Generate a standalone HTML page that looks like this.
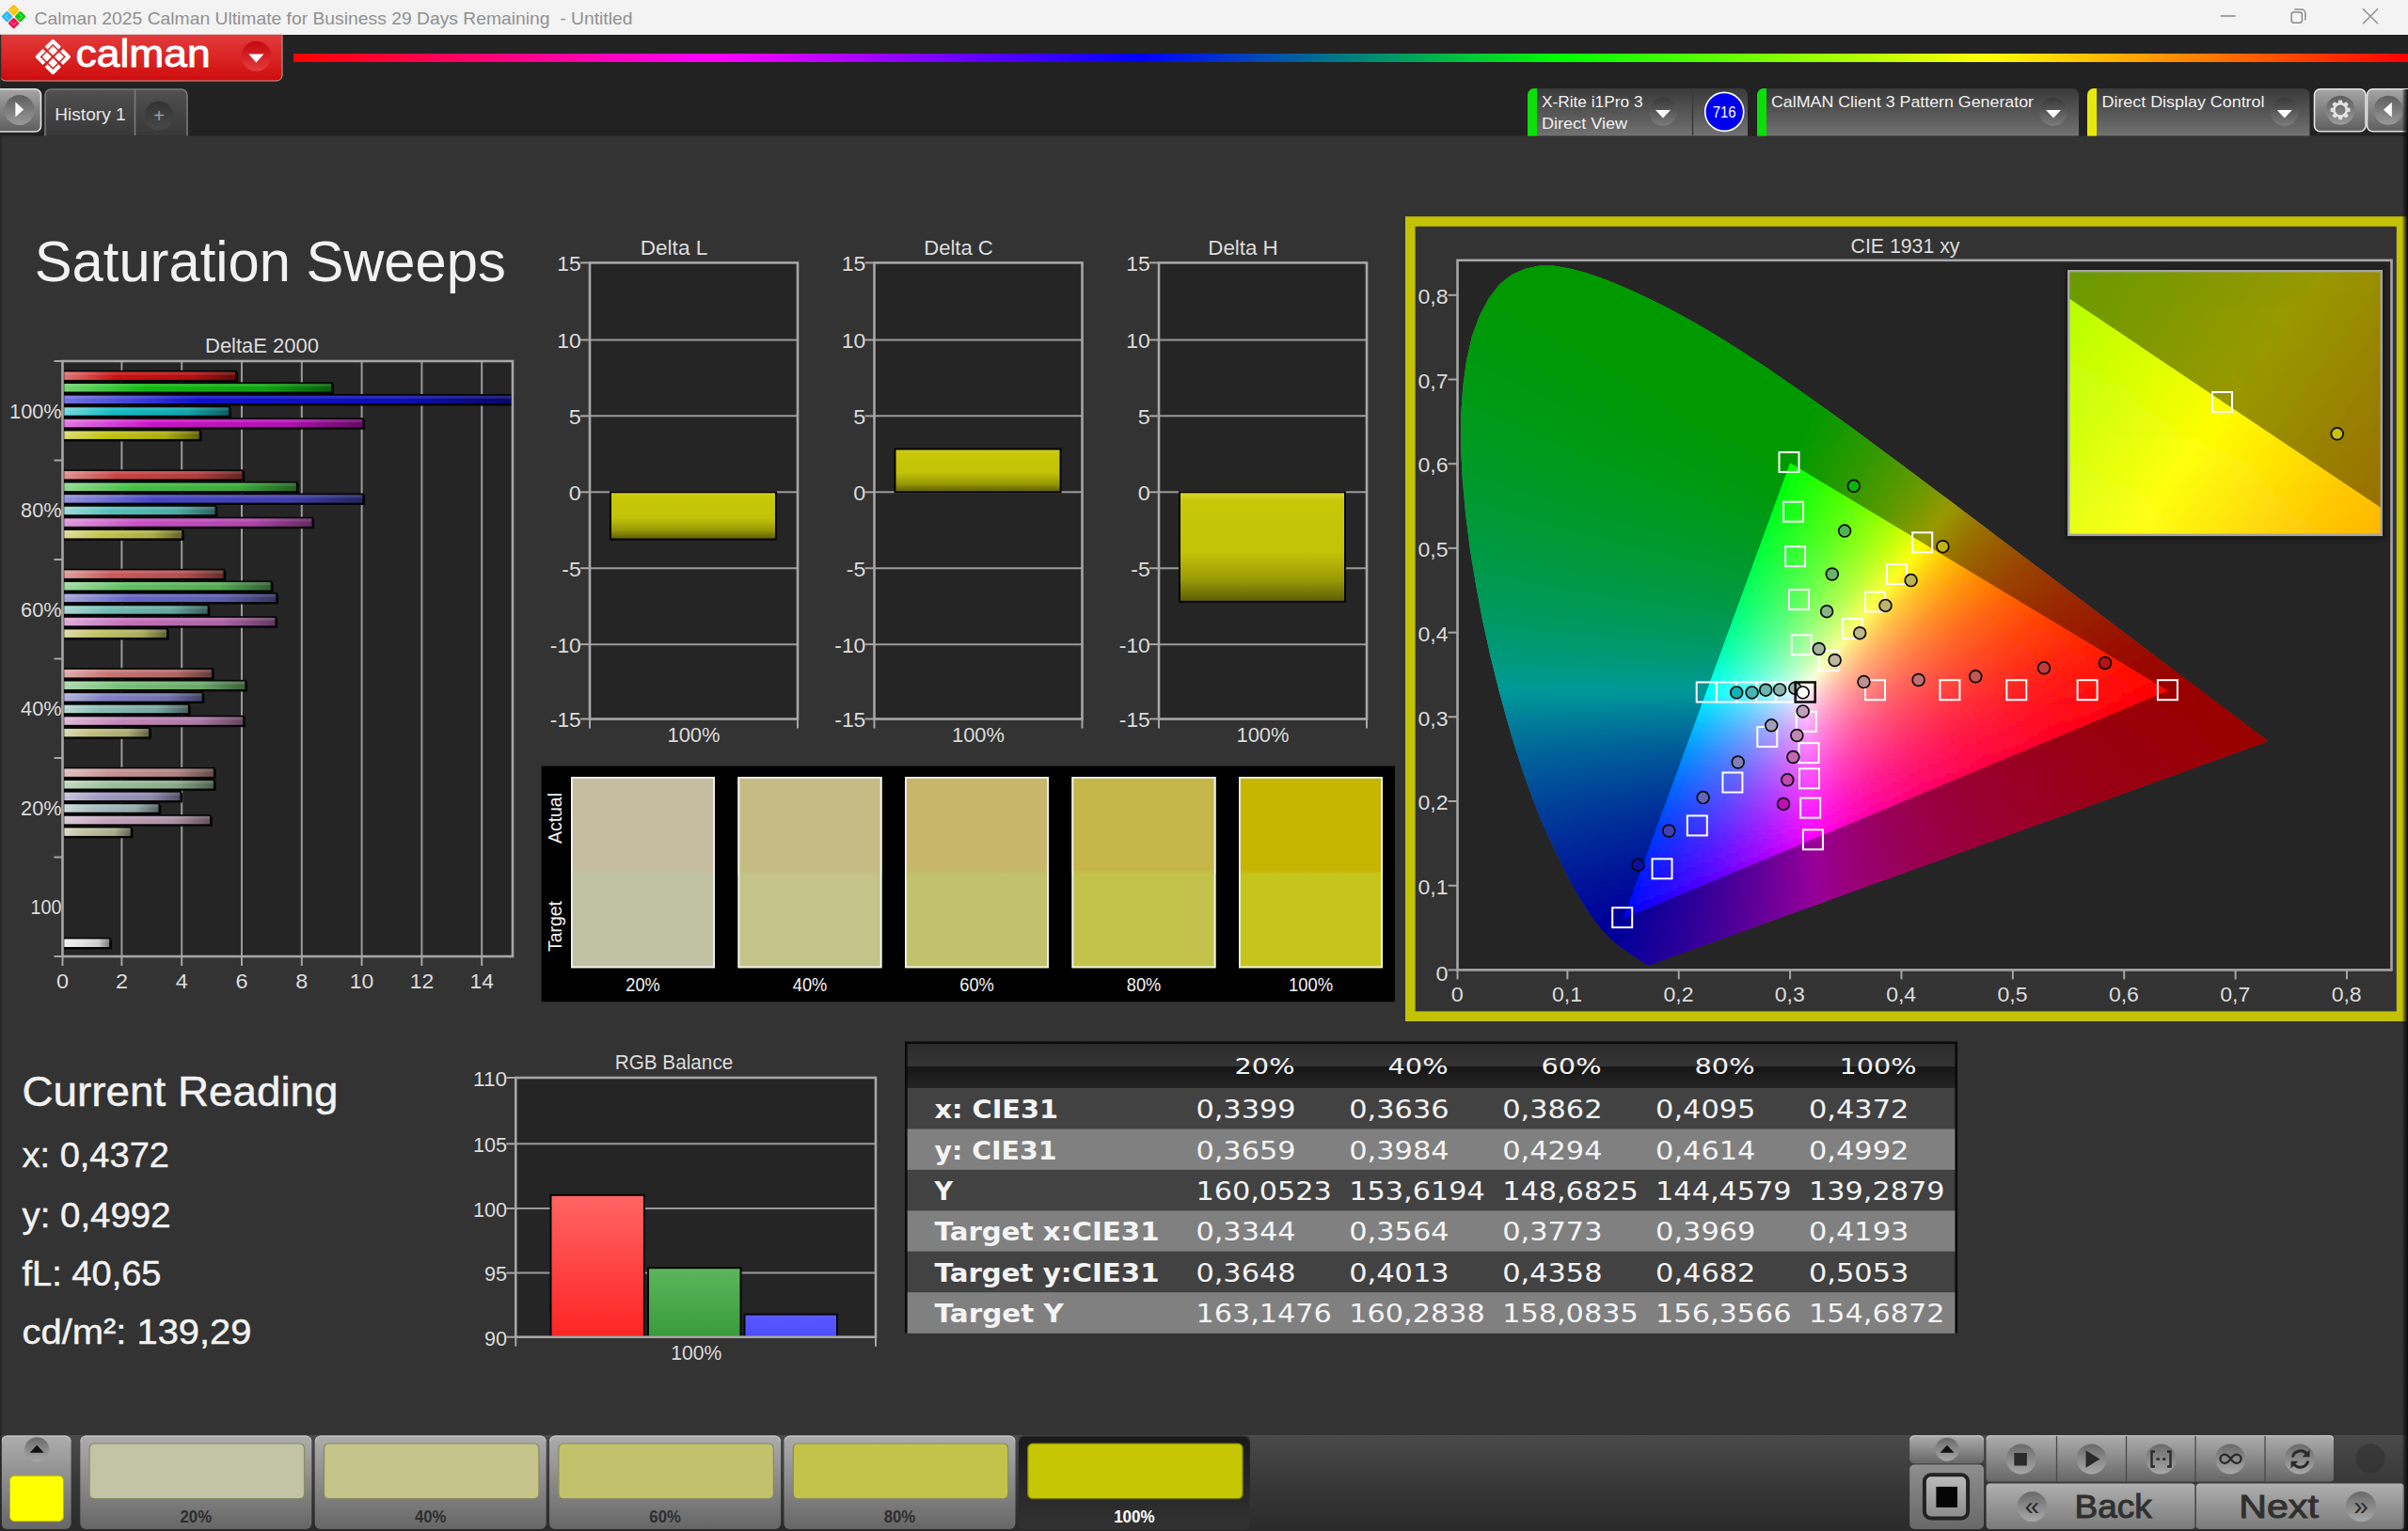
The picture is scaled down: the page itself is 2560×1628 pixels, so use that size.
<!DOCTYPE html>
<html lang="en"><head><meta charset="utf-8"><title>Calman 2025 - Saturation Sweeps</title>
<style>
html,body{margin:0;padding:0;background:#333;}
body{width:2560px;height:1628px;overflow:hidden;font-family:"Liberation Sans",Arial,sans-serif;}
svg{display:block;position:absolute;left:0;top:0;}
text{white-space:pre;}
</style></head><body>
<svg width="2560" height="1628" viewBox="0 0 2560 1628" font-family="'Liberation Sans', Arial, sans-serif"><defs><linearGradient id="g1" x1="0" y1="0" x2="0" y2="1"><stop offset="0" stop-color="#e23a3a"/><stop offset="0.5" stop-color="#da2424"/><stop offset="1" stop-color="#cd0c0c"/></linearGradient><radialGradient id="g2" cx="0.5" cy="0.3" r="0.8"><stop offset="0" stop-color="#c40a12"/><stop offset="0.7" stop-color="#cf1018"/><stop offset="1" stop-color="#e03838"/></radialGradient><linearGradient id="g3" x1="0" y1="0" x2="0" y2="1"><stop offset="0" stop-color="#c5070f"/><stop offset="1" stop-color="#e43c3c"/></linearGradient><linearGradient id="g4" x1="0" y1="0" x2="1" y2="0"><stop offset="0" stop-color="#ff0000"/><stop offset="0.2" stop-color="#ff00ff"/><stop offset="0.4" stop-color="#0000ff"/><stop offset="0.6" stop-color="#00ff00"/><stop offset="0.8" stop-color="#ffff00"/><stop offset="1" stop-color="#ff0000"/></linearGradient><linearGradient id="g5" x1="0" y1="0" x2="0" y2="1"><stop offset="0" stop-color="#a6a6a6"/><stop offset="0.5" stop-color="#808080"/><stop offset="1" stop-color="#5e5e5e"/></linearGradient><linearGradient id="g6" x1="0" y1="0" x2="0" y2="1"><stop offset="0" stop-color="#5e5e5e"/><stop offset="1" stop-color="#9a9a9a"/></linearGradient><linearGradient id="g7" x1="0" y1="0" x2="0" y2="1"><stop offset="0" stop-color="#505050"/><stop offset="1" stop-color="#383838"/></linearGradient><linearGradient id="g8" x1="0" y1="0" x2="0" y2="1"><stop offset="0" stop-color="#333"/><stop offset="1" stop-color="#484848"/></linearGradient><linearGradient id="g9" x1="0" y1="0" x2="0" y2="1"><stop offset="0" stop-color="#3a3a3a"/><stop offset="0.55" stop-color="#585858"/><stop offset="1" stop-color="#727272"/></linearGradient><linearGradient id="g10" x1="0" y1="0" x2="0" y2="1"><stop offset="0" stop-color="#383838"/><stop offset="1" stop-color="#7c7c7c"/></linearGradient><linearGradient id="g11" x1="0" y1="0" x2="0" y2="1"><stop offset="0" stop-color="#383838"/><stop offset="1" stop-color="#7c7c7c"/></linearGradient><linearGradient id="g12" x1="0" y1="0" x2="0" y2="1"><stop offset="0" stop-color="#383838"/><stop offset="1" stop-color="#7c7c7c"/></linearGradient><linearGradient id="g13" x1="0" y1="0" x2="0" y2="1"><stop offset="0" stop-color="#5e5e5e"/><stop offset="1" stop-color="#9a9a9a"/></linearGradient><linearGradient id="g14" x1="0" y1="0" x2="0" y2="1"><stop offset="0" stop-color="#5e5e5e"/><stop offset="1" stop-color="#9a9a9a"/></linearGradient><linearGradient id="g15" x1="0" y1="0" x2="1" y2="0"><stop offset="0" stop-color="#e17676"/><stop offset="0.3" stop-color="#cc1212"/><stop offset="0.75" stop-color="#b41010"/><stop offset="1" stop-color="#660909"/></linearGradient><linearGradient id="g16" x1="0" y1="0" x2="1" y2="0"><stop offset="0" stop-color="#76d676"/><stop offset="0.3" stop-color="#12b812"/><stop offset="0.75" stop-color="#10a210"/><stop offset="1" stop-color="#095c09"/></linearGradient><linearGradient id="g17" x1="0" y1="0" x2="1" y2="0"><stop offset="0" stop-color="#7474e1"/><stop offset="0.3" stop-color="#1010cc"/><stop offset="0.75" stop-color="#0e0eb4"/><stop offset="1" stop-color="#080866"/></linearGradient><linearGradient id="g18" x1="0" y1="0" x2="1" y2="0"><stop offset="0" stop-color="#76d8dd"/><stop offset="0.3" stop-color="#12bcc4"/><stop offset="0.75" stop-color="#10a5ac"/><stop offset="1" stop-color="#095e62"/></linearGradient><linearGradient id="g19" x1="0" y1="0" x2="1" y2="0"><stop offset="0" stop-color="#df77df"/><stop offset="0.3" stop-color="#c814c8"/><stop offset="0.75" stop-color="#b012b0"/><stop offset="1" stop-color="#640a64"/></linearGradient><linearGradient id="g20" x1="0" y1="0" x2="1" y2="0"><stop offset="0" stop-color="#dddd76"/><stop offset="0.3" stop-color="#c4c412"/><stop offset="0.75" stop-color="#acac10"/><stop offset="1" stop-color="#626209"/></linearGradient><linearGradient id="g21" x1="0" y1="0" x2="1" y2="0"><stop offset="0" stop-color="#df9393"/><stop offset="0.3" stop-color="#c84444"/><stop offset="0.75" stop-color="#b03c3c"/><stop offset="1" stop-color="#642222"/></linearGradient><linearGradient id="g22" x1="0" y1="0" x2="1" y2="0"><stop offset="0" stop-color="#93da93"/><stop offset="0.3" stop-color="#44c044"/><stop offset="0.75" stop-color="#3ca93c"/><stop offset="1" stop-color="#226022"/></linearGradient><linearGradient id="g23" x1="0" y1="0" x2="1" y2="0"><stop offset="0" stop-color="#9494dd"/><stop offset="0.3" stop-color="#4646c4"/><stop offset="0.75" stop-color="#3e3eac"/><stop offset="1" stop-color="#232362"/></linearGradient><linearGradient id="g24" x1="0" y1="0" x2="1" y2="0"><stop offset="0" stop-color="#9edad8"/><stop offset="0.3" stop-color="#58c0bc"/><stop offset="0.75" stop-color="#4da9a5"/><stop offset="1" stop-color="#2c605e"/></linearGradient><linearGradient id="g25" x1="0" y1="0" x2="1" y2="0"><stop offset="0" stop-color="#df9add"/><stop offset="0.3" stop-color="#c850c4"/><stop offset="0.75" stop-color="#b046ac"/><stop offset="1" stop-color="#642862"/></linearGradient><linearGradient id="g26" x1="0" y1="0" x2="1" y2="0"><stop offset="0" stop-color="#dddd9a"/><stop offset="0.3" stop-color="#c4c450"/><stop offset="0.75" stop-color="#acac46"/><stop offset="1" stop-color="#626228"/></linearGradient><linearGradient id="g27" x1="0" y1="0" x2="1" y2="0"><stop offset="0" stop-color="#df9f9f"/><stop offset="0.3" stop-color="#c85a5a"/><stop offset="0.75" stop-color="#b04f4f"/><stop offset="1" stop-color="#642d2d"/></linearGradient><linearGradient id="g28" x1="0" y1="0" x2="1" y2="0"><stop offset="0" stop-color="#a4daa4"/><stop offset="0.3" stop-color="#62c062"/><stop offset="0.75" stop-color="#56a956"/><stop offset="1" stop-color="#316031"/></linearGradient><linearGradient id="g29" x1="0" y1="0" x2="1" y2="0"><stop offset="0" stop-color="#a7a7dd"/><stop offset="0.3" stop-color="#6868c4"/><stop offset="0.75" stop-color="#5c5cac"/><stop offset="1" stop-color="#343462"/></linearGradient><linearGradient id="g30" x1="0" y1="0" x2="1" y2="0"><stop offset="0" stop-color="#acd8d4"/><stop offset="0.3" stop-color="#70bcb4"/><stop offset="0.75" stop-color="#63a59e"/><stop offset="1" stop-color="#385e5a"/></linearGradient><linearGradient id="g31" x1="0" y1="0" x2="1" y2="0"><stop offset="0" stop-color="#ddacd8"/><stop offset="0.3" stop-color="#c470bc"/><stop offset="0.75" stop-color="#ac63a5"/><stop offset="1" stop-color="#62385e"/></linearGradient><linearGradient id="g32" x1="0" y1="0" x2="1" y2="0"><stop offset="0" stop-color="#dddda7"/><stop offset="0.3" stop-color="#c4c468"/><stop offset="0.75" stop-color="#acac5c"/><stop offset="1" stop-color="#626234"/></linearGradient><linearGradient id="g33" x1="0" y1="0" x2="1" y2="0"><stop offset="0" stop-color="#dfaeae"/><stop offset="0.3" stop-color="#c87474"/><stop offset="0.75" stop-color="#b06666"/><stop offset="1" stop-color="#643a3a"/></linearGradient><linearGradient id="g34" x1="0" y1="0" x2="1" y2="0"><stop offset="0" stop-color="#b2dab2"/><stop offset="0.3" stop-color="#7ac07a"/><stop offset="0.75" stop-color="#6ba96b"/><stop offset="1" stop-color="#3d603d"/></linearGradient><linearGradient id="g35" x1="0" y1="0" x2="1" y2="0"><stop offset="0" stop-color="#b5b5dd"/><stop offset="0.3" stop-color="#8080c4"/><stop offset="0.75" stop-color="#7171ac"/><stop offset="1" stop-color="#404062"/></linearGradient><linearGradient id="g36" x1="0" y1="0" x2="1" y2="0"><stop offset="0" stop-color="#bbd8d4"/><stop offset="0.3" stop-color="#8abcb4"/><stop offset="0.75" stop-color="#79a59e"/><stop offset="1" stop-color="#455e5a"/></linearGradient><linearGradient id="g37" x1="0" y1="0" x2="1" y2="0"><stop offset="0" stop-color="#ddbad8"/><stop offset="0.3" stop-color="#c488bc"/><stop offset="0.75" stop-color="#ac78a5"/><stop offset="1" stop-color="#62445e"/></linearGradient><linearGradient id="g38" x1="0" y1="0" x2="1" y2="0"><stop offset="0" stop-color="#dadab5"/><stop offset="0.3" stop-color="#c0c080"/><stop offset="0.75" stop-color="#a9a971"/><stop offset="1" stop-color="#606040"/></linearGradient><linearGradient id="g39" x1="0" y1="0" x2="1" y2="0"><stop offset="0" stop-color="#dfc1c1"/><stop offset="0.3" stop-color="#c89494"/><stop offset="0.75" stop-color="#b08282"/><stop offset="1" stop-color="#644a4a"/></linearGradient><linearGradient id="g40" x1="0" y1="0" x2="1" y2="0"><stop offset="0" stop-color="#c4dac4"/><stop offset="0.3" stop-color="#9ac09a"/><stop offset="0.75" stop-color="#88a988"/><stop offset="1" stop-color="#4d604d"/></linearGradient><linearGradient id="g41" x1="0" y1="0" x2="1" y2="0"><stop offset="0" stop-color="#c8c6dd"/><stop offset="0.3" stop-color="#a09cc4"/><stop offset="0.75" stop-color="#8d89ac"/><stop offset="1" stop-color="#504e62"/></linearGradient><linearGradient id="g42" x1="0" y1="0" x2="1" y2="0"><stop offset="0" stop-color="#cddada"/><stop offset="0.3" stop-color="#a8c0c0"/><stop offset="0.75" stop-color="#94a9a9"/><stop offset="1" stop-color="#546060"/></linearGradient><linearGradient id="g43" x1="0" y1="0" x2="1" y2="0"><stop offset="0" stop-color="#ddcad8"/><stop offset="0.3" stop-color="#c4a4bc"/><stop offset="0.75" stop-color="#ac90a5"/><stop offset="1" stop-color="#62525e"/></linearGradient><linearGradient id="g44" x1="0" y1="0" x2="1" y2="0"><stop offset="0" stop-color="#dadac8"/><stop offset="0.3" stop-color="#c0c0a0"/><stop offset="0.75" stop-color="#a9a98d"/><stop offset="1" stop-color="#606050"/></linearGradient><linearGradient id="g45" x1="0" y1="0" x2="1" y2="0"><stop offset="0" stop-color="#f2f2f2"/><stop offset="0.3" stop-color="#e8e8e8"/><stop offset="0.75" stop-color="#cccccc"/><stop offset="1" stop-color="#747474"/></linearGradient><linearGradient id="g46" x1="0" y1="0" x2="0" y2="1"><stop offset="0" stop-color="#d8d830"/><stop offset="0.08" stop-color="#c8c808"/><stop offset="0.55" stop-color="#c2c208"/><stop offset="0.8" stop-color="#9a9a08"/><stop offset="1" stop-color="#5c5c06"/></linearGradient><linearGradient id="g47" x1="0" y1="0" x2="0" y2="1"><stop offset="0" stop-color="#d8d830"/><stop offset="0.08" stop-color="#c8c808"/><stop offset="0.55" stop-color="#c2c208"/><stop offset="0.8" stop-color="#9a9a08"/><stop offset="1" stop-color="#5c5c06"/></linearGradient><linearGradient id="g48" x1="0" y1="0" x2="0" y2="1"><stop offset="0" stop-color="#d8d830"/><stop offset="0.08" stop-color="#c8c808"/><stop offset="0.55" stop-color="#c2c208"/><stop offset="0.8" stop-color="#9a9a08"/><stop offset="1" stop-color="#5c5c06"/></linearGradient><linearGradient id="g49" x1="0" y1="0" x2="0" y2="1"><stop offset="0" stop-color="#c6bda1"/><stop offset="0.97" stop-color="#c6bda1"/><stop offset="1" stop-color="#c1c1a5"/></linearGradient><linearGradient id="g50" x1="0" y1="0" x2="0" y2="1"><stop offset="0" stop-color="#c5bc83"/><stop offset="0.97" stop-color="#c5bc83"/><stop offset="1" stop-color="#c3c38a"/></linearGradient><linearGradient id="g51" x1="0" y1="0" x2="0" y2="1"><stop offset="0" stop-color="#c6b76a"/><stop offset="0.97" stop-color="#c6b76a"/><stop offset="1" stop-color="#c2c26c"/></linearGradient><linearGradient id="g52" x1="0" y1="0" x2="0" y2="1"><stop offset="0" stop-color="#c5b64a"/><stop offset="0.97" stop-color="#c5b64a"/><stop offset="1" stop-color="#c3c34b"/></linearGradient><linearGradient id="g53" x1="0" y1="0" x2="0" y2="1"><stop offset="0" stop-color="#c7b503"/><stop offset="0.97" stop-color="#c7b503"/><stop offset="1" stop-color="#c5c51c"/></linearGradient><clipPath id="locclip"><path d="M1754.29 1025.92L1754.26 1025.91L1754.22 1025.91L1754.17 1025.92L1754.1 1025.94L1754.01 1025.98L1753.93 1026L1753.86 1026.01L1753.78 1026L1753.7 1026L1753.59 1026.03L1753.46 1026.07L1753.34 1026.09L1753.23 1026.1L1753.11 1026.1L1752.99 1026.09L1752.84 1026.09L1752.68 1026.09L1752.51 1026.09L1752.33 1026.1L1752.14 1026.11L1751.92 1026.09L1751.68 1026.04L1751.41 1025.95L1751.09 1025.83L1750.71 1025.66L1750.27 1025.45L1749.79 1025.2L1749.3 1024.92L1748.76 1024.59L1748.14 1024.21L1747.43 1023.76L1746.63 1023.25L1745.78 1022.69L1744.87 1022.06L1743.9 1021.37L1742.82 1020.62L1741.64 1019.83L1740.36 1018.97L1738.92 1018.02L1737.3 1016.96L1735.52 1015.8L1733.6 1014.52L1731.55 1013.17L1729.36 1011.7L1726.98 1010.04L1724.41 1008.18L1721.66 1006.13L1718.71 1003.76L1715.62 1001.18L1712.33 998.28L1708.66 994.61L1704.56 990.14L1700.08 984.9L1695.19 978.55L1689.91 971.18L1684.23 962.7L1678.05 952.54L1671.36 940.67L1664.17 927.12L1656.42 911.37L1647.92 893.38L1638.86 873.19L1629.7 850.37L1620.52 824.7L1611.25 796.41L1602.16 765.79L1593.12 732.41L1584.27 696.71L1576.28 660.21L1569.19 622.85L1562.97 584.69L1558.19 547.46L1554.91 511.34L1553.07 476.14L1553.11 443.04L1555.14 412.01L1559.05 383.06L1564.93 357.47L1573.01 335.43L1583.06 316.74L1594.48 302.04L1607.32 291.88L1621.53 285.72L1636.32 282.48L1651.62 282.38L1667.51 285.21L1683.48 289.3L1699.49 294.39L1715.57 300.75L1731.36 307.51L1746.67 314.41L1761.69 321.71L1776.51 329.3L1791.12 337.18L1805.54 345.35L1819.89 353.79L1834.21 362.52L1848.47 371.51L1862.68 380.7L1876.82 390.09L1890.91 399.68L1904.99 409.41L1919.06 419.27L1933.12 429.27L1947.19 439.37L1961.29 449.57L1975.41 459.87L1989.5 470.22L2003.56 480.63L2017.58 491.08L2031.58 501.53L2045.58 511.98L2059.55 522.43L2073.43 532.83L2087.2 543.21L2100.89 553.54L2114.44 563.78L2127.87 573.93L2141.16 584L2154.28 593.92L2167.21 603.71L2179.96 613.35L2192.45 622.8L2204.72 632.05L2216.73 641.1L2228.39 649.89L2239.69 658.46L2250.65 666.79L2261.13 674.74L2271.07 682.26L2280.53 689.41L2289.61 696.27L2298.38 702.89L2306.76 709.23L2314.67 715.19L2322.07 720.75L2328.99 725.93L2335.48 730.8L2341.53 735.38L2347.14 739.65L2352.38 743.63L2357.22 747.31L2361.69 750.7L2365.85 753.85L2369.72 756.76L2373.28 759.43L2376.61 761.93L2379.7 764.26L2382.55 766.43L2385.24 768.48L2387.79 770.42L2390.19 772.24L2392.45 773.95L2394.56 775.55L2396.52 777.05L2398.36 778.43L2400.07 779.7L2401.64 780.86L2403.09 781.93L2404.39 782.91L2405.56 783.8L2406.63 784.62L2407.63 785.38L2408.53 786.06L2409.35 786.69L2410.15 787.29L2410.87 787.83L2411.36 788.21Z"/></clipPath><filter id="vblur" x="-2%" y="-2%" width="104%" height="104%"><feGaussianBlur stdDeviation="0 3"/></filter><linearGradient id="g54" gradientUnits="userSpaceOnUse" x1="1621.5" y1="0" x2="1669.5" y2="0"><stop offset="0" stop-color="#00ff00"/><stop offset="1" stop-color="#00ff00"/></linearGradient><linearGradient id="g55" gradientUnits="userSpaceOnUse" x1="1605.5" y1="0" x2="1689.5" y2="0"><stop offset="0" stop-color="#00ff00"/><stop offset="1" stop-color="#00ff00"/></linearGradient><linearGradient id="g56" gradientUnits="userSpaceOnUse" x1="1597.5" y1="0" x2="1705.5" y2="0"><stop offset="0" stop-color="#00ff00"/><stop offset="1" stop-color="#00ff00"/></linearGradient><linearGradient id="g57" gradientUnits="userSpaceOnUse" x1="1593.5" y1="0" x2="1717.5" y2="0"><stop offset="0" stop-color="#00ff00"/><stop offset="1" stop-color="#00ff00"/></linearGradient><linearGradient id="g58" gradientUnits="userSpaceOnUse" x1="1585.5" y1="0" x2="1729.5" y2="0"><stop offset="0" stop-color="#00ff01"/><stop offset="1" stop-color="#00ff00"/></linearGradient><linearGradient id="g59" gradientUnits="userSpaceOnUse" x1="1581.5" y1="0" x2="1741.5" y2="0"><stop offset="0" stop-color="#00ff03"/><stop offset="1" stop-color="#00ff00"/></linearGradient><linearGradient id="g60" gradientUnits="userSpaceOnUse" x1="1577.5" y1="0" x2="1753.5" y2="0"><stop offset="0" stop-color="#00ff04"/><stop offset=".409" stop-color="#00ff00"/><stop offset="1" stop-color="#00ff00"/></linearGradient><linearGradient id="g61" gradientUnits="userSpaceOnUse" x1="1577.5" y1="0" x2="1761.5" y2="0"><stop offset="0" stop-color="#00ff06"/><stop offset=".37" stop-color="#00ff00"/><stop offset="1" stop-color="#00ff00"/></linearGradient><linearGradient id="g62" gradientUnits="userSpaceOnUse" x1="1573.5" y1="0" x2="1773.5" y2="0"><stop offset="0" stop-color="#00ff08"/><stop offset=".38" stop-color="#00ff00"/><stop offset="1" stop-color="#00ff00"/></linearGradient><linearGradient id="g63" gradientUnits="userSpaceOnUse" x1="1569.5" y1="0" x2="1781.5" y2="0"><stop offset="0" stop-color="#00ff09"/><stop offset=".396" stop-color="#00ff00"/><stop offset="1" stop-color="#00ff00"/></linearGradient><linearGradient id="g64" gradientUnits="userSpaceOnUse" x1="1569.5" y1="0" x2="1793.5" y2="0"><stop offset="0" stop-color="#00ff0b"/><stop offset=".411" stop-color="#00ff00"/><stop offset="1" stop-color="#00ff00"/></linearGradient><linearGradient id="g65" gradientUnits="userSpaceOnUse" x1="1565.5" y1="0" x2="1801.5" y2="0"><stop offset="0" stop-color="#00ff0d"/><stop offset=".441" stop-color="#00ff00"/><stop offset="1" stop-color="#00ff00"/></linearGradient><linearGradient id="g66" gradientUnits="userSpaceOnUse" x1="1565.5" y1="0" x2="1809.5" y2="0"><stop offset="0" stop-color="#00ff0e"/><stop offset=".459" stop-color="#00ff00"/><stop offset="1" stop-color="#00ff00"/></linearGradient><linearGradient id="g67" gradientUnits="userSpaceOnUse" x1="1561.5" y1="0" x2="1817.5" y2="0"><stop offset="0" stop-color="#00ff10"/><stop offset=".484" stop-color="#00ff00"/><stop offset="1" stop-color="#00ff00"/></linearGradient><linearGradient id="g68" gradientUnits="userSpaceOnUse" x1="1561.5" y1="0" x2="1825.5" y2="0"><stop offset="0" stop-color="#00ff11"/><stop offset=".5" stop-color="#00ff00"/><stop offset="1" stop-color="#00ff00"/></linearGradient><linearGradient id="g69" gradientUnits="userSpaceOnUse" x1="1557.5" y1="0" x2="1833.5" y2="0"><stop offset="0" stop-color="#00ff13"/><stop offset=".522" stop-color="#00ff00"/><stop offset="1" stop-color="#00ff00"/></linearGradient><linearGradient id="g70" gradientUnits="userSpaceOnUse" x1="1557.5" y1="0" x2="1841.5" y2="0"><stop offset="0" stop-color="#00ff15"/><stop offset=".535" stop-color="#00ff00"/><stop offset="1" stop-color="#00ff00"/></linearGradient><linearGradient id="g71" gradientUnits="userSpaceOnUse" x1="1557.5" y1="0" x2="1849.5" y2="0"><stop offset="0" stop-color="#00ff16"/><stop offset=".548" stop-color="#00ff00"/><stop offset="1" stop-color="#00ff00"/></linearGradient><linearGradient id="g72" gradientUnits="userSpaceOnUse" x1="1553.5" y1="0" x2="1857.5" y2="0"><stop offset="0" stop-color="#00ff18"/><stop offset=".566" stop-color="#00ff00"/><stop offset="1" stop-color="#00ff00"/></linearGradient><linearGradient id="g73" gradientUnits="userSpaceOnUse" x1="1553.5" y1="0" x2="1865.5" y2="0"><stop offset="0" stop-color="#00ff1a"/><stop offset=".577" stop-color="#00ff00"/><stop offset="1" stop-color="#00ff00"/></linearGradient><linearGradient id="g74" gradientUnits="userSpaceOnUse" x1="1553.5" y1="0" x2="1873.5" y2="0"><stop offset="0" stop-color="#00ff1b"/><stop offset=".588" stop-color="#00ff00"/><stop offset="1" stop-color="#00ff00"/></linearGradient><linearGradient id="g75" gradientUnits="userSpaceOnUse" x1="1553.5" y1="0" x2="1881.5" y2="0"><stop offset="0" stop-color="#00ff1d"/><stop offset=".598" stop-color="#00ff00"/><stop offset="1" stop-color="#00ff00"/></linearGradient><linearGradient id="g76" gradientUnits="userSpaceOnUse" x1="1553.5" y1="0" x2="1889.5" y2="0"><stop offset="0" stop-color="#00ff1e"/><stop offset=".607" stop-color="#00ff00"/><stop offset="1" stop-color="#00ff00"/></linearGradient><linearGradient id="g77" gradientUnits="userSpaceOnUse" x1="1549.5" y1="0" x2="1897.5" y2="0"><stop offset="0" stop-color="#00ff20"/><stop offset=".621" stop-color="#00ff00"/><stop offset="1" stop-color="#00ff00"/></linearGradient><linearGradient id="g78" gradientUnits="userSpaceOnUse" x1="1549.5" y1="0" x2="1905.5" y2="0"><stop offset="0" stop-color="#00ff22"/><stop offset=".629" stop-color="#00ff00"/><stop offset="1" stop-color="#00ff00"/></linearGradient><linearGradient id="g79" gradientUnits="userSpaceOnUse" x1="1549.5" y1="0" x2="1909.5" y2="0"><stop offset="0" stop-color="#00ff24"/><stop offset=".644" stop-color="#00ff00"/><stop offset="1" stop-color="#00ff00"/></linearGradient><linearGradient id="g80" gradientUnits="userSpaceOnUse" x1="1549.5" y1="0" x2="1917.5" y2="0"><stop offset="0" stop-color="#00ff25"/><stop offset=".652" stop-color="#00ff00"/><stop offset="1" stop-color="#00ff00"/></linearGradient><linearGradient id="g81" gradientUnits="userSpaceOnUse" x1="1549.5" y1="0" x2="1925.5" y2="0"><stop offset="0" stop-color="#00ff27"/><stop offset=".66" stop-color="#00ff00"/><stop offset="1" stop-color="#00ff00"/></linearGradient><linearGradient id="g82" gradientUnits="userSpaceOnUse" x1="1549.5" y1="0" x2="1933.5" y2="0"><stop offset="0" stop-color="#00ff29"/><stop offset=".667" stop-color="#00ff00"/><stop offset=".99" stop-color="#01ff00"/><stop offset="1" stop-color="#05ff00"/></linearGradient><linearGradient id="g83" gradientUnits="userSpaceOnUse" x1="1549.5" y1="0" x2="1937.5" y2="0"><stop offset="0" stop-color="#00ff2a"/><stop offset=".68" stop-color="#00ff00"/><stop offset=".969" stop-color="#00ff00"/><stop offset="1" stop-color="#0aff00"/></linearGradient><linearGradient id="g84" gradientUnits="userSpaceOnUse" x1="1549.5" y1="0" x2="1945.5" y2="0"><stop offset="0" stop-color="#00ff2c"/><stop offset=".687" stop-color="#00ff00"/><stop offset=".949" stop-color="#01ff00"/><stop offset="1" stop-color="#13ff00"/></linearGradient><linearGradient id="g85" gradientUnits="userSpaceOnUse" x1="1549.5" y1="0" x2="1953.5" y2="0"><stop offset="0" stop-color="#00ff2e"/><stop offset=".693" stop-color="#00ff00"/><stop offset=".921" stop-color="#00ff00"/><stop offset="1" stop-color="#1cff00"/></linearGradient><linearGradient id="g86" gradientUnits="userSpaceOnUse" x1="1549.5" y1="0" x2="1961.5" y2="0"><stop offset="0" stop-color="#00ff30"/><stop offset=".699" stop-color="#00ff00"/><stop offset=".903" stop-color="#01ff00"/><stop offset="1" stop-color="#25ff00"/></linearGradient><linearGradient id="g87" gradientUnits="userSpaceOnUse" x1="1549.5" y1="0" x2="1965.5" y2="0"><stop offset="0" stop-color="#00ff32"/><stop offset=".654" stop-color="#00ff02"/><stop offset=".894" stop-color="#02ff00"/><stop offset="1" stop-color="#2bff00"/></linearGradient><linearGradient id="g88" gradientUnits="userSpaceOnUse" x1="1549.5" y1="0" x2="1973.5" y2="0"><stop offset="0" stop-color="#00ff34"/><stop offset=".632" stop-color="#00ff05"/><stop offset=".736" stop-color="#00ff00"/><stop offset=".868" stop-color="#01ff00"/><stop offset="1" stop-color="#35ff00"/></linearGradient><linearGradient id="g89" gradientUnits="userSpaceOnUse" x1="1549.5" y1="0" x2="1981.5" y2="0"><stop offset="0" stop-color="#00ff36"/><stop offset=".62" stop-color="#00ff07"/><stop offset=".731" stop-color="#00ff00"/><stop offset=".852" stop-color="#02ff00"/><stop offset="1" stop-color="#40ff00"/></linearGradient><linearGradient id="g90" gradientUnits="userSpaceOnUse" x1="1549.5" y1="0" x2="1989.5" y2="0"><stop offset="0" stop-color="#00ff37"/><stop offset=".609" stop-color="#00ff09"/><stop offset=".727" stop-color="#00ff00"/><stop offset=".827" stop-color="#00ff00"/><stop offset="1" stop-color="#4bff00"/></linearGradient><linearGradient id="g91" gradientUnits="userSpaceOnUse" x1="1549.5" y1="0" x2="1993.5" y2="0"><stop offset="0" stop-color="#00ff39"/><stop offset=".604" stop-color="#00ff0b"/><stop offset=".739" stop-color="#00ff00"/><stop offset=".82" stop-color="#02ff00"/><stop offset="1" stop-color="#52ff00"/></linearGradient><linearGradient id="g92" gradientUnits="userSpaceOnUse" x1="1549.5" y1="0" x2="2001.5" y2="0"><stop offset="0" stop-color="#00ff3b"/><stop offset=".584" stop-color="#00ff0e"/><stop offset=".743" stop-color="#00ff00"/><stop offset=".796" stop-color="#00ff00"/><stop offset="1" stop-color="#5eff00"/></linearGradient><linearGradient id="g93" gradientUnits="userSpaceOnUse" x1="1549.5" y1="0" x2="2009.5" y2="0"><stop offset="0" stop-color="#00ff3e"/><stop offset=".574" stop-color="#00ff10"/><stop offset=".748" stop-color="#00ff00"/><stop offset=".783" stop-color="#02ff00"/><stop offset=".983" stop-color="#61ff00"/><stop offset="1" stop-color="#6aff00"/></linearGradient><linearGradient id="g94" gradientUnits="userSpaceOnUse" x1="1549.5" y1="0" x2="2013.5" y2="0"><stop offset="0" stop-color="#00ff40"/><stop offset=".569" stop-color="#00ff12"/><stop offset=".759" stop-color="#00ff00"/><stop offset=".784" stop-color="#07ff00"/><stop offset=".983" stop-color="#69ff00"/><stop offset="1" stop-color="#72ff00"/></linearGradient><linearGradient id="g95" gradientUnits="userSpaceOnUse" x1="1549.5" y1="0" x2="2021.5" y2="0"><stop offset="0" stop-color="#00ff42"/><stop offset=".551" stop-color="#00ff15"/><stop offset=".754" stop-color="#01ff00"/><stop offset=".949" stop-color="#63ff00"/><stop offset="1" stop-color="#7fff00"/></linearGradient><linearGradient id="g96" gradientUnits="userSpaceOnUse" x1="1549.5" y1="0" x2="2029.5" y2="0"><stop offset="0" stop-color="#00ff44"/><stop offset=".542" stop-color="#00ff17"/><stop offset=".733" stop-color="#00ff01"/><stop offset=".908" stop-color="#58ff00"/><stop offset="1" stop-color="#8dff00"/></linearGradient><linearGradient id="g97" gradientUnits="userSpaceOnUse" x1="1549.5" y1="0" x2="2033.5" y2="0"><stop offset="0" stop-color="#00ff46"/><stop offset=".537" stop-color="#00ff19"/><stop offset=".727" stop-color="#01ff04"/><stop offset=".835" stop-color="#37ff00"/><stop offset="1" stop-color="#97ff00"/></linearGradient><linearGradient id="g98" gradientUnits="userSpaceOnUse" x1="1549.5" y1="0" x2="2041.5" y2="0"><stop offset="0" stop-color="#00ff48"/><stop offset=".528" stop-color="#00ff1c"/><stop offset=".707" stop-color="#00ff07"/><stop offset=".789" stop-color="#28ff00"/><stop offset=".959" stop-color="#8bff00"/><stop offset="1" stop-color="#a6ff00"/></linearGradient><linearGradient id="g99" gradientUnits="userSpaceOnUse" x1="1549.5" y1="0" x2="2049.5" y2="0"><stop offset="0" stop-color="#00ff4b"/><stop offset=".512" stop-color="#00ff1f"/><stop offset=".696" stop-color="#01ff09"/><stop offset=".792" stop-color="#33ff00"/><stop offset=".952" stop-color="#95ff00"/><stop offset="1" stop-color="#b6ff00"/></linearGradient><linearGradient id="g100" gradientUnits="userSpaceOnUse" x1="1549.5" y1="0" x2="2053.5" y2="0"><stop offset="0" stop-color="#00ff4d"/><stop offset=".508" stop-color="#00ff21"/><stop offset=".69" stop-color="#03ff0c"/><stop offset=".794" stop-color="#3aff00"/><stop offset=".952" stop-color="#9eff00"/><stop offset="1" stop-color="#c0ff00"/></linearGradient><linearGradient id="g101" gradientUnits="userSpaceOnUse" x1="1549.5" y1="0" x2="2061.5" y2="0"><stop offset="0" stop-color="#00ff4f"/><stop offset=".5" stop-color="#00ff24"/><stop offset=".672" stop-color="#00ff0f"/><stop offset=".797" stop-color="#47ff00"/><stop offset=".945" stop-color="#a9ff00"/><stop offset="1" stop-color="#d2ff00"/></linearGradient><linearGradient id="g102" gradientUnits="userSpaceOnUse" x1="1549.5" y1="0" x2="2069.5" y2="0"><stop offset="0" stop-color="#00ff52"/><stop offset=".492" stop-color="#00ff26"/><stop offset=".662" stop-color="#02ff11"/><stop offset=".8" stop-color="#53ff00"/><stop offset=".946" stop-color="#b9ff00"/><stop offset="1" stop-color="#e4ff00"/></linearGradient><linearGradient id="g103" gradientUnits="userSpaceOnUse" x1="1549.5" y1="0" x2="2073.5" y2="0"><stop offset="0" stop-color="#00ff54"/><stop offset=".481" stop-color="#00ff2a"/><stop offset=".649" stop-color="#00ff15"/><stop offset=".809" stop-color="#61ff00"/><stop offset=".947" stop-color="#c4ff00"/><stop offset="1" stop-color="#f1ff00"/></linearGradient><linearGradient id="g104" gradientUnits="userSpaceOnUse" x1="1549.5" y1="0" x2="2081.5" y2="0"><stop offset="0" stop-color="#00ff57"/><stop offset=".474" stop-color="#00ff2c"/><stop offset=".639" stop-color="#02ff18"/><stop offset=".797" stop-color="#64ff00"/><stop offset=".932" stop-color="#caff00"/><stop offset=".992" stop-color="#feff00"/><stop offset="1" stop-color="#fff900"/></linearGradient><linearGradient id="g105" gradientUnits="userSpaceOnUse" x1="1549.5" y1="0" x2="2089.5" y2="0"><stop offset="0" stop-color="#00ff59"/><stop offset=".467" stop-color="#00ff2f"/><stop offset=".622" stop-color="#00ff1b"/><stop offset=".77" stop-color="#5dff05"/><stop offset=".83" stop-color="#88ff00"/><stop offset=".956" stop-color="#f0ff00"/><stop offset=".97" stop-color="#feff00"/><stop offset="1" stop-color="#ffe700"/></linearGradient><linearGradient id="g106" gradientUnits="userSpaceOnUse" x1="1553.5" y1="0" x2="2093.5" y2="0"><stop offset="0" stop-color="#00ff5b"/><stop offset=".467" stop-color="#00ff31"/><stop offset=".615" stop-color="#02ff1e"/><stop offset=".763" stop-color="#61ff08"/><stop offset=".83" stop-color="#92ff00"/><stop offset=".948" stop-color="#f7ff00"/><stop offset=".956" stop-color="#feff00"/><stop offset="1" stop-color="#ffdb00"/></linearGradient><linearGradient id="g107" gradientUnits="userSpaceOnUse" x1="1553.5" y1="0" x2="2101.5" y2="0"><stop offset="0" stop-color="#00ff5e"/><stop offset=".453" stop-color="#00ff35"/><stop offset=".599" stop-color="#00ff22"/><stop offset=".737" stop-color="#5aff0d"/><stop offset=".825" stop-color="#9dff00"/><stop offset=".934" stop-color="#feff00"/><stop offset="1" stop-color="#ffcb00"/></linearGradient><linearGradient id="g108" gradientUnits="userSpaceOnUse" x1="1553.5" y1="0" x2="2109.5" y2="0"><stop offset="0" stop-color="#00ff61"/><stop offset=".446" stop-color="#00ff37"/><stop offset=".59" stop-color="#01ff25"/><stop offset=".734" stop-color="#63ff0f"/><stop offset=".827" stop-color="#aeff00"/><stop offset=".914" stop-color="#feff00"/><stop offset=".986" stop-color="#ffc500"/><stop offset="1" stop-color="#ffbc00"/></linearGradient><linearGradient id="g109" gradientUnits="userSpaceOnUse" x1="1553.5" y1="0" x2="2113.5" y2="0"><stop offset="0" stop-color="#00ff64"/><stop offset=".443" stop-color="#00ff3a"/><stop offset=".579" stop-color="#00ff29"/><stop offset=".7" stop-color="#51ff17"/><stop offset=".821" stop-color="#b3ff00"/><stop offset=".9" stop-color="#feff00"/><stop offset=".971" stop-color="#ffc500"/><stop offset="1" stop-color="#ffb300"/></linearGradient><linearGradient id="g110" gradientUnits="userSpaceOnUse" x1="1553.5" y1="0" x2="2121.5" y2="0"><stop offset="0" stop-color="#00ff66"/><stop offset=".437" stop-color="#00ff3e"/><stop offset=".57" stop-color="#01ff2c"/><stop offset=".704" stop-color="#60ff17"/><stop offset=".824" stop-color="#c6ff01"/><stop offset=".88" stop-color="#feff00"/><stop offset=".951" stop-color="#ffc400"/><stop offset="1" stop-color="#ffa600"/></linearGradient><linearGradient id="g111" gradientUnits="userSpaceOnUse" x1="1553.5" y1="0" x2="2129.5" y2="0"><stop offset="0" stop-color="#00ff69"/><stop offset=".431" stop-color="#00ff41"/><stop offset=".556" stop-color="#00ff30"/><stop offset=".667" stop-color="#4eff1f"/><stop offset=".785" stop-color="#b2ff09"/><stop offset=".847" stop-color="#efff00"/><stop offset=".861" stop-color="#feff00"/><stop offset=".931" stop-color="#ffc400"/><stop offset="1" stop-color="#ff9a00"/></linearGradient><linearGradient id="g112" gradientUnits="userSpaceOnUse" x1="1557.5" y1="0" x2="2133.5" y2="0"><stop offset="0" stop-color="#00ff6c"/><stop offset=".424" stop-color="#00ff44"/><stop offset=".549" stop-color="#01ff34"/><stop offset=".681" stop-color="#62ff1f"/><stop offset=".792" stop-color="#c5ff0a"/><stop offset=".847" stop-color="#feff00"/><stop offset=".917" stop-color="#ffc300"/><stop offset="1" stop-color="#ff9300"/></linearGradient><linearGradient id="g113" gradientUnits="userSpaceOnUse" x1="1557.5" y1="0" x2="2141.5" y2="0"><stop offset="0" stop-color="#00ff6f"/><stop offset=".418" stop-color="#00ff47"/><stop offset=".534" stop-color="#00ff38"/><stop offset=".63" stop-color="#44ff29"/><stop offset=".747" stop-color="#a9ff14"/><stop offset=".829" stop-color="#fdff03"/><stop offset=".897" stop-color="#ffc300"/><stop offset=".973" stop-color="#ff9500"/><stop offset="1" stop-color="#ff8800"/></linearGradient><linearGradient id="g114" gradientUnits="userSpaceOnUse" x1="1557.5" y1="0" x2="2149.5" y2="0"><stop offset="0" stop-color="#00ff72"/><stop offset=".412" stop-color="#00ff4b"/><stop offset=".527" stop-color="#00ff3b"/><stop offset=".649" stop-color="#5eff28"/><stop offset=".757" stop-color="#c3ff13"/><stop offset=".811" stop-color="#fdff08"/><stop offset=".858" stop-color="#ffd200"/><stop offset=".926" stop-color="#ffa300"/><stop offset="1" stop-color="#ff7e00"/></linearGradient><linearGradient id="g115" gradientUnits="userSpaceOnUse" x1="1557.5" y1="0" x2="2153.5" y2="0"><stop offset="0" stop-color="#00ff75"/><stop offset=".409" stop-color="#00ff4e"/><stop offset=".523" stop-color="#02ff3f"/><stop offset=".644" stop-color="#62ff2c"/><stop offset=".752" stop-color="#caff17"/><stop offset=".799" stop-color="#fdff0d"/><stop offset=".859" stop-color="#ffc700"/><stop offset=".933" stop-color="#ff9700"/><stop offset="1" stop-color="#ff7800"/></linearGradient><linearGradient id="g116" gradientUnits="userSpaceOnUse" x1="1557.5" y1="0" x2="2161.5" y2="0"><stop offset="0" stop-color="#00ff78"/><stop offset=".404" stop-color="#00ff52"/><stop offset=".51" stop-color="#00ff44"/><stop offset=".629" stop-color="#61ff31"/><stop offset=".735" stop-color="#c9ff1c"/><stop offset=".781" stop-color="#fdff12"/><stop offset=".841" stop-color="#ffc603"/><stop offset=".914" stop-color="#ff9600"/><stop offset="1" stop-color="#ff6f00"/></linearGradient><linearGradient id="g117" gradientUnits="userSpaceOnUse" x1="1557.5" y1="0" x2="2169.5" y2="0"><stop offset="0" stop-color="#00ff7c"/><stop offset=".399" stop-color="#00ff56"/><stop offset=".503" stop-color="#02ff48"/><stop offset=".621" stop-color="#65ff35"/><stop offset=".719" stop-color="#c8ff22"/><stop offset=".765" stop-color="#fdff17"/><stop offset=".824" stop-color="#ffc507"/><stop offset=".869" stop-color="#ffa400"/><stop offset=".954" stop-color="#ff7900"/><stop offset="1" stop-color="#ff6700"/></linearGradient><linearGradient id="g118" gradientUnits="userSpaceOnUse" x1="1561.5" y1="0" x2="2173.5" y2="0"><stop offset="0" stop-color="#00ff7f"/><stop offset=".399" stop-color="#00ff59"/><stop offset=".49" stop-color="#00ff4c"/><stop offset=".595" stop-color="#57ff3c"/><stop offset=".693" stop-color="#b9ff2a"/><stop offset=".752" stop-color="#fdff1d"/><stop offset=".81" stop-color="#ffc50b"/><stop offset=".876" stop-color="#ff9800"/><stop offset=".967" stop-color="#ff6d00"/><stop offset="1" stop-color="#ff6200"/></linearGradient><linearGradient id="g119" gradientUnits="userSpaceOnUse" x1="1561.5" y1="0" x2="2181.5" y2="0"><stop offset="0" stop-color="#00ff82"/><stop offset=".394" stop-color="#00ff5d"/><stop offset=".484" stop-color="#02ff50"/><stop offset=".594" stop-color="#61ff3f"/><stop offset=".69" stop-color="#c7ff2d"/><stop offset=".735" stop-color="#fdff23"/><stop offset=".794" stop-color="#ffc410"/><stop offset=".858" stop-color="#ff9701"/><stop offset=".948" stop-color="#ff6c00"/><stop offset="1" stop-color="#ff5b00"/></linearGradient><linearGradient id="g120" gradientUnits="userSpaceOnUse" x1="1561.5" y1="0" x2="2185.5" y2="0"><stop offset="0" stop-color="#00ff86"/><stop offset=".391" stop-color="#00ff61"/><stop offset=".474" stop-color="#00ff56"/><stop offset=".571" stop-color="#53ff47"/><stop offset=".667" stop-color="#b7ff35"/><stop offset=".724" stop-color="#fdff28"/><stop offset=".782" stop-color="#ffc414"/><stop offset=".846" stop-color="#ff9605"/><stop offset=".897" stop-color="#ff7b00"/><stop offset="1" stop-color="#ff5600"/></linearGradient><linearGradient id="g121" gradientUnits="userSpaceOnUse" x1="1561.5" y1="0" x2="2193.5" y2="0"><stop offset="0" stop-color="#00ff89"/><stop offset=".386" stop-color="#00ff65"/><stop offset=".468" stop-color="#01ff5a"/><stop offset=".576" stop-color="#63ff49"/><stop offset=".665" stop-color="#c5ff38"/><stop offset=".709" stop-color="#fdff2e"/><stop offset=".766" stop-color="#ffc319"/><stop offset=".829" stop-color="#ff9509"/><stop offset=".892" stop-color="#ff7400"/><stop offset="1" stop-color="#ff4f00"/></linearGradient><linearGradient id="g122" gradientUnits="userSpaceOnUse" x1="1565.5" y1="0" x2="2201.5" y2="0"><stop offset="0" stop-color="#00ff8c"/><stop offset=".377" stop-color="#00ff69"/><stop offset=".453" stop-color="#00ff5f"/><stop offset=".541" stop-color="#4fff52"/><stop offset=".635" stop-color="#b5ff41"/><stop offset=".692" stop-color="#fdff35"/><stop offset=".748" stop-color="#ffc21e"/><stop offset=".811" stop-color="#ff940c"/><stop offset=".887" stop-color="#ff6e00"/><stop offset="1" stop-color="#ff4900"/></linearGradient><linearGradient id="g123" gradientUnits="userSpaceOnUse" x1="1565.5" y1="0" x2="2205.5" y2="0"><stop offset="0" stop-color="#00ff90"/><stop offset=".375" stop-color="#00ff6e"/><stop offset=".45" stop-color="#01ff64"/><stop offset=".55" stop-color="#60ff54"/><stop offset=".637" stop-color="#c3ff44"/><stop offset=".681" stop-color="#fdff3b"/><stop offset=".738" stop-color="#ffc223"/><stop offset=".8" stop-color="#ff9310"/><stop offset=".887" stop-color="#ff6800"/><stop offset="1" stop-color="#ff4400"/></linearGradient><linearGradient id="g124" gradientUnits="userSpaceOnUse" x1="1565.5" y1="0" x2="2213.5" y2="0"><stop offset="0" stop-color="#00ff94"/><stop offset=".377" stop-color="#00ff71"/><stop offset=".438" stop-color="#00ff69"/><stop offset=".512" stop-color="#44ff5e"/><stop offset=".599" stop-color="#a4ff4f"/><stop offset=".667" stop-color="#fdff42"/><stop offset=".722" stop-color="#ffc128"/><stop offset=".784" stop-color="#ff9214"/><stop offset=".87" stop-color="#ff6702"/><stop offset=".994" stop-color="#ff4000"/><stop offset="1" stop-color="#ff3f00"/></linearGradient><linearGradient id="g125" gradientUnits="userSpaceOnUse" x1="1565.5" y1="0" x2="2221.5" y2="0"><stop offset="0" stop-color="#00ff98"/><stop offset=".372" stop-color="#00ff76"/><stop offset=".433" stop-color="#00ff6e"/><stop offset=".53" stop-color="#62ff60"/><stop offset=".616" stop-color="#caff50"/><stop offset=".652" stop-color="#fdff48"/><stop offset=".701" stop-color="#ffc62f"/><stop offset=".756" stop-color="#ff991c"/><stop offset=".835" stop-color="#ff6d09"/><stop offset=".909" stop-color="#ff5200"/><stop offset="1" stop-color="#ff3900"/></linearGradient><linearGradient id="g126" gradientUnits="userSpaceOnUse" x1="1565.5" y1="0" x2="2225.5" y2="0"><stop offset="0" stop-color="#00ff9c"/><stop offset=".37" stop-color="#00ff7b"/><stop offset=".424" stop-color="#00ff74"/><stop offset=".467" stop-color="#26ff6e"/><stop offset=".558" stop-color="#8bff60"/><stop offset=".636" stop-color="#f4ff51"/><stop offset=".642" stop-color="#fdff4f"/><stop offset=".691" stop-color="#ffc535"/><stop offset=".745" stop-color="#ff9820"/><stop offset=".824" stop-color="#ff6c0c"/><stop offset=".909" stop-color="#ff4d00"/><stop offset="1" stop-color="#ff3600"/></linearGradient><linearGradient id="g127" gradientUnits="userSpaceOnUse" x1="1569.5" y1="0" x2="2233.5" y2="0"><stop offset="0" stop-color="#00ffa0"/><stop offset=".367" stop-color="#00ff80"/><stop offset=".416" stop-color="#00ff7a"/><stop offset=".506" stop-color="#5eff6c"/><stop offset=".584" stop-color="#c0ff5f"/><stop offset=".627" stop-color="#fdff56"/><stop offset=".675" stop-color="#ffc53a"/><stop offset=".729" stop-color="#ff9724"/><stop offset=".807" stop-color="#ff6b0f"/><stop offset=".91" stop-color="#ff4600"/><stop offset="1" stop-color="#ff3100"/></linearGradient><linearGradient id="g128" gradientUnits="userSpaceOnUse" x1="1569.5" y1="0" x2="2241.5" y2="0"><stop offset="0" stop-color="#00ffa4"/><stop offset=".363" stop-color="#00ff85"/><stop offset=".411" stop-color="#03ff7f"/><stop offset=".5" stop-color="#63ff72"/><stop offset=".577" stop-color="#c7ff65"/><stop offset=".613" stop-color="#fdff5e"/><stop offset=".661" stop-color="#ffc440"/><stop offset=".714" stop-color="#ff9629"/><stop offset=".792" stop-color="#ff6913"/><stop offset=".899" stop-color="#ff4300"/><stop offset="1" stop-color="#ff2c00"/></linearGradient><linearGradient id="g129" gradientUnits="userSpaceOnUse" x1="1569.5" y1="0" x2="2245.5" y2="0"><stop offset="0" stop-color="#00ffa9"/><stop offset=".367" stop-color="#00ff8a"/><stop offset=".402" stop-color="#00ff85"/><stop offset=".485" stop-color="#59ff7a"/><stop offset=".562" stop-color="#beff6d"/><stop offset=".604" stop-color="#fdff65"/><stop offset=".651" stop-color="#ffc346"/><stop offset=".704" stop-color="#ff942d"/><stop offset=".775" stop-color="#ff6b18"/><stop offset=".882" stop-color="#ff4403"/><stop offset=".988" stop-color="#ff2b00"/><stop offset="1" stop-color="#ff2900"/></linearGradient><linearGradient id="g130" gradientUnits="userSpaceOnUse" x1="1569.5" y1="0" x2="2253.5" y2="0"><stop offset="0" stop-color="#00ffad"/><stop offset=".363" stop-color="#00ff8f"/><stop offset=".398" stop-color="#02ff8b"/><stop offset=".485" stop-color="#66ff7f"/><stop offset=".561" stop-color="#ceff73"/><stop offset=".591" stop-color="#fcff6d"/><stop offset=".637" stop-color="#ffc24c"/><stop offset=".69" stop-color="#ff9332"/><stop offset=".76" stop-color="#ff6a1b"/><stop offset=".865" stop-color="#ff4306"/><stop offset=".936" stop-color="#ff3100"/><stop offset="1" stop-color="#ff2400"/></linearGradient><linearGradient id="g131" gradientUnits="userSpaceOnUse" x1="1573.5" y1="0" x2="2261.5" y2="0"><stop offset="0" stop-color="#00ffb2"/><stop offset=".366" stop-color="#00ff94"/><stop offset=".384" stop-color="#00ff92"/><stop offset=".459" stop-color="#55ff88"/><stop offset=".535" stop-color="#bcff7d"/><stop offset=".576" stop-color="#fcff75"/><stop offset=".622" stop-color="#ffc252"/><stop offset=".674" stop-color="#ff9237"/><stop offset=".744" stop-color="#ff681f"/><stop offset=".849" stop-color="#ff4109"/><stop offset=".93" stop-color="#ff2d00"/><stop offset="1" stop-color="#ff2000"/></linearGradient><linearGradient id="g132" gradientUnits="userSpaceOnUse" x1="1573.5" y1="0" x2="2265.5" y2="0"><stop offset="0" stop-color="#00ffb7"/><stop offset=".364" stop-color="#00ff9a"/><stop offset=".382" stop-color="#02ff98"/><stop offset=".462" stop-color="#61ff8e"/><stop offset=".532" stop-color="#c4ff84"/><stop offset=".566" stop-color="#fcff7e"/><stop offset=".613" stop-color="#ffc158"/><stop offset=".665" stop-color="#ff913c"/><stop offset=".734" stop-color="#ff6723"/><stop offset=".832" stop-color="#ff420c"/><stop offset=".931" stop-color="#ff2a00"/><stop offset="1" stop-color="#ff1d00"/></linearGradient><linearGradient id="g133" gradientUnits="userSpaceOnUse" x1="1573.5" y1="0" x2="2273.5" y2="0"><stop offset="0" stop-color="#00ffbc"/><stop offset=".366" stop-color="#00ffa0"/><stop offset=".377" stop-color="#05ff9f"/><stop offset=".457" stop-color="#66ff95"/><stop offset=".526" stop-color="#ccff8b"/><stop offset=".554" stop-color="#fcff86"/><stop offset=".6" stop-color="#ffc05f"/><stop offset=".651" stop-color="#ff9041"/><stop offset=".72" stop-color="#ff6626"/><stop offset=".817" stop-color="#ff400f"/><stop offset=".931" stop-color="#ff2500"/><stop offset="1" stop-color="#ff1a00"/></linearGradient><linearGradient id="g134" gradientUnits="userSpaceOnUse" x1="1577.5" y1="0" x2="2281.5" y2="0"><stop offset="0" stop-color="#00ffc0"/><stop offset=".364" stop-color="#01ffa6"/><stop offset=".443" stop-color="#64ff9d"/><stop offset=".511" stop-color="#cbff94"/><stop offset=".54" stop-color="#fcff8f"/><stop offset=".585" stop-color="#ffbf65"/><stop offset=".636" stop-color="#ff8f46"/><stop offset=".705" stop-color="#ff642a"/><stop offset=".801" stop-color="#ff3f12"/><stop offset=".932" stop-color="#ff2100"/><stop offset="1" stop-color="#ff1600"/></linearGradient><linearGradient id="g135" gradientUnits="userSpaceOnUse" x1="1577.5" y1="0" x2="2285.5" y2="0"><stop offset="0" stop-color="#00ffc6"/><stop offset=".356" stop-color="#00ffae"/><stop offset=".407" stop-color="#3cffa9"/><stop offset=".475" stop-color="#9cffa1"/><stop offset=".531" stop-color="#fcff99"/><stop offset=".565" stop-color="#ffcc76"/><stop offset=".61" stop-color="#ff9b55"/><stop offset=".672" stop-color="#ff6f36"/><stop offset=".757" stop-color="#ff491c"/><stop offset=".887" stop-color="#ff2605"/><stop offset=".966" stop-color="#ff1800"/><stop offset="1" stop-color="#ff1300"/></linearGradient><linearGradient id="g136" gradientUnits="userSpaceOnUse" x1="1577.5" y1="0" x2="2293.5" y2="0"><stop offset="0" stop-color="#00ffcb"/><stop offset=".352" stop-color="#01ffb5"/><stop offset=".425" stop-color="#5fffae"/><stop offset=".486" stop-color="#c0ffa7"/><stop offset=".52" stop-color="#fcffa2"/><stop offset=".547" stop-color="#ffd383"/><stop offset=".587" stop-color="#ffa562"/><stop offset=".642" stop-color="#ff7842"/><stop offset=".721" stop-color="#ff5026"/><stop offset=".838" stop-color="#ff2c0c"/><stop offset=".944" stop-color="#ff1800"/><stop offset="1" stop-color="#ff1000"/></linearGradient><linearGradient id="g137" gradientUnits="userSpaceOnUse" x1="1577.5" y1="0" x2="2301.5" y2="0"><stop offset="0" stop-color="#00ffd1"/><stop offset=".343" stop-color="#00ffbd"/><stop offset=".365" stop-color="#19ffbb"/><stop offset=".431" stop-color="#76ffb5"/><stop offset=".492" stop-color="#dcffae"/><stop offset=".508" stop-color="#fcffac"/><stop offset=".536" stop-color="#ffd38b"/><stop offset=".575" stop-color="#ffa468"/><stop offset=".63" stop-color="#ff7747"/><stop offset=".707" stop-color="#ff4f29"/><stop offset=".823" stop-color="#ff2b0f"/><stop offset=".945" stop-color="#ff1400"/><stop offset="1" stop-color="#ff0d00"/></linearGradient><linearGradient id="g138" gradientUnits="userSpaceOnUse" x1="1581.5" y1="0" x2="2305.5" y2="0"><stop offset="0" stop-color="#00ffd6"/><stop offset=".337" stop-color="#00ffc5"/><stop offset=".409" stop-color="#63ffbf"/><stop offset=".47" stop-color="#c7ffb9"/><stop offset=".497" stop-color="#fcffb6"/><stop offset=".519" stop-color="#ffdb9a"/><stop offset=".558" stop-color="#ffa873"/><stop offset=".608" stop-color="#ff7d51"/><stop offset=".68" stop-color="#ff5432"/><stop offset=".785" stop-color="#ff3016"/><stop offset=".939" stop-color="#ff1200"/><stop offset="1" stop-color="#ff0a00"/></linearGradient><linearGradient id="g139" gradientUnits="userSpaceOnUse" x1="1581.5" y1="0" x2="2313.5" y2="0"><stop offset="0" stop-color="#00ffdc"/><stop offset=".328" stop-color="#00ffce"/><stop offset=".344" stop-color="#12ffcd"/><stop offset=".41" stop-color="#71ffc8"/><stop offset=".464" stop-color="#d1ffc3"/><stop offset=".486" stop-color="#fcffc1"/><stop offset=".508" stop-color="#ffdaa3"/><stop offset=".546" stop-color="#ffa77a"/><stop offset=".596" stop-color="#ff7b57"/><stop offset=".667" stop-color="#ff5336"/><stop offset=".77" stop-color="#ff2f19"/><stop offset=".934" stop-color="#ff0f00"/><stop offset="1" stop-color="#ff0700"/></linearGradient><linearGradient id="g140" gradientUnits="userSpaceOnUse" x1="1581.5" y1="0" x2="2321.5" y2="0"><stop offset="0" stop-color="#00ffe2"/><stop offset=".324" stop-color="#00ffd6"/><stop offset=".389" stop-color="#5dffd3"/><stop offset=".449" stop-color="#c5ffce"/><stop offset=".476" stop-color="#fcffcc"/><stop offset=".492" stop-color="#ffe3b4"/><stop offset=".524" stop-color="#ffb38c"/><stop offset=".568" stop-color="#ff8767"/><stop offset=".627" stop-color="#ff5f45"/><stop offset=".714" stop-color="#ff3a27"/><stop offset=".849" stop-color="#ff190b"/><stop offset=".957" stop-color="#ff0900"/><stop offset="1" stop-color="#ff0400"/></linearGradient><linearGradient id="g141" gradientUnits="userSpaceOnUse" x1="1585.5" y1="0" x2="2325.5" y2="0"><stop offset="0" stop-color="#00ffe8"/><stop offset=".314" stop-color="#00ffe0"/><stop offset=".324" stop-color="#0affdf"/><stop offset=".389" stop-color="#6cffdc"/><stop offset=".443" stop-color="#cfffd9"/><stop offset=".465" stop-color="#fbffd8"/><stop offset=".481" stop-color="#ffe2be"/><stop offset=".514" stop-color="#ffb294"/><stop offset=".557" stop-color="#ff856d"/><stop offset=".616" stop-color="#ff5d4a"/><stop offset=".703" stop-color="#ff392a"/><stop offset=".838" stop-color="#ff180d"/><stop offset=".962" stop-color="#ff0600"/><stop offset="1" stop-color="#ff0200"/></linearGradient><linearGradient id="g142" gradientUnits="userSpaceOnUse" x1="1585.5" y1="0" x2="2333.5" y2="0"><stop offset="0" stop-color="#00ffef"/><stop offset=".31" stop-color="#00ffe9"/><stop offset=".364" stop-color="#4fffe7"/><stop offset=".417" stop-color="#aeffe5"/><stop offset=".455" stop-color="#fbffe4"/><stop offset=".471" stop-color="#ffe2c9"/><stop offset=".503" stop-color="#ffb09c"/><stop offset=".545" stop-color="#ff8473"/><stop offset=".604" stop-color="#ff5b4e"/><stop offset=".69" stop-color="#ff372d"/><stop offset=".824" stop-color="#ff1710"/><stop offset=".957" stop-color="#ff0400"/><stop offset="1" stop-color="#ff0000"/></linearGradient><linearGradient id="g143" gradientUnits="userSpaceOnUse" x1="1585.5" y1="0" x2="2341.5" y2="0"><stop offset="0" stop-color="#00fff6"/><stop offset=".307" stop-color="#02fff3"/><stop offset=".365" stop-color="#5efff2"/><stop offset=".418" stop-color="#c2fff1"/><stop offset=".444" stop-color="#fbfff0"/><stop offset=".455" stop-color="#ffecde"/><stop offset=".481" stop-color="#ffbeb2"/><stop offset=".519" stop-color="#ff9187"/><stop offset=".571" stop-color="#ff665f"/><stop offset=".646" stop-color="#ff413b"/><stop offset=".757" stop-color="#ff201c"/><stop offset=".937" stop-color="#ff0300"/><stop offset="1" stop-color="#ff0000"/></linearGradient><linearGradient id="g144" gradientUnits="userSpaceOnUse" x1="1589.5" y1="0" x2="2345.5" y2="0"><stop offset="0" stop-color="#00fffd"/><stop offset=".296" stop-color="#00fffd"/><stop offset=".344" stop-color="#49fffd"/><stop offset=".397" stop-color="#abfffd"/><stop offset=".434" stop-color="#fbfffd"/><stop offset=".444" stop-color="#ffebe9"/><stop offset=".471" stop-color="#ffbdbb"/><stop offset=".508" stop-color="#ff908e"/><stop offset=".561" stop-color="#ff6564"/><stop offset=".635" stop-color="#ff403f"/><stop offset=".746" stop-color="#ff1f1f"/><stop offset=".926" stop-color="#ff0202"/><stop offset="1" stop-color="#ff0000"/></linearGradient><linearGradient id="g145" gradientUnits="userSpaceOnUse" x1="1589.5" y1="0" x2="2353.5" y2="0"><stop offset="0" stop-color="#00faff"/><stop offset=".293" stop-color="#02f7ff"/><stop offset=".351" stop-color="#5ef6ff"/><stop offset=".403" stop-color="#c2f5ff"/><stop offset=".429" stop-color="#fcf4ff"/><stop offset=".461" stop-color="#ffbcc5"/><stop offset=".497" stop-color="#ff8e96"/><stop offset=".545" stop-color="#ff676d"/><stop offset=".613" stop-color="#ff4247"/><stop offset=".717" stop-color="#ff2125"/><stop offset=".885" stop-color="#ff0407"/><stop offset=".974" stop-color="#ff0000"/><stop offset="1" stop-color="#ff0000"/></linearGradient><linearGradient id="g146" gradientUnits="userSpaceOnUse" x1="1589.5" y1="0" x2="2361.5" y2="0"><stop offset="0" stop-color="#00f3ff"/><stop offset=".285" stop-color="#00edff"/><stop offset=".326" stop-color="#3debff"/><stop offset=".383" stop-color="#a3e9ff"/><stop offset=".425" stop-color="#fbe7ff"/><stop offset=".44" stop-color="#ffcce2"/><stop offset=".472" stop-color="#ff9eb0"/><stop offset=".513" stop-color="#ff7483"/><stop offset=".57" stop-color="#ff4f5b"/><stop offset=".653" stop-color="#ff2e37"/><stop offset=".782" stop-color="#ff1017"/><stop offset=".912" stop-color="#ff0004"/><stop offset="1" stop-color="#ff0000"/></linearGradient><linearGradient id="g147" gradientUnits="userSpaceOnUse" x1="1593.5" y1="0" x2="2365.5" y2="0"><stop offset="0" stop-color="#00ecff"/><stop offset=".28" stop-color="#01e3ff"/><stop offset=".342" stop-color="#62e0ff"/><stop offset=".394" stop-color="#c3ddff"/><stop offset=".42" stop-color="#fbdbff"/><stop offset=".43" stop-color="#ffcbed"/><stop offset=".461" stop-color="#ff9db9"/><stop offset=".503" stop-color="#ff738a"/><stop offset=".56" stop-color="#ff4d60"/><stop offset=".642" stop-color="#ff2c3b"/><stop offset=".767" stop-color="#ff0f1a"/><stop offset=".891" stop-color="#ff0007"/><stop offset=".984" stop-color="#ff0000"/><stop offset="1" stop-color="#ff0000"/></linearGradient><linearGradient id="g148" gradientUnits="userSpaceOnUse" x1="1593.5" y1="0" x2="2373.5" y2="0"><stop offset="0" stop-color="#00e5ff"/><stop offset=".272" stop-color="#00daff"/><stop offset=".297" stop-color="#22d8ff"/><stop offset=".359" stop-color="#88d4ff"/><stop offset=".41" stop-color="#eed0ff"/><stop offset=".415" stop-color="#fad0ff"/><stop offset=".421" stop-color="#ffcaf9"/><stop offset=".446" stop-color="#ffa2ca"/><stop offset=".482" stop-color="#ff7a9b"/><stop offset=".533" stop-color="#ff546f"/><stop offset=".605" stop-color="#ff3348"/><stop offset=".713" stop-color="#ff1626"/><stop offset=".862" stop-color="#ff000b"/><stop offset=".979" stop-color="#ff0000"/><stop offset="1" stop-color="#ff0000"/></linearGradient><linearGradient id="g149" gradientUnits="userSpaceOnUse" x1="1593.5" y1="0" x2="2377.5" y2="0"><stop offset="0" stop-color="#00dfff"/><stop offset=".27" stop-color="#00d1ff"/><stop offset=".332" stop-color="#5dccff"/><stop offset=".388" stop-color="#c3c7ff"/><stop offset=".413" stop-color="#f9c4ff"/><stop offset=".418" stop-color="#ffc0fa"/><stop offset=".444" stop-color="#ff9acb"/><stop offset=".48" stop-color="#ff749d"/><stop offset=".531" stop-color="#ff4f71"/><stop offset=".602" stop-color="#ff304a"/><stop offset=".709" stop-color="#ff1327"/><stop offset=".847" stop-color="#ff000d"/><stop offset=".985" stop-color="#ff0000"/><stop offset="1" stop-color="#ff0000"/></linearGradient><linearGradient id="g150" gradientUnits="userSpaceOnUse" x1="1597.5" y1="0" x2="2385.5" y2="0"><stop offset="0" stop-color="#00d8ff"/><stop offset=".259" stop-color="#00c9ff"/><stop offset=".274" stop-color="#12c7ff"/><stop offset=".335" stop-color="#70c2ff"/><stop offset=".391" stop-color="#d8bcff"/><stop offset=".406" stop-color="#f8baff"/><stop offset=".411" stop-color="#ffb6fb"/><stop offset=".442" stop-color="#ff8bc5"/><stop offset=".482" stop-color="#ff6594"/><stop offset=".538" stop-color="#ff4368"/><stop offset=".614" stop-color="#ff2643"/><stop offset=".731" stop-color="#ff0b21"/><stop offset=".827" stop-color="#ff0010"/><stop offset=".985" stop-color="#ff0000"/><stop offset="1" stop-color="#ff0000"/></linearGradient><linearGradient id="g151" gradientUnits="userSpaceOnUse" x1="1597.5" y1="0" x2="2393.5" y2="0"><stop offset="0" stop-color="#00d2ff"/><stop offset=".256" stop-color="#00c0ff"/><stop offset=".322" stop-color="#61baff"/><stop offset=".377" stop-color="#c4b3ff"/><stop offset=".402" stop-color="#f8afff"/><stop offset=".407" stop-color="#ffacfc"/><stop offset=".437" stop-color="#ff84c6"/><stop offset=".477" stop-color="#ff5f96"/><stop offset=".533" stop-color="#ff3f6a"/><stop offset=".613" stop-color="#ff2143"/><stop offset=".734" stop-color="#ff0721"/><stop offset=".809" stop-color="#ff0013"/><stop offset=".98" stop-color="#ff0000"/><stop offset="1" stop-color="#ff0000"/></linearGradient><linearGradient id="g152" gradientUnits="userSpaceOnUse" x1="1597.5" y1="0" x2="2397.5" y2="0"><stop offset="0" stop-color="#00cbff"/><stop offset=".25" stop-color="#00b9ff"/><stop offset=".26" stop-color="#0ab7ff"/><stop offset=".325" stop-color="#6bb0ff"/><stop offset=".38" stop-color="#cea8ff"/><stop offset=".405" stop-color="#ffa3fd"/><stop offset=".435" stop-color="#ff7dc8"/><stop offset=".475" stop-color="#ff5a97"/><stop offset=".53" stop-color="#ff3a6c"/><stop offset=".61" stop-color="#ff1e44"/><stop offset=".73" stop-color="#ff0522"/><stop offset=".8" stop-color="#ff0015"/><stop offset=".985" stop-color="#ff0000"/><stop offset="1" stop-color="#ff0000"/></linearGradient><linearGradient id="g153" gradientUnits="userSpaceOnUse" x1="1601.5" y1="0" x2="2405.5" y2="0"><stop offset="0" stop-color="#00c5ff"/><stop offset=".244" stop-color="#00b1ff"/><stop offset=".303" stop-color="#55a9ff"/><stop offset=".363" stop-color="#bba1ff"/><stop offset=".398" stop-color="#ff9afd"/><stop offset=".428" stop-color="#ff76c9"/><stop offset=".468" stop-color="#ff5499"/><stop offset=".522" stop-color="#ff366d"/><stop offset=".602" stop-color="#ff1b46"/><stop offset=".721" stop-color="#ff0323"/><stop offset=".9" stop-color="#ff0007"/><stop offset="1" stop-color="#ff0000"/></linearGradient><linearGradient id="g154" gradientUnits="userSpaceOnUse" x1="1601.5" y1="0" x2="2413.5" y2="0"><stop offset="0" stop-color="#00bfff"/><stop offset=".241" stop-color="#02a9ff"/><stop offset=".31" stop-color="#66a0ff"/><stop offset=".369" stop-color="#ce96ff"/><stop offset=".394" stop-color="#ff91fe"/><stop offset=".424" stop-color="#ff6fca"/><stop offset=".463" stop-color="#ff4f9b"/><stop offset=".517" stop-color="#ff326f"/><stop offset=".596" stop-color="#ff1847"/><stop offset=".714" stop-color="#ff0125"/><stop offset=".901" stop-color="#ff0007"/><stop offset="1" stop-color="#ff0000"/></linearGradient><linearGradient id="g155" gradientUnits="userSpaceOnUse" x1="1601.5" y1="0" x2="2413.5" y2="0"><stop offset="0" stop-color="#00b9ff"/><stop offset=".236" stop-color="#00a2ff"/><stop offset=".296" stop-color="#519aff"/><stop offset=".355" stop-color="#b390ff"/><stop offset=".394" stop-color="#ff88ff"/><stop offset=".424" stop-color="#ff68cc"/><stop offset=".463" stop-color="#ff4a9c"/><stop offset=".517" stop-color="#ff2e71"/><stop offset=".596" stop-color="#ff1549"/><stop offset=".714" stop-color="#ff0026"/><stop offset=".901" stop-color="#ff0008"/><stop offset="1" stop-color="#ff0000"/></linearGradient><linearGradient id="g156" gradientUnits="userSpaceOnUse" x1="1605.5" y1="0" x2="2401.5" y2="0"><stop offset="0" stop-color="#00b3ff"/><stop offset=".236" stop-color="#029bff"/><stop offset=".307" stop-color="#6290ff"/><stop offset=".367" stop-color="#c586ff"/><stop offset=".397" stop-color="#fe80ff"/><stop offset=".432" stop-color="#ff5dc6"/><stop offset=".472" stop-color="#ff4299"/><stop offset=".528" stop-color="#ff286f"/><stop offset=".608" stop-color="#ff1148"/><stop offset=".714" stop-color="#ff0029"/><stop offset=".894" stop-color="#ff000b"/><stop offset="1" stop-color="#ff0000"/></linearGradient><linearGradient id="g157" gradientUnits="userSpaceOnUse" x1="1605.5" y1="0" x2="2385.5" y2="0"><stop offset="0" stop-color="#00adff"/><stop offset=".236" stop-color="#0094ff"/><stop offset=".292" stop-color="#468cff"/><stop offset=".359" stop-color="#ab81ff"/><stop offset=".405" stop-color="#fd77ff"/><stop offset=".441" stop-color="#ff57c7"/><stop offset=".482" stop-color="#ff3d9a"/><stop offset=".544" stop-color="#ff236e"/><stop offset=".631" stop-color="#ff0c46"/><stop offset=".713" stop-color="#ff002e"/><stop offset=".887" stop-color="#ff0010"/><stop offset="1" stop-color="#ff0003"/></linearGradient><linearGradient id="g158" gradientUnits="userSpaceOnUse" x1="1609.5" y1="0" x2="2373.5" y2="0"><stop offset="0" stop-color="#00a7ff"/><stop offset=".236" stop-color="#018eff"/><stop offset=".314" stop-color="#6582ff"/><stop offset=".377" stop-color="#c676ff"/><stop offset=".408" stop-color="#fd6fff"/><stop offset=".45" stop-color="#ff4dc2"/><stop offset=".497" stop-color="#ff3393"/><stop offset=".56" stop-color="#ff1c69"/><stop offset=".654" stop-color="#ff0642"/><stop offset=".717" stop-color="#ff0031"/><stop offset=".895" stop-color="#ff0011"/><stop offset="1" stop-color="#ff0006"/></linearGradient><linearGradient id="g159" gradientUnits="userSpaceOnUse" x1="1609.5" y1="0" x2="2357.5" y2="0"><stop offset="0" stop-color="#00a2ff"/><stop offset=".235" stop-color="#0088ff"/><stop offset=".289" stop-color="#3d80ff"/><stop offset=".358" stop-color="#9c74ff"/><stop offset=".417" stop-color="#fc67ff"/><stop offset=".449" stop-color="#ff4ed1"/><stop offset=".492" stop-color="#ff35a2"/><stop offset=".551" stop-color="#ff1f77"/><stop offset=".636" stop-color="#ff094f"/><stop offset=".706" stop-color="#ff0039"/><stop offset=".872" stop-color="#ff0018"/><stop offset="1" stop-color="#ff0009"/></linearGradient><linearGradient id="g160" gradientUnits="userSpaceOnUse" x1="1609.5" y1="0" x2="2345.5" y2="0"><stop offset="0" stop-color="#009dff"/><stop offset=".239" stop-color="#0181ff"/><stop offset=".321" stop-color="#6174ff"/><stop offset=".391" stop-color="#c667ff"/><stop offset=".424" stop-color="#fb60ff"/><stop offset=".44" stop-color="#ff54e8"/><stop offset=".478" stop-color="#ff3bb9"/><stop offset=".533" stop-color="#ff248a"/><stop offset=".609" stop-color="#ff0e5f"/><stop offset=".701" stop-color="#ff003f"/><stop offset=".859" stop-color="#ff001d"/><stop offset="1" stop-color="#ff000b"/></linearGradient><linearGradient id="g161" gradientUnits="userSpaceOnUse" x1="1613.5" y1="0" x2="2329.5" y2="0"><stop offset="0" stop-color="#0097ff"/><stop offset=".235" stop-color="#007cff"/><stop offset=".274" stop-color="#2776ff"/><stop offset=".352" stop-color="#8769ff"/><stop offset=".425" stop-color="#f25aff"/><stop offset=".436" stop-color="#ff55fa"/><stop offset=".475" stop-color="#ff3cc6"/><stop offset=".525" stop-color="#ff2597"/><stop offset=".598" stop-color="#ff106b"/><stop offset=".693" stop-color="#ff0047"/><stop offset=".844" stop-color="#ff0024"/><stop offset="1" stop-color="#ff000f"/></linearGradient><linearGradient id="g162" gradientUnits="userSpaceOnUse" x1="1613.5" y1="0" x2="2317.5" y2="0"><stop offset="0" stop-color="#0092ff"/><stop offset=".239" stop-color="#0076ff"/><stop offset=".33" stop-color="#6467ff"/><stop offset=".403" stop-color="#c659ff"/><stop offset=".438" stop-color="#fa51ff"/><stop offset=".449" stop-color="#ff4bf2"/><stop offset=".489" stop-color="#ff34c1"/><stop offset=".545" stop-color="#ff1d91"/><stop offset=".619" stop-color="#ff0a67"/><stop offset=".693" stop-color="#ff004b"/><stop offset=".841" stop-color="#ff0028"/><stop offset="1" stop-color="#ff0011"/></linearGradient><linearGradient id="g163" gradientUnits="userSpaceOnUse" x1="1617.5" y1="0" x2="2301.5" y2="0"><stop offset="0" stop-color="#008cff"/><stop offset=".234" stop-color="#0071ff"/><stop offset=".257" stop-color="#146dff"/><stop offset=".345" stop-color="#735fff"/><stop offset=".421" stop-color="#d74fff"/><stop offset=".444" stop-color="#f94aff"/><stop offset=".45" stop-color="#ff48fc"/><stop offset=".491" stop-color="#ff31c8"/><stop offset=".544" stop-color="#ff1d9a"/><stop offset=".62" stop-color="#ff096e"/><stop offset=".69" stop-color="#ff0052"/><stop offset=".83" stop-color="#ff002f"/><stop offset="1" stop-color="#ff0015"/></linearGradient><linearGradient id="g164" gradientUnits="userSpaceOnUse" x1="1617.5" y1="0" x2="2289.5" y2="0"><stop offset="0" stop-color="#0087ff"/><stop offset=".238" stop-color="#006bff"/><stop offset=".327" stop-color="#5a5dff"/><stop offset=".411" stop-color="#bf4dff"/><stop offset=".458" stop-color="#ff41fc"/><stop offset=".5" stop-color="#ff2cc9"/><stop offset=".554" stop-color="#ff199b"/><stop offset=".631" stop-color="#ff066f"/><stop offset=".69" stop-color="#ff0058"/><stop offset=".827" stop-color="#ff0033"/><stop offset="1" stop-color="#ff0018"/></linearGradient><linearGradient id="g165" gradientUnits="userSpaceOnUse" x1="1621.5" y1="0" x2="2277.5" y2="0"><stop offset="0" stop-color="#0082ff"/><stop offset=".238" stop-color="#0265ff"/><stop offset=".335" stop-color="#6256ff"/><stop offset=".421" stop-color="#c745ff"/><stop offset=".463" stop-color="#ff3bfd"/><stop offset=".506" stop-color="#ff27ca"/><stop offset=".561" stop-color="#ff159d"/><stop offset=".64" stop-color="#ff0371"/><stop offset=".732" stop-color="#ff004f"/><stop offset=".89" stop-color="#ff002c"/><stop offset="1" stop-color="#ff001b"/></linearGradient><linearGradient id="g166" gradientUnits="userSpaceOnUse" x1="1621.5" y1="0" x2="2261.5" y2="0"><stop offset="0" stop-color="#007dff"/><stop offset=".237" stop-color="#0061ff"/><stop offset=".331" stop-color="#5652ff"/><stop offset=".419" stop-color="#b841ff"/><stop offset=".475" stop-color="#ff35fe"/><stop offset=".519" stop-color="#ff22cb"/><stop offset=".581" stop-color="#ff0f9a"/><stop offset=".662" stop-color="#ff006f"/><stop offset=".781" stop-color="#ff0048"/><stop offset=".956" stop-color="#ff0026"/><stop offset="1" stop-color="#ff0020"/></linearGradient><linearGradient id="g167" gradientUnits="userSpaceOnUse" x1="1621.5" y1="0" x2="2249.5" y2="0"><stop offset="0" stop-color="#0078ff"/><stop offset=".242" stop-color="#025bff"/><stop offset=".35" stop-color="#654aff"/><stop offset=".439" stop-color="#c739ff"/><stop offset=".484" stop-color="#ff2ffe"/><stop offset=".529" stop-color="#ff1dcd"/><stop offset=".592" stop-color="#ff0b9b"/><stop offset=".662" stop-color="#ff0076"/><stop offset=".777" stop-color="#ff004e"/><stop offset=".949" stop-color="#ff002b"/><stop offset="1" stop-color="#ff0023"/></linearGradient><linearGradient id="g168" gradientUnits="userSpaceOnUse" x1="1625.5" y1="0" x2="2233.5" y2="0"><stop offset="0" stop-color="#0073ff"/><stop offset=".237" stop-color="#0057ff"/><stop offset=".336" stop-color="#5348ff"/><stop offset=".434" stop-color="#b836ff"/><stop offset=".493" stop-color="#ff29ff"/><stop offset=".539" stop-color="#ff18ce"/><stop offset=".605" stop-color="#ff079c"/><stop offset=".664" stop-color="#ff007d"/><stop offset=".776" stop-color="#ff0055"/><stop offset=".941" stop-color="#ff0031"/><stop offset="1" stop-color="#ff0028"/></linearGradient><linearGradient id="g169" gradientUnits="userSpaceOnUse" x1="1625.5" y1="0" x2="2221.5" y2="0"><stop offset="0" stop-color="#006eff"/><stop offset=".242" stop-color="#0152ff"/><stop offset=".356" stop-color="#6140ff"/><stop offset=".456" stop-color="#c72dff"/><stop offset=".503" stop-color="#fe23ff"/><stop offset=".557" stop-color="#ff12c9"/><stop offset=".624" stop-color="#ff029a"/><stop offset=".718" stop-color="#ff006e"/><stop offset=".852" stop-color="#ff0047"/><stop offset="1" stop-color="#ff002c"/></linearGradient><linearGradient id="g170" gradientUnits="userSpaceOnUse" x1="1629.5" y1="0" x2="2205.5" y2="0"><stop offset="0" stop-color="#0069ff"/><stop offset=".236" stop-color="#004eff"/><stop offset=".333" stop-color="#4a3fff"/><stop offset=".444" stop-color="#b22cff"/><stop offset=".514" stop-color="#fe1eff"/><stop offset=".576" stop-color="#ff0bc4"/><stop offset=".646" stop-color="#ff0097"/><stop offset=".743" stop-color="#ff006d"/><stop offset=".882" stop-color="#ff0047"/><stop offset="1" stop-color="#ff0031"/></linearGradient><linearGradient id="g171" gradientUnits="userSpaceOnUse" x1="1629.5" y1="0" x2="2193.5" y2="0"><stop offset="0" stop-color="#0065ff"/><stop offset=".241" stop-color="#0149ff"/><stop offset=".369" stop-color="#6436ff"/><stop offset=".475" stop-color="#c822ff"/><stop offset=".525" stop-color="#fd18ff"/><stop offset=".589" stop-color="#ff07c5"/><stop offset=".638" stop-color="#ff00a4"/><stop offset=".73" stop-color="#ff0078"/><stop offset=".865" stop-color="#ff0050"/><stop offset="1" stop-color="#ff0036"/></linearGradient><linearGradient id="g172" gradientUnits="userSpaceOnUse" x1="1633.5" y1="0" x2="2177.5" y2="0"><stop offset="0" stop-color="#0060ff"/><stop offset=".235" stop-color="#0045ff"/><stop offset=".331" stop-color="#4238ff"/><stop offset=".449" stop-color="#a524ff"/><stop offset=".537" stop-color="#fd13ff"/><stop offset=".61" stop-color="#ff02c1"/><stop offset=".691" stop-color="#ff0092"/><stop offset=".801" stop-color="#ff0068"/><stop offset=".963" stop-color="#ff0042"/><stop offset="1" stop-color="#ff003b"/></linearGradient><linearGradient id="g173" gradientUnits="userSpaceOnUse" x1="1637.5" y1="0" x2="2165.5" y2="0"><stop offset="0" stop-color="#005bff"/><stop offset=".235" stop-color="#0040ff"/><stop offset=".371" stop-color="#602dff"/><stop offset=".492" stop-color="#c818ff"/><stop offset=".545" stop-color="#fc0dff"/><stop offset=".583" stop-color="#ff05df"/><stop offset=".629" stop-color="#ff00bd"/><stop offset=".72" stop-color="#ff008d"/><stop offset=".841" stop-color="#ff0063"/><stop offset="1" stop-color="#ff0040"/></linearGradient><linearGradient id="g174" gradientUnits="userSpaceOnUse" x1="1637.5" y1="0" x2="2149.5" y2="0"><stop offset="0" stop-color="#0057ff"/><stop offset=".242" stop-color="#023cff"/><stop offset=".383" stop-color="#6228ff"/><stop offset=".508" stop-color="#c813ff"/><stop offset=".562" stop-color="#fb08ff"/><stop offset=".586" stop-color="#ff03ed"/><stop offset=".656" stop-color="#ff00b9"/><stop offset=".75" stop-color="#ff008b"/><stop offset=".883" stop-color="#ff0060"/><stop offset="1" stop-color="#ff0047"/></linearGradient><linearGradient id="g175" gradientUnits="userSpaceOnUse" x1="1641.5" y1="0" x2="2137.5" y2="0"><stop offset="0" stop-color="#0052ff"/><stop offset=".234" stop-color="#0038ff"/><stop offset=".379" stop-color="#5d25ff"/><stop offset=".508" stop-color="#c110ff"/><stop offset=".573" stop-color="#fb03ff"/><stop offset=".589" stop-color="#ff00f4"/><stop offset=".661" stop-color="#ff00bf"/><stop offset=".758" stop-color="#ff008f"/><stop offset=".887" stop-color="#ff0065"/><stop offset="1" stop-color="#ff004c"/></linearGradient><linearGradient id="g176" gradientUnits="userSpaceOnUse" x1="1641.5" y1="0" x2="2125.5" y2="0"><stop offset="0" stop-color="#004eff"/><stop offset=".24" stop-color="#0234ff"/><stop offset=".397" stop-color="#641fff"/><stop offset=".529" stop-color="#c809ff"/><stop offset=".595" stop-color="#ff00fc"/><stop offset=".661" stop-color="#ff00ca"/><stop offset=".752" stop-color="#ff009b"/><stop offset=".876" stop-color="#ff006f"/><stop offset="1" stop-color="#ff0052"/></linearGradient><linearGradient id="g177" gradientUnits="userSpaceOnUse" x1="1645.5" y1="0" x2="2109.5" y2="0"><stop offset="0" stop-color="#0049ff"/><stop offset=".233" stop-color="#0031ff"/><stop offset=".388" stop-color="#5a1dff"/><stop offset=".534" stop-color="#c206ff"/><stop offset=".595" stop-color="#f300ff"/><stop offset=".612" stop-color="#ff00fd"/><stop offset=".681" stop-color="#ff00cb"/><stop offset=".776" stop-color="#ff009c"/><stop offset=".905" stop-color="#ff0071"/><stop offset="1" stop-color="#ff005a"/></linearGradient><linearGradient id="g178" gradientUnits="userSpaceOnUse" x1="1645.5" y1="0" x2="2097.5" y2="0"><stop offset="0" stop-color="#0045ff"/><stop offset=".239" stop-color="#022dff"/><stop offset=".407" stop-color="#6117ff"/><stop offset=".558" stop-color="#c900ff"/><stop offset=".628" stop-color="#ff00fd"/><stop offset=".708" stop-color="#ff00c7"/><stop offset=".814" stop-color="#ff0096"/><stop offset=".956" stop-color="#ff006b"/><stop offset="1" stop-color="#ff0061"/></linearGradient><linearGradient id="g179" gradientUnits="userSpaceOnUse" x1="1649.5" y1="0" x2="2081.5" y2="0"><stop offset="0" stop-color="#0040ff"/><stop offset=".231" stop-color="#002aff"/><stop offset=".398" stop-color="#5716ff"/><stop offset=".556" stop-color="#bc00ff"/><stop offset=".648" stop-color="#ff00fe"/><stop offset=".731" stop-color="#ff00c8"/><stop offset=".843" stop-color="#ff0097"/><stop offset=".991" stop-color="#ff006c"/><stop offset="1" stop-color="#ff006a"/></linearGradient><linearGradient id="g180" gradientUnits="userSpaceOnUse" x1="1653.5" y1="0" x2="2069.5" y2="0"><stop offset="0" stop-color="#003cff"/><stop offset=".231" stop-color="#0126ff"/><stop offset=".423" stop-color="#640fff"/><stop offset=".548" stop-color="#af00ff"/><stop offset=".663" stop-color="#ff00ff"/><stop offset=".75" stop-color="#ff00c9"/><stop offset=".865" stop-color="#ff0098"/><stop offset="1" stop-color="#ff0072"/></linearGradient><linearGradient id="g181" gradientUnits="userSpaceOnUse" x1="1653.5" y1="0" x2="2053.5" y2="0"><stop offset="0" stop-color="#0038ff"/><stop offset=".23" stop-color="#0023ff"/><stop offset=".4" stop-color="#5010ff"/><stop offset=".54" stop-color="#9d00ff"/><stop offset=".69" stop-color="#ff00ff"/><stop offset=".78" stop-color="#ff00ca"/><stop offset=".9" stop-color="#ff0099"/><stop offset="1" stop-color="#ff007c"/></linearGradient><linearGradient id="g182" gradientUnits="userSpaceOnUse" x1="1657.5" y1="0" x2="2041.5" y2="0"><stop offset="0" stop-color="#0034ff"/><stop offset=".229" stop-color="#011fff"/><stop offset=".438" stop-color="#6108ff"/><stop offset=".531" stop-color="#9200ff"/><stop offset=".698" stop-color="#f700ff"/><stop offset=".708" stop-color="#fe00ff"/><stop offset=".802" stop-color="#ff00cb"/><stop offset=".927" stop-color="#ff009a"/><stop offset="1" stop-color="#ff0085"/></linearGradient><linearGradient id="g183" gradientUnits="userSpaceOnUse" x1="1657.5" y1="0" x2="2025.5" y2="0"><stop offset="0" stop-color="#0030ff"/><stop offset=".228" stop-color="#001cff"/><stop offset=".413" stop-color="#4d09ff"/><stop offset=".522" stop-color="#8200ff"/><stop offset=".707" stop-color="#ea00ff"/><stop offset=".739" stop-color="#fe00ff"/><stop offset=".848" stop-color="#ff00c7"/><stop offset=".978" stop-color="#ff0098"/><stop offset="1" stop-color="#ff0092"/></linearGradient><linearGradient id="g184" gradientUnits="userSpaceOnUse" x1="1661.5" y1="0" x2="2013.5" y2="0"><stop offset="0" stop-color="#002cff"/><stop offset=".227" stop-color="#0018ff"/><stop offset=".466" stop-color="#6300ff"/><stop offset=".67" stop-color="#c900ff"/><stop offset=".761" stop-color="#fd00ff"/><stop offset=".886" stop-color="#ff00c3"/><stop offset="1" stop-color="#ff009c"/></linearGradient><linearGradient id="g185" gradientUnits="userSpaceOnUse" x1="1665.5" y1="0" x2="1997.5" y2="0"><stop offset="0" stop-color="#0027ff"/><stop offset=".229" stop-color="#0215ff"/><stop offset=".47" stop-color="#5f00ff"/><stop offset=".687" stop-color="#c300ff"/><stop offset=".795" stop-color="#fd00ff"/><stop offset=".928" stop-color="#ff00c4"/><stop offset="1" stop-color="#ff00ab"/></linearGradient><linearGradient id="g186" gradientUnits="userSpaceOnUse" x1="1669.5" y1="0" x2="1985.5" y2="0"><stop offset="0" stop-color="#0023ff"/><stop offset=".215" stop-color="#0012ff"/><stop offset=".443" stop-color="#5100ff"/><stop offset=".684" stop-color="#b700ff"/><stop offset=".823" stop-color="#fc00ff"/><stop offset=".975" stop-color="#ff00c0"/><stop offset="1" stop-color="#ff00b8"/></linearGradient><linearGradient id="g187" gradientUnits="userSpaceOnUse" x1="1669.5" y1="0" x2="1973.5" y2="0"><stop offset="0" stop-color="#001fff"/><stop offset=".224" stop-color="#020fff"/><stop offset=".434" stop-color="#4900ff"/><stop offset=".684" stop-color="#ac00ff"/><stop offset=".855" stop-color="#fc00ff"/><stop offset=".908" stop-color="#ff00e9"/><stop offset="1" stop-color="#ff00c6"/></linearGradient><linearGradient id="g188" gradientUnits="userSpaceOnUse" x1="1673.5" y1="0" x2="1957.5" y2="0"><stop offset="0" stop-color="#001bff"/><stop offset=".211" stop-color="#000cff"/><stop offset=".408" stop-color="#3c00ff"/><stop offset=".69" stop-color="#a100ff"/><stop offset=".901" stop-color="#fb00ff"/><stop offset=".944" stop-color="#ff00f0"/><stop offset="1" stop-color="#ff00da"/></linearGradient><linearGradient id="g189" gradientUnits="userSpaceOnUse" x1="1677.5" y1="0" x2="1945.5" y2="0"><stop offset="0" stop-color="#0017ff"/><stop offset=".209" stop-color="#0109ff"/><stop offset=".373" stop-color="#3000ff"/><stop offset=".672" stop-color="#9100ff"/><stop offset=".955" stop-color="#ff00fd"/><stop offset="1" stop-color="#ff00eb"/></linearGradient><linearGradient id="g190" gradientUnits="userSpaceOnUse" x1="1677.5" y1="0" x2="1929.5" y2="0"><stop offset="0" stop-color="#0014ff"/><stop offset=".206" stop-color="#0007ff"/><stop offset=".365" stop-color="#2900ff"/><stop offset=".698" stop-color="#8d00ff"/><stop offset=".984" stop-color="#f400ff"/><stop offset="1" stop-color="#fa00ff"/></linearGradient><linearGradient id="g191" gradientUnits="userSpaceOnUse" x1="1681.5" y1="0" x2="1917.5" y2="0"><stop offset="0" stop-color="#0010ff"/><stop offset=".203" stop-color="#0104ff"/><stop offset=".424" stop-color="#3700ff"/><stop offset=".78" stop-color="#9d00ff"/><stop offset="1" stop-color="#e800ff"/></linearGradient><linearGradient id="g192" gradientUnits="userSpaceOnUse" x1="1685.5" y1="0" x2="1901.5" y2="0"><stop offset="0" stop-color="#000bff"/><stop offset=".185" stop-color="#0001ff"/><stop offset=".556" stop-color="#5400ff"/><stop offset=".926" stop-color="#b900ff"/><stop offset="1" stop-color="#d000ff"/></linearGradient><linearGradient id="g193" gradientUnits="userSpaceOnUse" x1="1689.5" y1="0" x2="1889.5" y2="0"><stop offset="0" stop-color="#0007ff"/><stop offset=".18" stop-color="#0100ff"/><stop offset=".64" stop-color="#6300ff"/><stop offset="1" stop-color="#bf00ff"/></linearGradient><linearGradient id="g194" gradientUnits="userSpaceOnUse" x1="1693.5" y1="0" x2="1873.5" y2="0"><stop offset="0" stop-color="#0003ff"/><stop offset=".178" stop-color="#0200ff"/><stop offset=".689" stop-color="#6400ff"/><stop offset="1" stop-color="#a900ff"/></linearGradient><linearGradient id="g195" gradientUnits="userSpaceOnUse" x1="1697.5" y1="0" x2="1861.5" y2="0"><stop offset="0" stop-color="#0000ff"/><stop offset=".146" stop-color="#0000ff"/><stop offset=".707" stop-color="#6000ff"/><stop offset="1" stop-color="#9a00ff"/></linearGradient><linearGradient id="g196" gradientUnits="userSpaceOnUse" x1="1701.5" y1="0" x2="1845.5" y2="0"><stop offset="0" stop-color="#0000ff"/><stop offset=".139" stop-color="#0200ff"/><stop offset=".806" stop-color="#6600ff"/><stop offset="1" stop-color="#8700ff"/></linearGradient><linearGradient id="g197" gradientUnits="userSpaceOnUse" x1="1709.5" y1="0" x2="1833.5" y2="0"><stop offset="0" stop-color="#0000ff"/><stop offset=".097" stop-color="#0400ff"/><stop offset=".871" stop-color="#6700ff"/><stop offset="1" stop-color="#7900ff"/></linearGradient><linearGradient id="g198" gradientUnits="userSpaceOnUse" x1="1713.5" y1="0" x2="1817.5" y2="0"><stop offset="0" stop-color="#0000ff"/><stop offset=".692" stop-color="#4500ff"/><stop offset="1" stop-color="#6800ff"/></linearGradient><linearGradient id="g199" gradientUnits="userSpaceOnUse" x1="1721.5" y1="0" x2="1805.5" y2="0"><stop offset="0" stop-color="#0700ff"/><stop offset="1" stop-color="#5b00ff"/></linearGradient><linearGradient id="g200" gradientUnits="userSpaceOnUse" x1="1729.5" y1="0" x2="1793.5" y2="0"><stop offset="0" stop-color="#1000ff"/><stop offset="1" stop-color="#5000ff"/></linearGradient><linearGradient id="g201" gradientUnits="userSpaceOnUse" x1="1733.5" y1="0" x2="1777.5" y2="0"><stop offset="0" stop-color="#1500ff"/><stop offset="1" stop-color="#4000ff"/></linearGradient><linearGradient id="g202" gradientUnits="userSpaceOnUse" x1="1741.5" y1="0" x2="1765.5" y2="0"><stop offset="0" stop-color="#1e00ff"/><stop offset="1" stop-color="#3500ff"/></linearGradient><filter id="sblur" x="-5%" y="-5%" width="110%" height="110%"><feGaussianBlur stdDeviation="2.5"/></filter><clipPath id="insclip"><rect x="2198" y="287" width="335" height="283"/></clipPath><linearGradient id="g203" gradientUnits="userSpaceOnUse" x1="2198" y1="0" x2="2534" y2="0"><stop offset="0" stop-color="#b1ff00"/><stop offset=".81" stop-color="#fffd00"/><stop offset="1" stop-color="#ffea00"/></linearGradient><linearGradient id="g204" gradientUnits="userSpaceOnUse" x1="2198" y1="0" x2="2534" y2="0"><stop offset="0" stop-color="#b3ff00"/><stop offset=".786" stop-color="#fffd00"/><stop offset="1" stop-color="#ffe800"/></linearGradient><linearGradient id="g205" gradientUnits="userSpaceOnUse" x1="2198" y1="0" x2="2534" y2="0"><stop offset="0" stop-color="#b5ff00"/><stop offset=".762" stop-color="#fffc00"/><stop offset="1" stop-color="#ffe500"/></linearGradient><linearGradient id="g206" gradientUnits="userSpaceOnUse" x1="2198" y1="0" x2="2534" y2="0"><stop offset="0" stop-color="#b7ff01"/><stop offset=".714" stop-color="#ffff00"/><stop offset="1" stop-color="#ffe300"/></linearGradient><linearGradient id="g207" gradientUnits="userSpaceOnUse" x1="2198" y1="0" x2="2534" y2="0"><stop offset="0" stop-color="#b9ff02"/><stop offset=".69" stop-color="#ffff00"/><stop offset="1" stop-color="#ffe000"/></linearGradient><linearGradient id="g208" gradientUnits="userSpaceOnUse" x1="2198" y1="0" x2="2534" y2="0"><stop offset="0" stop-color="#bcff04"/><stop offset=".571" stop-color="#f5ff00"/><stop offset=".69" stop-color="#fffc00"/><stop offset="1" stop-color="#ffde00"/></linearGradient><linearGradient id="g209" gradientUnits="userSpaceOnUse" x1="2198" y1="0" x2="2534" y2="0"><stop offset="0" stop-color="#beff05"/><stop offset=".452" stop-color="#ebff00"/><stop offset=".643" stop-color="#fffe00"/><stop offset="1" stop-color="#ffdc00"/></linearGradient><linearGradient id="g210" gradientUnits="userSpaceOnUse" x1="2198" y1="0" x2="2534" y2="0"><stop offset="0" stop-color="#c0ff06"/><stop offset=".476" stop-color="#f1ff00"/><stop offset=".619" stop-color="#fffe00"/><stop offset="1" stop-color="#ffd900"/></linearGradient><linearGradient id="g211" gradientUnits="userSpaceOnUse" x1="2198" y1="0" x2="2534" y2="0"><stop offset="0" stop-color="#c2ff07"/><stop offset=".5" stop-color="#f6ff00"/><stop offset=".619" stop-color="#fffb00"/><stop offset="1" stop-color="#ffd700"/></linearGradient><linearGradient id="g212" gradientUnits="userSpaceOnUse" x1="2198" y1="0" x2="2534" y2="0"><stop offset="0" stop-color="#c4ff08"/><stop offset=".524" stop-color="#fbff00"/><stop offset=".643" stop-color="#fff600"/><stop offset="1" stop-color="#ffd500"/></linearGradient><linearGradient id="g213" gradientUnits="userSpaceOnUse" x1="2198" y1="0" x2="2534" y2="0"><stop offset="0" stop-color="#c7ff0a"/><stop offset=".548" stop-color="#fffd00"/><stop offset="1" stop-color="#ffd200"/></linearGradient><linearGradient id="g214" gradientUnits="userSpaceOnUse" x1="2198" y1="0" x2="2534" y2="0"><stop offset="0" stop-color="#c9ff0b"/><stop offset=".524" stop-color="#fffd00"/><stop offset="1" stop-color="#ffd000"/></linearGradient><linearGradient id="g215" gradientUnits="userSpaceOnUse" x1="2198" y1="0" x2="2534" y2="0"><stop offset="0" stop-color="#cbff0c"/><stop offset=".5" stop-color="#fffd01"/><stop offset="1" stop-color="#ffce00"/></linearGradient><linearGradient id="g216" gradientUnits="userSpaceOnUse" x1="2198" y1="0" x2="2534" y2="0"><stop offset="0" stop-color="#ceff0d"/><stop offset=".476" stop-color="#fffd03"/><stop offset="1" stop-color="#ffcc00"/></linearGradient><linearGradient id="g217" gradientUnits="userSpaceOnUse" x1="2198" y1="0" x2="2534" y2="0"><stop offset="0" stop-color="#d0ff0f"/><stop offset=".452" stop-color="#fffd04"/><stop offset=".881" stop-color="#ffd300"/><stop offset="1" stop-color="#ffc900"/></linearGradient><linearGradient id="g218" gradientUnits="userSpaceOnUse" x1="2198" y1="0" x2="2534" y2="0"><stop offset="0" stop-color="#d3ff10"/><stop offset=".405" stop-color="#ffff07"/><stop offset=".857" stop-color="#ffd300"/><stop offset="1" stop-color="#ffc700"/></linearGradient><linearGradient id="g219" gradientUnits="userSpaceOnUse" x1="2198" y1="0" x2="2534" y2="0"><stop offset="0" stop-color="#d5ff11"/><stop offset=".381" stop-color="#ffff09"/><stop offset=".881" stop-color="#ffce00"/><stop offset="1" stop-color="#ffc500"/></linearGradient><linearGradient id="g220" gradientUnits="userSpaceOnUse" x1="2198" y1="0" x2="2534" y2="0"><stop offset="0" stop-color="#d8ff13"/><stop offset=".357" stop-color="#ffff0b"/><stop offset=".929" stop-color="#ffc800"/><stop offset="1" stop-color="#ffc300"/></linearGradient><linearGradient id="g221" gradientUnits="userSpaceOnUse" x1="2198" y1="0" x2="2534" y2="0"><stop offset="0" stop-color="#daff14"/><stop offset=".333" stop-color="#fffe0d"/><stop offset=".881" stop-color="#ffca00"/><stop offset="1" stop-color="#ffc100"/></linearGradient><linearGradient id="g222" gradientUnits="userSpaceOnUse" x1="2198" y1="0" x2="2534" y2="0"><stop offset="0" stop-color="#ddff16"/><stop offset=".31" stop-color="#fffe0f"/><stop offset=".857" stop-color="#ffc901"/><stop offset="1" stop-color="#ffbe00"/></linearGradient><linearGradient id="g223" gradientUnits="userSpaceOnUse" x1="2198" y1="0" x2="2534" y2="0"><stop offset="0" stop-color="#e0ff17"/><stop offset=".286" stop-color="#fffe11"/><stop offset=".833" stop-color="#ffc903"/><stop offset="1" stop-color="#ffbc00"/></linearGradient><linearGradient id="g224" gradientUnits="userSpaceOnUse" x1="2198" y1="0" x2="2534" y2="0"><stop offset="0" stop-color="#e2ff18"/><stop offset=".262" stop-color="#fffe12"/><stop offset=".81" stop-color="#ffc904"/><stop offset="1" stop-color="#ffba00"/></linearGradient><linearGradient id="g225" gradientUnits="userSpaceOnUse" x1="2198" y1="0" x2="2534" y2="0"><stop offset="0" stop-color="#e5ff1a"/><stop offset=".238" stop-color="#fffe14"/><stop offset=".786" stop-color="#ffc806"/><stop offset="1" stop-color="#ffb801"/></linearGradient><linearGradient id="g226" gradientUnits="userSpaceOnUse" x1="2198" y1="0" x2="2534" y2="0"><stop offset="0" stop-color="#e7ff1b"/><stop offset=".214" stop-color="#fffe16"/><stop offset=".762" stop-color="#ffc807"/><stop offset="1" stop-color="#ffb602"/></linearGradient><linearGradient id="g227" x1="0" y1="0" x2="0" y2="1"><stop offset="0" stop-color="#ff6464"/><stop offset="1" stop-color="#ff2424"/></linearGradient><linearGradient id="g228" x1="0" y1="0" x2="0" y2="1"><stop offset="0" stop-color="#5cb65c"/><stop offset="1" stop-color="#3a9a3a"/></linearGradient><linearGradient id="g229" x1="0" y1="0" x2="0" y2="1"><stop offset="0" stop-color="#5a5aff"/><stop offset="1" stop-color="#4c4cff"/></linearGradient><linearGradient id="g230" x1="0" y1="0" x2="0" y2="1"><stop offset="0" stop-color="#2c2c2c"/><stop offset="1" stop-color="#343434"/></linearGradient><linearGradient id="g231" x1="0" y1="0" x2="0" y2="1"><stop offset="0" stop-color="#161616"/><stop offset="1" stop-color="#242424"/></linearGradient><linearGradient id="g232" x1="0" y1="0" x2="0" y2="1"><stop offset="0" stop-color="#4a4a4a"/><stop offset="0.5" stop-color="#383838"/><stop offset="1" stop-color="#2a2a2a"/></linearGradient><linearGradient id="g233" x1="0" y1="0" x2="0" y2="1"><stop offset="0" stop-color="#adadad"/><stop offset="0.5" stop-color="#8a8a8a"/><stop offset="1" stop-color="#666666"/></linearGradient><linearGradient id="g234" x1="0" y1="0" x2="0" y2="1"><stop offset="0" stop-color="#1a1a1a"/><stop offset="1" stop-color="#323232"/></linearGradient><linearGradient id="g235" x1="0" y1="0" x2="0" y2="1"><stop offset="0" stop-color="#6a6a6a"/><stop offset="1" stop-color="#a8a8a8"/></linearGradient><linearGradient id="g236" x1="0" y1="0" x2="0" y2="1"><stop offset="0" stop-color="#6a6a6a"/><stop offset="1" stop-color="#a8a8a8"/></linearGradient><linearGradient id="g237" x1="0" y1="0" x2="0" y2="1"><stop offset="0" stop-color="#8e8e8e"/><stop offset="1" stop-color="#686868"/></linearGradient><linearGradient id="g238" x1="0" y1="0" x2="0" y2="1"><stop offset="0" stop-color="#bcbcbc"/><stop offset="1" stop-color="#8a8a8a"/></linearGradient><linearGradient id="g239" x1="0" y1="0" x2="0" y2="1"><stop offset="0" stop-color="#6a6a6a"/><stop offset="1" stop-color="#a8a8a8"/></linearGradient><linearGradient id="g240" x1="0" y1="0" x2="0" y2="1"><stop offset="0" stop-color="#6a6a6a"/><stop offset="1" stop-color="#a8a8a8"/></linearGradient><linearGradient id="g241" x1="0" y1="0" x2="0" y2="1"><stop offset="0" stop-color="#6a6a6a"/><stop offset="1" stop-color="#a8a8a8"/></linearGradient><linearGradient id="g242" x1="0" y1="0" x2="0" y2="1"><stop offset="0" stop-color="#6a6a6a"/><stop offset="1" stop-color="#a8a8a8"/></linearGradient><linearGradient id="g243" x1="0" y1="0" x2="0" y2="1"><stop offset="0" stop-color="#6a6a6a"/><stop offset="1" stop-color="#a8a8a8"/></linearGradient><linearGradient id="g244" x1="0" y1="0" x2="0" y2="1"><stop offset="0" stop-color="#b0b0b0"/><stop offset="1" stop-color="#7a7a7a"/></linearGradient><linearGradient id="g245" x1="0" y1="0" x2="0" y2="1"><stop offset="0" stop-color="#b0b0b0"/><stop offset="1" stop-color="#7a7a7a"/></linearGradient><linearGradient id="g246" x1="0" y1="0" x2="0" y2="1"><stop offset="0" stop-color="#6a6a6a"/><stop offset="1" stop-color="#a8a8a8"/></linearGradient><linearGradient id="g247" x1="0" y1="0" x2="0" y2="1"><stop offset="0" stop-color="#6a6a6a"/><stop offset="1" stop-color="#a8a8a8"/></linearGradient><linearGradient id="g248" x1="0" y1="0" x2="1" y2="0"><stop offset="0" stop-color="#0c0c0c" stop-opacity="0"/><stop offset="0.45" stop-color="#0c0c0c" stop-opacity="0.55"/><stop offset="1" stop-color="#0c0c0c" stop-opacity="1"/></linearGradient></defs><rect x="0" y="0" width="2560" height="1628" fill="#333333"/>
<g id="titlebar">
<rect x="0" y="0" width="2560" height="37" fill="#f3f3f3"/>
<g transform="translate(14.6 17.7) rotate(45)">
<rect x="-9.4" y="-9.4" width="8.9" height="8.9" fill="#fbc20c" rx="1.6"/>
<path d="M-1.85 -6.25H-6.25V-1.85" fill="none" stroke="#ffe566" stroke-width="0.9"/>
<rect x="-9.4" y="0.5" width="8.9" height="8.9" fill="#2cb8f4" rx="1.6"/>
<path d="M-1.85 6.25H-6.25V1.85" fill="none" stroke="#9ae4ff" stroke-width="0.9"/>
<rect x="0.5" y="-9.4" width="8.9" height="8.9" fill="#12c812" rx="1.6"/>
<path d="M1.85 -6.25H6.25V-1.85" fill="none" stroke="#7dff7d" stroke-width="0.9"/>
<rect x="0.5" y="0.5" width="8.9" height="8.9" fill="#ee1458" rx="1.6"/>
<path d="M1.85 6.25H6.25V1.85" fill="none" stroke="#ff7aa8" stroke-width="0.9"/>
</g>
<text x="36.5" y="25.6" font-size="19" fill="#909090" textLength="636" lengthAdjust="spacingAndGlyphs">Calman 2025 Calman Ultimate for Business 29 Days Remaining  - Untitled</text>
<line x1="2360.7" y1="17" x2="2376.8" y2="17" stroke="#8a8a8a" stroke-width="1.5"/>
<rect x="2436.1" y="12.9" width="11.3" height="11.3" rx="2.6" fill="none" stroke="#8a8a8a" stroke-width="1.5"/>
<path d="M2439.3 10.1h7.5a4 4 0 0 1 4 4v7.5" fill="none" stroke="#8a8a8a" stroke-width="1.5"/>
<path d="M2512 9.2l16 16M2528 9.2l-16 16" stroke="#8a8a8a" stroke-width="1.4" fill="none"/>
</g>
<g id="topband">
<rect x="0" y="37" width="2560" height="107.5" fill="#222222"/>
<path d="M0 37H300V80a6 6 0 0 1 -6 6H6a6 6 0 0 1 -6 -6Z" fill="url(#g1)" stroke="#c9a0a0" stroke-width="1"/>
<rect x="0" y="37" width="301" height="1.5" fill="#e23a3a"/>
<g transform="translate(56.3 60.4) rotate(45)">
<rect x="-8.2" y="-8.2" width="7.2" height="7.2" fill="#fff" rx="1"/>
<rect x="-8.2" y="1" width="7.2" height="7.2" fill="#fff" rx="1"/>
<rect x="1" y="-8.2" width="7.2" height="7.2" fill="#fff" rx="1"/>
<rect x="1" y="1" width="7.2" height="7.2" fill="#fff" rx="1"/>
<path d="M-1.5 -11.7H-11.7V-1.5" fill="none" stroke="#fff" stroke-width="4.1" stroke-linejoin="round"/>
<path d="M-1.5 11.7H-11.7V1.5" fill="none" stroke="#fff" stroke-width="4.1" stroke-linejoin="round"/>
<path d="M1.5 -11.7H11.7V-1.5" fill="none" stroke="#fff" stroke-width="4.1" stroke-linejoin="round"/>
<path d="M1.5 11.7H11.7V1.5" fill="none" stroke="#fff" stroke-width="4.1" stroke-linejoin="round"/>
</g>
<text x="80.6" y="71.2" font-size="40.5" fill="#ffffff" textLength="143" lengthAdjust="spacingAndGlyphs" stroke="#ffffff" stroke-width="0.9">calman</text>
<circle cx="272.4" cy="59.8" r="16" fill="url(#g3)"/>
<path d="M264.3 57.6h16.2l-8.1 8.8z" fill="#fff"/>
<rect x="312" y="57" width="2248" height="9" fill="url(#g4)"/>
<rect x="-6" y="94.8" width="49.5" height="45.2" fill="url(#g5)" rx="6" stroke="#e4e4e4" stroke-width="1.6"/>
<circle cx="20.6" cy="117" r="16" fill="url(#g6)"/>
<path d="M16.4 108.4v16.2l8.7-8.1z" fill="#fff"/>
<path d="M48 144.5V101a6 6 0 0 1 6 -6H193a6 6 0 0 1 6 6V144.5Z" fill="url(#g7)"/>
<path d="M48 144.5V101a6 6 0 0 1 6 -6H193a6 6 0 0 1 6 6V144.5" fill="none" stroke="#7c7c7c" stroke-width="1.5"/>
<line x1="143.5" y1="95" x2="143.5" y2="144" stroke="#7c7c7c" stroke-width="1.5"/>
<text x="58.3" y="128.3" font-size="19" fill="#e6e6e6" textLength="75.3" lengthAdjust="spacingAndGlyphs">History 1</text>
<circle cx="169" cy="123" r="15.5" fill="url(#g8)"/>
<text x="169" y="130" font-size="20" fill="#a0a0a0" text-anchor="middle">+</text>
<path d="M1624 144.5V101a7 7 0 0 1 7 -7H1851a7 7 0 0 1 7 7V144.5Z" fill="url(#g9)"/>
<path d="M1624 144.5V101a7 7 0 0 1 7 -7h3V144.5Z" fill="#0cde0c"/>
<text x="1639" y="113.7" font-size="17" fill="#f0f0f0" textLength="107.5" lengthAdjust="spacingAndGlyphs">X-Rite i1Pro 3</text>
<text x="1639" y="137.3" font-size="17" fill="#f0f0f0" textLength="91" lengthAdjust="spacingAndGlyphs">Direct View</text>
<circle cx="1768" cy="119" r="15" fill="url(#g10)"/>
<path d="M1760 117h16l-8 8.4z" fill="#fff"/>
<line x1="1799.5" y1="99" x2="1799.5" y2="144" stroke="#3a3a3a" stroke-width="1.5"/>
<circle cx="1833.2" cy="118.9" r="20.5" fill="#0000f0" stroke="#fff" stroke-width="1.6"/>
<text x="1833.2" y="125" font-size="17" fill="#fff" text-anchor="middle" textLength="25" lengthAdjust="spacingAndGlyphs">716</text>
<path d="M1868 144.5V101a7 7 0 0 1 7 -7H2203a7 7 0 0 1 7 7V144.5Z" fill="url(#g9)"/>
<path d="M1868 144.5V101a7 7 0 0 1 7 -7h3V144.5Z" fill="#0cde0c"/>
<text x="1883" y="113.7" font-size="17" fill="#f0f0f0" textLength="279" lengthAdjust="spacingAndGlyphs">CalMAN Client 3 Pattern Generator</text>
<circle cx="2183" cy="119" r="15" fill="url(#g11)"/>
<path d="M2175 117h16l-8 8.4z" fill="#fff"/>
<path d="M2219 144.5V101a7 7 0 0 1 7 -7H2448.5a7 7 0 0 1 7 7V144.5Z" fill="url(#g9)"/>
<path d="M2219 144.5V101a7 7 0 0 1 7 -7h3V144.5Z" fill="#e8e80c"/>
<text x="2234.5" y="113.7" font-size="17" fill="#f0f0f0" textLength="173" lengthAdjust="spacingAndGlyphs">Direct Display Control</text>
<circle cx="2428.7" cy="119" r="15" fill="url(#g12)"/>
<path d="M2420.7 117h16l-8 8.4z" fill="#fff"/>
<rect x="2460.5" y="94.8" width="54.5" height="45" fill="url(#g5)" rx="6" stroke="#e4e4e4" stroke-width="1.6"/>
<circle cx="2488.1" cy="117.2" r="15.5" fill="url(#g13)"/>
<path d="M2495.74 114.54L2498.55 115.11L2498.55 118.69L2495.74 119.26L2495.18 120.63L2496.76 123.02L2494.22 125.56L2491.83 123.98L2490.46 124.54L2489.89 127.35L2486.31 127.35L2485.74 124.54L2484.37 123.98L2481.98 125.56L2479.44 123.02L2481.02 120.63L2480.46 119.26L2477.65 118.69L2477.65 115.11L2480.46 114.54L2481.02 113.17L2479.44 110.78L2481.98 108.24L2484.37 109.82L2485.74 109.26L2486.31 106.45L2489.89 106.45L2490.46 109.26L2491.83 109.82L2494.22 108.24L2496.76 110.78L2495.18 113.17Z M2493.5 116.9a5.4 5.4 0 1 0 -10.8 0a5.4 5.4 0 1 0 10.8 0Z" fill="#e2e2e2" fill-rule="evenodd"/>
<rect x="2516.5" y="94.8" width="52" height="45" fill="url(#g5)" rx="6" stroke="#e4e4e4" stroke-width="1.6"/>
<circle cx="2539" cy="117.3" r="15.5" fill="url(#g14)"/>
<path d="M2542.8 108.8v15.8l-8.8-7.9z" fill="#fff"/>
</g>
<g id="charts">
<text x="36.8" y="299" font-size="62" fill="#f2f2f2" textLength="501" lengthAdjust="spacingAndGlyphs">Saturation Sweeps</text>
<text x="278.5" y="375" font-size="21.5" fill="#dcdcdc" text-anchor="middle" textLength="121" lengthAdjust="spacingAndGlyphs">DeltaE 2000</text>
<rect x="66.5" y="384" width="478.5" height="633" fill="#252525"/>
<line x1="129.4" y1="384" x2="129.4" y2="1017" stroke="#9a9a9a" stroke-width="2"/>
<line x1="193.2" y1="384" x2="193.2" y2="1017" stroke="#9a9a9a" stroke-width="2"/>
<line x1="257" y1="384" x2="257" y2="1017" stroke="#9a9a9a" stroke-width="2"/>
<line x1="320.8" y1="384" x2="320.8" y2="1017" stroke="#9a9a9a" stroke-width="2"/>
<line x1="384.6" y1="384" x2="384.6" y2="1017" stroke="#9a9a9a" stroke-width="2"/>
<line x1="448.4" y1="384" x2="448.4" y2="1017" stroke="#9a9a9a" stroke-width="2"/>
<line x1="512.2" y1="384" x2="512.2" y2="1017" stroke="#9a9a9a" stroke-width="2"/>
<text x="65.6" y="444.95" font-size="22.5" fill="#dcdcdc" text-anchor="end" textLength="55.5" lengthAdjust="spacingAndGlyphs">100%</text>
<rect x="67.8" y="396" width="185.3" height="10.3" fill="#040404"/>
<rect x="67.5" y="394.6" width="183.7" height="10.1" fill="url(#g15)" stroke="#050505" stroke-width="1.6"/>
<rect x="68.5" y="395.6" width="181.7" height="3" fill="#ffffff" opacity="0.12"/>
<rect x="67.8" y="408.6" width="287.1" height="10.3" fill="#040404"/>
<rect x="67.5" y="407.2" width="285.5" height="10.1" fill="url(#g16)" stroke="#050505" stroke-width="1.6"/>
<rect x="68.5" y="408.2" width="283.5" height="3" fill="#ffffff" opacity="0.12"/>
<rect x="67.8" y="421.2" width="478.4" height="10.3" fill="#040404"/>
<rect x="67.5" y="419.8" width="476.8" height="10.1" fill="url(#g17)" stroke="#050505" stroke-width="1.6"/>
<rect x="68.5" y="420.8" width="474.8" height="3" fill="#ffffff" opacity="0.12"/>
<rect x="67.8" y="433.8" width="178.1" height="10.3" fill="#040404"/>
<rect x="67.5" y="432.4" width="176.5" height="10.1" fill="url(#g18)" stroke="#050505" stroke-width="1.6"/>
<rect x="68.5" y="433.4" width="174.5" height="3" fill="#ffffff" opacity="0.12"/>
<rect x="67.8" y="446.4" width="320.3" height="10.3" fill="#040404"/>
<rect x="67.5" y="445" width="318.7" height="10.1" fill="url(#g19)" stroke="#050505" stroke-width="1.6"/>
<rect x="68.5" y="446" width="316.7" height="3" fill="#ffffff" opacity="0.12"/>
<rect x="67.8" y="459" width="146.7" height="10.3" fill="#040404"/>
<rect x="67.5" y="457.6" width="145.1" height="10.1" fill="url(#g20)" stroke="#050505" stroke-width="1.6"/>
<rect x="68.5" y="458.6" width="143.1" height="3" fill="#ffffff" opacity="0.12"/>
<text x="65.6" y="550.45" font-size="22.5" fill="#dcdcdc" text-anchor="end" textLength="43.5" lengthAdjust="spacingAndGlyphs">80%</text>
<rect x="67.8" y="501.5" width="192.4" height="10.3" fill="#040404"/>
<rect x="67.5" y="500.1" width="190.8" height="10.1" fill="url(#g21)" stroke="#050505" stroke-width="1.6"/>
<rect x="68.5" y="501.1" width="188.8" height="3" fill="#ffffff" opacity="0.12"/>
<rect x="67.8" y="514.1" width="249.8" height="10.3" fill="#040404"/>
<rect x="67.5" y="512.7" width="248.2" height="10.1" fill="url(#g22)" stroke="#050505" stroke-width="1.6"/>
<rect x="68.5" y="513.7" width="246.2" height="3" fill="#ffffff" opacity="0.12"/>
<rect x="67.8" y="526.7" width="320.3" height="10.3" fill="#040404"/>
<rect x="67.5" y="525.3" width="318.7" height="10.1" fill="url(#g23)" stroke="#050505" stroke-width="1.6"/>
<rect x="68.5" y="526.3" width="316.7" height="3" fill="#ffffff" opacity="0.12"/>
<rect x="67.8" y="539.3" width="163.5" height="10.3" fill="#040404"/>
<rect x="67.5" y="537.9" width="161.9" height="10.1" fill="url(#g24)" stroke="#050505" stroke-width="1.6"/>
<rect x="68.5" y="538.9" width="159.9" height="3" fill="#ffffff" opacity="0.12"/>
<rect x="67.8" y="551.9" width="266.3" height="10.3" fill="#040404"/>
<rect x="67.5" y="550.5" width="264.7" height="10.1" fill="url(#g25)" stroke="#050505" stroke-width="1.6"/>
<rect x="68.5" y="551.5" width="262.7" height="3" fill="#ffffff" opacity="0.12"/>
<rect x="67.8" y="564.5" width="128.1" height="10.3" fill="#040404"/>
<rect x="67.5" y="563.1" width="126.5" height="10.1" fill="url(#g26)" stroke="#050505" stroke-width="1.6"/>
<rect x="68.5" y="564.1" width="124.5" height="3" fill="#ffffff" opacity="0.12"/>
<text x="65.6" y="655.95" font-size="22.5" fill="#dcdcdc" text-anchor="end" textLength="43.5" lengthAdjust="spacingAndGlyphs">60%</text>
<rect x="67.8" y="607" width="172.4" height="10.3" fill="#040404"/>
<rect x="67.5" y="605.6" width="170.8" height="10.1" fill="url(#g27)" stroke="#050505" stroke-width="1.6"/>
<rect x="68.5" y="606.6" width="168.8" height="3" fill="#ffffff" opacity="0.12"/>
<rect x="67.8" y="619.6" width="222.6" height="10.3" fill="#040404"/>
<rect x="67.5" y="618.2" width="221" height="10.1" fill="url(#g28)" stroke="#050505" stroke-width="1.6"/>
<rect x="68.5" y="619.2" width="219" height="3" fill="#ffffff" opacity="0.12"/>
<rect x="67.8" y="632.2" width="228.2" height="10.3" fill="#040404"/>
<rect x="67.5" y="630.8" width="226.6" height="10.1" fill="url(#g29)" stroke="#050505" stroke-width="1.6"/>
<rect x="68.5" y="631.8" width="224.6" height="3" fill="#ffffff" opacity="0.12"/>
<rect x="67.8" y="644.8" width="155.5" height="10.3" fill="#040404"/>
<rect x="67.5" y="643.4" width="153.9" height="10.1" fill="url(#g30)" stroke="#050505" stroke-width="1.6"/>
<rect x="68.5" y="644.4" width="151.9" height="3" fill="#ffffff" opacity="0.12"/>
<rect x="67.8" y="657.4" width="227.3" height="10.3" fill="#040404"/>
<rect x="67.5" y="656" width="225.7" height="10.1" fill="url(#g31)" stroke="#050505" stroke-width="1.6"/>
<rect x="68.5" y="657" width="223.7" height="3" fill="#ffffff" opacity="0.12"/>
<rect x="67.8" y="670" width="111.9" height="10.3" fill="#040404"/>
<rect x="67.5" y="668.6" width="110.3" height="10.1" fill="url(#g32)" stroke="#050505" stroke-width="1.6"/>
<rect x="68.5" y="669.6" width="108.3" height="3" fill="#ffffff" opacity="0.12"/>
<text x="65.6" y="761.45" font-size="22.5" fill="#dcdcdc" text-anchor="end" textLength="43.5" lengthAdjust="spacingAndGlyphs">40%</text>
<rect x="67.8" y="712.5" width="159.9" height="10.3" fill="#040404"/>
<rect x="67.5" y="711.1" width="158.3" height="10.1" fill="url(#g33)" stroke="#050505" stroke-width="1.6"/>
<rect x="68.5" y="712.1" width="156.3" height="3" fill="#ffffff" opacity="0.12"/>
<rect x="67.8" y="725.1" width="195.3" height="10.3" fill="#040404"/>
<rect x="67.5" y="723.7" width="193.7" height="10.1" fill="url(#g34)" stroke="#050505" stroke-width="1.6"/>
<rect x="68.5" y="724.7" width="191.7" height="3" fill="#ffffff" opacity="0.12"/>
<rect x="67.8" y="737.7" width="149.5" height="10.3" fill="#040404"/>
<rect x="67.5" y="736.3" width="147.9" height="10.1" fill="url(#g35)" stroke="#050505" stroke-width="1.6"/>
<rect x="68.5" y="737.3" width="145.9" height="3" fill="#ffffff" opacity="0.12"/>
<rect x="67.8" y="750.3" width="134.8" height="10.3" fill="#040404"/>
<rect x="67.5" y="748.9" width="133.2" height="10.1" fill="url(#g36)" stroke="#050505" stroke-width="1.6"/>
<rect x="68.5" y="749.9" width="131.2" height="3" fill="#ffffff" opacity="0.12"/>
<rect x="67.8" y="762.9" width="193.1" height="10.3" fill="#040404"/>
<rect x="67.5" y="761.5" width="191.5" height="10.1" fill="url(#g37)" stroke="#050505" stroke-width="1.6"/>
<rect x="68.5" y="762.5" width="189.5" height="3" fill="#ffffff" opacity="0.12"/>
<rect x="67.8" y="775.5" width="93.1" height="10.3" fill="#040404"/>
<rect x="67.5" y="774.1" width="91.5" height="10.1" fill="url(#g38)" stroke="#050505" stroke-width="1.6"/>
<rect x="68.5" y="775.1" width="89.5" height="3" fill="#ffffff" opacity="0.12"/>
<text x="65.6" y="866.95" font-size="22.5" fill="#dcdcdc" text-anchor="end" textLength="43.5" lengthAdjust="spacingAndGlyphs">20%</text>
<rect x="67.8" y="818" width="161.8" height="10.3" fill="#040404"/>
<rect x="67.5" y="816.6" width="160.2" height="10.1" fill="url(#g39)" stroke="#050505" stroke-width="1.6"/>
<rect x="68.5" y="817.6" width="158.2" height="3" fill="#ffffff" opacity="0.12"/>
<rect x="67.8" y="830.6" width="161.8" height="10.3" fill="#040404"/>
<rect x="67.5" y="829.2" width="160.2" height="10.1" fill="url(#g40)" stroke="#050505" stroke-width="1.6"/>
<rect x="68.5" y="830.2" width="158.2" height="3" fill="#ffffff" opacity="0.12"/>
<rect x="67.8" y="843.2" width="126.3" height="10.3" fill="#040404"/>
<rect x="67.5" y="841.8" width="124.7" height="10.1" fill="url(#g41)" stroke="#050505" stroke-width="1.6"/>
<rect x="68.5" y="842.8" width="122.7" height="3" fill="#ffffff" opacity="0.12"/>
<rect x="67.8" y="855.8" width="103.4" height="10.3" fill="#040404"/>
<rect x="67.5" y="854.4" width="101.8" height="10.1" fill="url(#g42)" stroke="#050505" stroke-width="1.6"/>
<rect x="68.5" y="855.4" width="99.8" height="3" fill="#ffffff" opacity="0.12"/>
<rect x="67.8" y="868.4" width="158" height="10.3" fill="#040404"/>
<rect x="67.5" y="867" width="156.4" height="10.1" fill="url(#g43)" stroke="#050505" stroke-width="1.6"/>
<rect x="68.5" y="868" width="154.4" height="3" fill="#ffffff" opacity="0.12"/>
<rect x="67.8" y="881" width="73.6" height="10.3" fill="#040404"/>
<rect x="67.5" y="879.6" width="72" height="10.1" fill="url(#g44)" stroke="#050505" stroke-width="1.6"/>
<rect x="68.5" y="880.6" width="70" height="3" fill="#ffffff" opacity="0.12"/>
<text x="65.6" y="972.45" font-size="22.5" fill="#dcdcdc" text-anchor="end" textLength="33" lengthAdjust="spacingAndGlyphs">100</text>
<rect x="67.8" y="999.1" width="51.1" height="10.3" fill="#040404"/>
<rect x="67.5" y="997.7" width="49.5" height="10.1" fill="url(#g45)" stroke="#050505" stroke-width="1.6"/>
<rect x="68.5" y="998.7" width="47.5" height="3" fill="#ffffff" opacity="0.12"/>
<line x1="57.5" y1="384" x2="66.5" y2="384" stroke="#a6a6a6" stroke-width="2"/>
<line x1="57.5" y1="489.5" x2="66.5" y2="489.5" stroke="#a6a6a6" stroke-width="2"/>
<line x1="57.5" y1="595" x2="66.5" y2="595" stroke="#a6a6a6" stroke-width="2"/>
<line x1="57.5" y1="700.5" x2="66.5" y2="700.5" stroke="#a6a6a6" stroke-width="2"/>
<line x1="57.5" y1="806" x2="66.5" y2="806" stroke="#a6a6a6" stroke-width="2"/>
<line x1="57.5" y1="911.5" x2="66.5" y2="911.5" stroke="#a6a6a6" stroke-width="2"/>
<line x1="57.5" y1="1017" x2="66.5" y2="1017" stroke="#a6a6a6" stroke-width="2"/>
<rect x="66.5" y="384" width="478.5" height="633" fill="none" stroke="#a6a6a6" stroke-width="2.6"/>
<line x1="66.5" y1="1017" x2="66.5" y2="1027" stroke="#a6a6a6" stroke-width="2"/>
<text x="66.5" y="1050.6" font-size="22.5" fill="#dcdcdc" text-anchor="middle" textLength="13" lengthAdjust="spacingAndGlyphs">0</text>
<line x1="129.4" y1="1017" x2="129.4" y2="1027" stroke="#a6a6a6" stroke-width="2"/>
<text x="129.4" y="1050.6" font-size="22.5" fill="#dcdcdc" text-anchor="middle" textLength="13" lengthAdjust="spacingAndGlyphs">2</text>
<line x1="193.2" y1="1017" x2="193.2" y2="1027" stroke="#a6a6a6" stroke-width="2"/>
<text x="193.2" y="1050.6" font-size="22.5" fill="#dcdcdc" text-anchor="middle" textLength="13" lengthAdjust="spacingAndGlyphs">4</text>
<line x1="257" y1="1017" x2="257" y2="1027" stroke="#a6a6a6" stroke-width="2"/>
<text x="257" y="1050.6" font-size="22.5" fill="#dcdcdc" text-anchor="middle" textLength="13" lengthAdjust="spacingAndGlyphs">6</text>
<line x1="320.8" y1="1017" x2="320.8" y2="1027" stroke="#a6a6a6" stroke-width="2"/>
<text x="320.8" y="1050.6" font-size="22.5" fill="#dcdcdc" text-anchor="middle" textLength="13" lengthAdjust="spacingAndGlyphs">8</text>
<line x1="384.6" y1="1017" x2="384.6" y2="1027" stroke="#a6a6a6" stroke-width="2"/>
<text x="384.6" y="1050.6" font-size="22.5" fill="#dcdcdc" text-anchor="middle" textLength="25.5" lengthAdjust="spacingAndGlyphs">10</text>
<line x1="448.4" y1="1017" x2="448.4" y2="1027" stroke="#a6a6a6" stroke-width="2"/>
<text x="448.4" y="1050.6" font-size="22.5" fill="#dcdcdc" text-anchor="middle" textLength="25.5" lengthAdjust="spacingAndGlyphs">12</text>
<line x1="512.2" y1="1017" x2="512.2" y2="1027" stroke="#a6a6a6" stroke-width="2"/>
<text x="512.2" y="1050.6" font-size="22.5" fill="#dcdcdc" text-anchor="middle" textLength="25.5" lengthAdjust="spacingAndGlyphs">14</text>
<text x="716.5" y="270.5" font-size="21.5" fill="#dcdcdc" text-anchor="middle" textLength="71.5" lengthAdjust="spacingAndGlyphs">Delta L</text>
<rect x="627" y="279.4" width="221" height="485.1" fill="#252525"/>
<line x1="627" y1="361.45" x2="848" y2="361.45" stroke="#9a9a9a" stroke-width="2"/>
<line x1="627" y1="442.37" x2="848" y2="442.37" stroke="#9a9a9a" stroke-width="2"/>
<line x1="627" y1="523.3" x2="848" y2="523.3" stroke="#9a9a9a" stroke-width="2"/>
<line x1="627" y1="604.22" x2="848" y2="604.22" stroke="#9a9a9a" stroke-width="2"/>
<line x1="627" y1="685.15" x2="848" y2="685.15" stroke="#9a9a9a" stroke-width="2"/>
<line x1="617" y1="279.4" x2="627" y2="279.4" stroke="#a6a6a6" stroke-width="2"/>
<text x="617.8" y="288.2" font-size="22.5" fill="#dcdcdc" text-anchor="end" textLength="25.5" lengthAdjust="spacingAndGlyphs">15</text>
<line x1="617" y1="361.45" x2="627" y2="361.45" stroke="#a6a6a6" stroke-width="2"/>
<text x="617.8" y="370.25" font-size="22.5" fill="#dcdcdc" text-anchor="end" textLength="25.5" lengthAdjust="spacingAndGlyphs">10</text>
<line x1="617" y1="442.37" x2="627" y2="442.37" stroke="#a6a6a6" stroke-width="2"/>
<text x="617.8" y="451.17" font-size="22.5" fill="#dcdcdc" text-anchor="end" textLength="13" lengthAdjust="spacingAndGlyphs">5</text>
<line x1="617" y1="523.3" x2="627" y2="523.3" stroke="#a6a6a6" stroke-width="2"/>
<text x="617.8" y="532.1" font-size="22.5" fill="#dcdcdc" text-anchor="end" textLength="13" lengthAdjust="spacingAndGlyphs">0</text>
<line x1="617" y1="604.22" x2="627" y2="604.22" stroke="#a6a6a6" stroke-width="2"/>
<text x="617.8" y="613.02" font-size="22.5" fill="#dcdcdc" text-anchor="end" textLength="20.5" lengthAdjust="spacingAndGlyphs">-5</text>
<line x1="617" y1="685.15" x2="627" y2="685.15" stroke="#a6a6a6" stroke-width="2"/>
<text x="617.8" y="693.95" font-size="22.5" fill="#dcdcdc" text-anchor="end" textLength="33" lengthAdjust="spacingAndGlyphs">-10</text>
<line x1="617" y1="764.5" x2="627" y2="764.5" stroke="#a6a6a6" stroke-width="2"/>
<text x="617.8" y="773.3" font-size="22.5" fill="#dcdcdc" text-anchor="end" textLength="33" lengthAdjust="spacingAndGlyphs">-15</text>
<rect x="627" y="279.4" width="221" height="485.1" fill="none" stroke="#a6a6a6" stroke-width="2.6"/>
<line x1="627" y1="764.5" x2="627" y2="774.5" stroke="#a6a6a6" stroke-width="2"/>
<line x1="848" y1="764.5" x2="848" y2="774.5" stroke="#a6a6a6" stroke-width="2"/>
<text x="737.5" y="789" font-size="22.5" fill="#dcdcdc" text-anchor="middle" textLength="56" lengthAdjust="spacingAndGlyphs">100%</text>
<rect x="649" y="523.3" width="176" height="50.17" fill="url(#g46)" stroke="#050505" stroke-width="2"/>
<text x="1019" y="270.5" font-size="21.5" fill="#dcdcdc" text-anchor="middle" textLength="73.5" lengthAdjust="spacingAndGlyphs">Delta C</text>
<rect x="929.5" y="279.4" width="221" height="485.1" fill="#252525"/>
<line x1="929.5" y1="361.45" x2="1150.5" y2="361.45" stroke="#9a9a9a" stroke-width="2"/>
<line x1="929.5" y1="442.37" x2="1150.5" y2="442.37" stroke="#9a9a9a" stroke-width="2"/>
<line x1="929.5" y1="523.3" x2="1150.5" y2="523.3" stroke="#9a9a9a" stroke-width="2"/>
<line x1="929.5" y1="604.22" x2="1150.5" y2="604.22" stroke="#9a9a9a" stroke-width="2"/>
<line x1="929.5" y1="685.15" x2="1150.5" y2="685.15" stroke="#9a9a9a" stroke-width="2"/>
<line x1="919.5" y1="279.4" x2="929.5" y2="279.4" stroke="#a6a6a6" stroke-width="2"/>
<text x="920.3" y="288.2" font-size="22.5" fill="#dcdcdc" text-anchor="end" textLength="25.5" lengthAdjust="spacingAndGlyphs">15</text>
<line x1="919.5" y1="361.45" x2="929.5" y2="361.45" stroke="#a6a6a6" stroke-width="2"/>
<text x="920.3" y="370.25" font-size="22.5" fill="#dcdcdc" text-anchor="end" textLength="25.5" lengthAdjust="spacingAndGlyphs">10</text>
<line x1="919.5" y1="442.37" x2="929.5" y2="442.37" stroke="#a6a6a6" stroke-width="2"/>
<text x="920.3" y="451.17" font-size="22.5" fill="#dcdcdc" text-anchor="end" textLength="13" lengthAdjust="spacingAndGlyphs">5</text>
<line x1="919.5" y1="523.3" x2="929.5" y2="523.3" stroke="#a6a6a6" stroke-width="2"/>
<text x="920.3" y="532.1" font-size="22.5" fill="#dcdcdc" text-anchor="end" textLength="13" lengthAdjust="spacingAndGlyphs">0</text>
<line x1="919.5" y1="604.22" x2="929.5" y2="604.22" stroke="#a6a6a6" stroke-width="2"/>
<text x="920.3" y="613.02" font-size="22.5" fill="#dcdcdc" text-anchor="end" textLength="20.5" lengthAdjust="spacingAndGlyphs">-5</text>
<line x1="919.5" y1="685.15" x2="929.5" y2="685.15" stroke="#a6a6a6" stroke-width="2"/>
<text x="920.3" y="693.95" font-size="22.5" fill="#dcdcdc" text-anchor="end" textLength="33" lengthAdjust="spacingAndGlyphs">-10</text>
<line x1="919.5" y1="764.5" x2="929.5" y2="764.5" stroke="#a6a6a6" stroke-width="2"/>
<text x="920.3" y="773.3" font-size="22.5" fill="#dcdcdc" text-anchor="end" textLength="33" lengthAdjust="spacingAndGlyphs">-15</text>
<rect x="929.5" y="279.4" width="221" height="485.1" fill="none" stroke="#a6a6a6" stroke-width="2.6"/>
<line x1="929.5" y1="764.5" x2="929.5" y2="774.5" stroke="#a6a6a6" stroke-width="2"/>
<line x1="1150.5" y1="764.5" x2="1150.5" y2="774.5" stroke="#a6a6a6" stroke-width="2"/>
<text x="1040" y="789" font-size="22.5" fill="#dcdcdc" text-anchor="middle" textLength="56" lengthAdjust="spacingAndGlyphs">100%</text>
<rect x="951.5" y="477.5" width="176" height="45.8" fill="url(#g47)" stroke="#050505" stroke-width="2"/>
<text x="1321.5" y="270.5" font-size="21.5" fill="#dcdcdc" text-anchor="middle" textLength="74.5" lengthAdjust="spacingAndGlyphs">Delta H</text>
<rect x="1232" y="279.4" width="221" height="485.1" fill="#252525"/>
<line x1="1232" y1="361.45" x2="1453" y2="361.45" stroke="#9a9a9a" stroke-width="2"/>
<line x1="1232" y1="442.37" x2="1453" y2="442.37" stroke="#9a9a9a" stroke-width="2"/>
<line x1="1232" y1="523.3" x2="1453" y2="523.3" stroke="#9a9a9a" stroke-width="2"/>
<line x1="1232" y1="604.22" x2="1453" y2="604.22" stroke="#9a9a9a" stroke-width="2"/>
<line x1="1232" y1="685.15" x2="1453" y2="685.15" stroke="#9a9a9a" stroke-width="2"/>
<line x1="1222" y1="279.4" x2="1232" y2="279.4" stroke="#a6a6a6" stroke-width="2"/>
<text x="1222.8" y="288.2" font-size="22.5" fill="#dcdcdc" text-anchor="end" textLength="25.5" lengthAdjust="spacingAndGlyphs">15</text>
<line x1="1222" y1="361.45" x2="1232" y2="361.45" stroke="#a6a6a6" stroke-width="2"/>
<text x="1222.8" y="370.25" font-size="22.5" fill="#dcdcdc" text-anchor="end" textLength="25.5" lengthAdjust="spacingAndGlyphs">10</text>
<line x1="1222" y1="442.37" x2="1232" y2="442.37" stroke="#a6a6a6" stroke-width="2"/>
<text x="1222.8" y="451.17" font-size="22.5" fill="#dcdcdc" text-anchor="end" textLength="13" lengthAdjust="spacingAndGlyphs">5</text>
<line x1="1222" y1="523.3" x2="1232" y2="523.3" stroke="#a6a6a6" stroke-width="2"/>
<text x="1222.8" y="532.1" font-size="22.5" fill="#dcdcdc" text-anchor="end" textLength="13" lengthAdjust="spacingAndGlyphs">0</text>
<line x1="1222" y1="604.22" x2="1232" y2="604.22" stroke="#a6a6a6" stroke-width="2"/>
<text x="1222.8" y="613.02" font-size="22.5" fill="#dcdcdc" text-anchor="end" textLength="20.5" lengthAdjust="spacingAndGlyphs">-5</text>
<line x1="1222" y1="685.15" x2="1232" y2="685.15" stroke="#a6a6a6" stroke-width="2"/>
<text x="1222.8" y="693.95" font-size="22.5" fill="#dcdcdc" text-anchor="end" textLength="33" lengthAdjust="spacingAndGlyphs">-10</text>
<line x1="1222" y1="764.5" x2="1232" y2="764.5" stroke="#a6a6a6" stroke-width="2"/>
<text x="1222.8" y="773.3" font-size="22.5" fill="#dcdcdc" text-anchor="end" textLength="33" lengthAdjust="spacingAndGlyphs">-15</text>
<rect x="1232" y="279.4" width="221" height="485.1" fill="none" stroke="#a6a6a6" stroke-width="2.6"/>
<line x1="1232" y1="764.5" x2="1232" y2="774.5" stroke="#a6a6a6" stroke-width="2"/>
<line x1="1453" y1="764.5" x2="1453" y2="774.5" stroke="#a6a6a6" stroke-width="2"/>
<text x="1342.5" y="789" font-size="22.5" fill="#dcdcdc" text-anchor="middle" textLength="56" lengthAdjust="spacingAndGlyphs">100%</text>
<rect x="1254" y="523.3" width="176" height="116.53" fill="url(#g48)" stroke="#050505" stroke-width="2"/>
<rect x="575.6" y="814.6" width="907.4" height="250.6" fill="#000"/>
<rect x="607" y="826" width="153" height="203.3" fill="#c1c1a5"/>
<rect x="607" y="826" width="153" height="103" fill="url(#g49)"/>
<rect x="607.9" y="826.9" width="151.2" height="201.5" fill="none" stroke="#f4f4f4" stroke-width="1.8"/>
<text x="683.5" y="1053.5" font-size="20.5" fill="#f4f4f4" text-anchor="middle" textLength="36.5" lengthAdjust="spacingAndGlyphs">20%</text>
<rect x="784.5" y="826" width="153" height="203.3" fill="#c3c38a"/>
<rect x="784.5" y="826" width="153" height="103" fill="url(#g50)"/>
<rect x="785.4" y="826.9" width="151.2" height="201.5" fill="none" stroke="#f4f4f4" stroke-width="1.8"/>
<text x="861" y="1053.5" font-size="20.5" fill="#f4f4f4" text-anchor="middle" textLength="36.5" lengthAdjust="spacingAndGlyphs">40%</text>
<rect x="962" y="826" width="153" height="203.3" fill="#c2c26c"/>
<rect x="962" y="826" width="153" height="103" fill="url(#g51)"/>
<rect x="962.9" y="826.9" width="151.2" height="201.5" fill="none" stroke="#f4f4f4" stroke-width="1.8"/>
<text x="1038.5" y="1053.5" font-size="20.5" fill="#f4f4f4" text-anchor="middle" textLength="36.5" lengthAdjust="spacingAndGlyphs">60%</text>
<rect x="1139.5" y="826" width="153" height="203.3" fill="#c3c34b"/>
<rect x="1139.5" y="826" width="153" height="103" fill="url(#g52)"/>
<rect x="1140.4" y="826.9" width="151.2" height="201.5" fill="none" stroke="#f4f4f4" stroke-width="1.8"/>
<text x="1216" y="1053.5" font-size="20.5" fill="#f4f4f4" text-anchor="middle" textLength="36.5" lengthAdjust="spacingAndGlyphs">80%</text>
<rect x="1317" y="826" width="153" height="203.3" fill="#c5c51c"/>
<rect x="1317" y="826" width="153" height="103" fill="url(#g53)"/>
<rect x="1317.9" y="826.9" width="151.2" height="201.5" fill="none" stroke="#f4f4f4" stroke-width="1.8"/>
<text x="1393.5" y="1053.5" font-size="20.5" fill="#f4f4f4" text-anchor="middle" textLength="47" lengthAdjust="spacingAndGlyphs">100%</text>
<text transform="translate(596.5 870) rotate(-90)" font-size="20.5" fill="#f4f4f4" text-anchor="middle" textLength="54" lengthAdjust="spacingAndGlyphs">Actual</text>
<text transform="translate(596.5 985) rotate(-90)" font-size="20.5" fill="#f4f4f4" text-anchor="middle" textLength="54" lengthAdjust="spacingAndGlyphs">Target</text>
</g>
<g id="cie">
<rect x="1499.3" y="235.5" width="1053.8" height="845.2" fill="#333333" stroke="#c4c206" stroke-width="10.6"/>
<text x="2025.5" y="268.5" font-size="21.5" fill="#dcdcdc" text-anchor="middle" textLength="116" lengthAdjust="spacingAndGlyphs">CIE 1931 xy</text>
<rect x="1549.5" y="276.8" width="993" height="754.6" fill="#252525"/>
<g clip-path="url(#locclip)"><g filter="url(#vblur)">
<rect x="1549.5" y="267" width="993" height="15.5" fill="url(#g54)"/>
<rect x="1549.5" y="282" width="993" height="5.6" fill="url(#g54)"/>
<rect x="1549.5" y="287" width="993" height="5.6" fill="url(#g55)"/>
<rect x="1549.5" y="292" width="993" height="5.6" fill="url(#g56)"/>
<rect x="1549.5" y="297" width="993" height="5.6" fill="url(#g57)"/>
<rect x="1549.5" y="302" width="993" height="5.6" fill="url(#g58)"/>
<rect x="1549.5" y="307" width="993" height="5.6" fill="url(#g59)"/>
<rect x="1549.5" y="312" width="993" height="5.6" fill="url(#g60)"/>
<rect x="1549.5" y="317" width="993" height="5.6" fill="url(#g61)"/>
<rect x="1549.5" y="322" width="993" height="5.6" fill="url(#g62)"/>
<rect x="1549.5" y="327" width="993" height="5.6" fill="url(#g63)"/>
<rect x="1549.5" y="332" width="993" height="5.6" fill="url(#g64)"/>
<rect x="1549.5" y="337" width="993" height="5.6" fill="url(#g65)"/>
<rect x="1549.5" y="342" width="993" height="5.6" fill="url(#g66)"/>
<rect x="1549.5" y="347" width="993" height="5.6" fill="url(#g67)"/>
<rect x="1549.5" y="352" width="993" height="5.6" fill="url(#g68)"/>
<rect x="1549.5" y="357" width="993" height="5.6" fill="url(#g69)"/>
<rect x="1549.5" y="362" width="993" height="5.6" fill="url(#g70)"/>
<rect x="1549.5" y="367" width="993" height="5.6" fill="url(#g71)"/>
<rect x="1549.5" y="372" width="993" height="5.6" fill="url(#g72)"/>
<rect x="1549.5" y="377" width="993" height="5.6" fill="url(#g73)"/>
<rect x="1549.5" y="382" width="993" height="5.6" fill="url(#g74)"/>
<rect x="1549.5" y="387" width="993" height="5.6" fill="url(#g75)"/>
<rect x="1549.5" y="392" width="993" height="5.6" fill="url(#g76)"/>
<rect x="1549.5" y="397" width="993" height="5.6" fill="url(#g77)"/>
<rect x="1549.5" y="402" width="993" height="5.6" fill="url(#g78)"/>
<rect x="1549.5" y="407" width="993" height="5.6" fill="url(#g79)"/>
<rect x="1549.5" y="412" width="993" height="5.6" fill="url(#g80)"/>
<rect x="1549.5" y="417" width="993" height="5.6" fill="url(#g81)"/>
<rect x="1549.5" y="422" width="993" height="5.6" fill="url(#g82)"/>
<rect x="1549.5" y="427" width="993" height="5.6" fill="url(#g83)"/>
<rect x="1549.5" y="432" width="993" height="5.6" fill="url(#g84)"/>
<rect x="1549.5" y="437" width="993" height="5.6" fill="url(#g85)"/>
<rect x="1549.5" y="442" width="993" height="5.6" fill="url(#g86)"/>
<rect x="1549.5" y="447" width="993" height="5.6" fill="url(#g87)"/>
<rect x="1549.5" y="452" width="993" height="5.6" fill="url(#g88)"/>
<rect x="1549.5" y="457" width="993" height="5.6" fill="url(#g89)"/>
<rect x="1549.5" y="462" width="993" height="5.6" fill="url(#g90)"/>
<rect x="1549.5" y="467" width="993" height="5.6" fill="url(#g91)"/>
<rect x="1549.5" y="472" width="993" height="5.6" fill="url(#g92)"/>
<rect x="1549.5" y="477" width="993" height="5.6" fill="url(#g93)"/>
<rect x="1549.5" y="482" width="993" height="5.6" fill="url(#g94)"/>
<rect x="1549.5" y="487" width="993" height="5.6" fill="url(#g95)"/>
<rect x="1549.5" y="492" width="993" height="5.6" fill="url(#g96)"/>
<rect x="1549.5" y="497" width="993" height="5.6" fill="url(#g97)"/>
<rect x="1549.5" y="502" width="993" height="5.6" fill="url(#g98)"/>
<rect x="1549.5" y="507" width="993" height="5.6" fill="url(#g99)"/>
<rect x="1549.5" y="512" width="993" height="5.6" fill="url(#g100)"/>
<rect x="1549.5" y="517" width="993" height="5.6" fill="url(#g101)"/>
<rect x="1549.5" y="522" width="993" height="5.6" fill="url(#g102)"/>
<rect x="1549.5" y="527" width="993" height="5.6" fill="url(#g103)"/>
<rect x="1549.5" y="532" width="993" height="5.6" fill="url(#g104)"/>
<rect x="1549.5" y="537" width="993" height="5.6" fill="url(#g105)"/>
<rect x="1549.5" y="542" width="993" height="5.6" fill="url(#g106)"/>
<rect x="1549.5" y="547" width="993" height="5.6" fill="url(#g107)"/>
<rect x="1549.5" y="552" width="993" height="5.6" fill="url(#g108)"/>
<rect x="1549.5" y="557" width="993" height="5.6" fill="url(#g109)"/>
<rect x="1549.5" y="562" width="993" height="5.6" fill="url(#g110)"/>
<rect x="1549.5" y="567" width="993" height="5.6" fill="url(#g111)"/>
<rect x="1549.5" y="572" width="993" height="5.6" fill="url(#g112)"/>
<rect x="1549.5" y="577" width="993" height="5.6" fill="url(#g113)"/>
<rect x="1549.5" y="582" width="993" height="5.6" fill="url(#g114)"/>
<rect x="1549.5" y="587" width="993" height="5.6" fill="url(#g115)"/>
<rect x="1549.5" y="592" width="993" height="5.6" fill="url(#g116)"/>
<rect x="1549.5" y="597" width="993" height="5.6" fill="url(#g117)"/>
<rect x="1549.5" y="602" width="993" height="5.6" fill="url(#g118)"/>
<rect x="1549.5" y="607" width="993" height="5.6" fill="url(#g119)"/>
<rect x="1549.5" y="612" width="993" height="5.6" fill="url(#g120)"/>
<rect x="1549.5" y="617" width="993" height="5.6" fill="url(#g121)"/>
<rect x="1549.5" y="622" width="993" height="5.6" fill="url(#g122)"/>
<rect x="1549.5" y="627" width="993" height="5.6" fill="url(#g123)"/>
<rect x="1549.5" y="632" width="993" height="5.6" fill="url(#g124)"/>
<rect x="1549.5" y="637" width="993" height="5.6" fill="url(#g125)"/>
<rect x="1549.5" y="642" width="993" height="5.6" fill="url(#g126)"/>
<rect x="1549.5" y="647" width="993" height="5.6" fill="url(#g127)"/>
<rect x="1549.5" y="652" width="993" height="5.6" fill="url(#g128)"/>
<rect x="1549.5" y="657" width="993" height="5.6" fill="url(#g129)"/>
<rect x="1549.5" y="662" width="993" height="5.6" fill="url(#g130)"/>
<rect x="1549.5" y="667" width="993" height="5.6" fill="url(#g131)"/>
<rect x="1549.5" y="672" width="993" height="5.6" fill="url(#g132)"/>
<rect x="1549.5" y="677" width="993" height="5.6" fill="url(#g133)"/>
<rect x="1549.5" y="682" width="993" height="5.6" fill="url(#g134)"/>
<rect x="1549.5" y="687" width="993" height="5.6" fill="url(#g135)"/>
<rect x="1549.5" y="692" width="993" height="5.6" fill="url(#g136)"/>
<rect x="1549.5" y="697" width="993" height="5.6" fill="url(#g137)"/>
<rect x="1549.5" y="702" width="993" height="5.6" fill="url(#g138)"/>
<rect x="1549.5" y="707" width="993" height="5.6" fill="url(#g139)"/>
<rect x="1549.5" y="712" width="993" height="5.6" fill="url(#g140)"/>
<rect x="1549.5" y="717" width="993" height="5.6" fill="url(#g141)"/>
<rect x="1549.5" y="722" width="993" height="5.6" fill="url(#g142)"/>
<rect x="1549.5" y="727" width="993" height="5.6" fill="url(#g143)"/>
<rect x="1549.5" y="732" width="993" height="5.6" fill="url(#g144)"/>
<rect x="1549.5" y="737" width="993" height="5.6" fill="url(#g145)"/>
<rect x="1549.5" y="742" width="993" height="5.6" fill="url(#g146)"/>
<rect x="1549.5" y="747" width="993" height="5.6" fill="url(#g147)"/>
<rect x="1549.5" y="752" width="993" height="5.6" fill="url(#g148)"/>
<rect x="1549.5" y="757" width="993" height="5.6" fill="url(#g149)"/>
<rect x="1549.5" y="762" width="993" height="5.6" fill="url(#g150)"/>
<rect x="1549.5" y="767" width="993" height="5.6" fill="url(#g151)"/>
<rect x="1549.5" y="772" width="993" height="5.6" fill="url(#g152)"/>
<rect x="1549.5" y="777" width="993" height="5.6" fill="url(#g153)"/>
<rect x="1549.5" y="782" width="993" height="5.6" fill="url(#g154)"/>
<rect x="1549.5" y="787" width="993" height="5.6" fill="url(#g155)"/>
<rect x="1549.5" y="792" width="993" height="5.6" fill="url(#g156)"/>
<rect x="1549.5" y="797" width="993" height="5.6" fill="url(#g157)"/>
<rect x="1549.5" y="802" width="993" height="5.6" fill="url(#g158)"/>
<rect x="1549.5" y="807" width="993" height="5.6" fill="url(#g159)"/>
<rect x="1549.5" y="812" width="993" height="5.6" fill="url(#g160)"/>
<rect x="1549.5" y="817" width="993" height="5.6" fill="url(#g161)"/>
<rect x="1549.5" y="822" width="993" height="5.6" fill="url(#g162)"/>
<rect x="1549.5" y="827" width="993" height="5.6" fill="url(#g163)"/>
<rect x="1549.5" y="832" width="993" height="5.6" fill="url(#g164)"/>
<rect x="1549.5" y="837" width="993" height="5.6" fill="url(#g165)"/>
<rect x="1549.5" y="842" width="993" height="5.6" fill="url(#g166)"/>
<rect x="1549.5" y="847" width="993" height="5.6" fill="url(#g167)"/>
<rect x="1549.5" y="852" width="993" height="5.6" fill="url(#g168)"/>
<rect x="1549.5" y="857" width="993" height="5.6" fill="url(#g169)"/>
<rect x="1549.5" y="862" width="993" height="5.6" fill="url(#g170)"/>
<rect x="1549.5" y="867" width="993" height="5.6" fill="url(#g171)"/>
<rect x="1549.5" y="872" width="993" height="5.6" fill="url(#g172)"/>
<rect x="1549.5" y="877" width="993" height="5.6" fill="url(#g173)"/>
<rect x="1549.5" y="882" width="993" height="5.6" fill="url(#g174)"/>
<rect x="1549.5" y="887" width="993" height="5.6" fill="url(#g175)"/>
<rect x="1549.5" y="892" width="993" height="5.6" fill="url(#g176)"/>
<rect x="1549.5" y="897" width="993" height="5.6" fill="url(#g177)"/>
<rect x="1549.5" y="902" width="993" height="5.6" fill="url(#g178)"/>
<rect x="1549.5" y="907" width="993" height="5.6" fill="url(#g179)"/>
<rect x="1549.5" y="912" width="993" height="5.6" fill="url(#g180)"/>
<rect x="1549.5" y="917" width="993" height="5.6" fill="url(#g181)"/>
<rect x="1549.5" y="922" width="993" height="5.6" fill="url(#g182)"/>
<rect x="1549.5" y="927" width="993" height="5.6" fill="url(#g183)"/>
<rect x="1549.5" y="932" width="993" height="5.6" fill="url(#g184)"/>
<rect x="1549.5" y="937" width="993" height="5.6" fill="url(#g185)"/>
<rect x="1549.5" y="942" width="993" height="5.6" fill="url(#g186)"/>
<rect x="1549.5" y="947" width="993" height="5.6" fill="url(#g187)"/>
<rect x="1549.5" y="952" width="993" height="5.6" fill="url(#g188)"/>
<rect x="1549.5" y="957" width="993" height="5.6" fill="url(#g189)"/>
<rect x="1549.5" y="962" width="993" height="5.6" fill="url(#g190)"/>
<rect x="1549.5" y="967" width="993" height="5.6" fill="url(#g191)"/>
<rect x="1549.5" y="972" width="993" height="5.6" fill="url(#g192)"/>
<rect x="1549.5" y="977" width="993" height="5.6" fill="url(#g193)"/>
<rect x="1549.5" y="982" width="993" height="5.6" fill="url(#g194)"/>
<rect x="1549.5" y="987" width="993" height="5.6" fill="url(#g195)"/>
<rect x="1549.5" y="992" width="993" height="5.6" fill="url(#g196)"/>
<rect x="1549.5" y="997" width="993" height="5.6" fill="url(#g197)"/>
<rect x="1549.5" y="1002" width="993" height="5.6" fill="url(#g198)"/>
<rect x="1549.5" y="1007" width="993" height="5.6" fill="url(#g199)"/>
<rect x="1549.5" y="1012" width="993" height="5.6" fill="url(#g200)"/>
<rect x="1549.5" y="1017" width="993" height="5.6" fill="url(#g201)"/>
<rect x="1549.5" y="1022" width="993" height="5.6" fill="url(#g202)"/>
<rect x="1549.5" y="1027" width="993" height="15" fill="url(#g202)"/>
</g>
<path d="M1754.29 1025.92L1754.26 1025.91L1754.22 1025.91L1754.17 1025.92L1754.1 1025.94L1754.01 1025.98L1753.93 1026L1753.86 1026.01L1753.78 1026L1753.7 1026L1753.59 1026.03L1753.46 1026.07L1753.34 1026.09L1753.23 1026.1L1753.11 1026.1L1752.99 1026.09L1752.84 1026.09L1752.68 1026.09L1752.51 1026.09L1752.33 1026.1L1752.14 1026.11L1751.92 1026.09L1751.68 1026.04L1751.41 1025.95L1751.09 1025.83L1750.71 1025.66L1750.27 1025.45L1749.79 1025.2L1749.3 1024.92L1748.76 1024.59L1748.14 1024.21L1747.43 1023.76L1746.63 1023.25L1745.78 1022.69L1744.87 1022.06L1743.9 1021.37L1742.82 1020.62L1741.64 1019.83L1740.36 1018.97L1738.92 1018.02L1737.3 1016.96L1735.52 1015.8L1733.6 1014.52L1731.55 1013.17L1729.36 1011.7L1726.98 1010.04L1724.41 1008.18L1721.66 1006.13L1718.71 1003.76L1715.62 1001.18L1712.33 998.28L1708.66 994.61L1704.56 990.14L1700.08 984.9L1695.19 978.55L1689.91 971.18L1684.23 962.7L1678.05 952.54L1671.36 940.67L1664.17 927.12L1656.42 911.37L1647.92 893.38L1638.86 873.19L1629.7 850.37L1620.52 824.7L1611.25 796.41L1602.16 765.79L1593.12 732.41L1584.27 696.71L1576.28 660.21L1569.19 622.85L1562.97 584.69L1558.19 547.46L1554.91 511.34L1553.07 476.14L1553.11 443.04L1555.14 412.01L1559.05 383.06L1564.93 357.47L1573.01 335.43L1583.06 316.74L1594.48 302.04L1607.32 291.88L1621.53 285.72L1636.32 282.48L1651.62 282.38L1667.51 285.21L1683.48 289.3L1699.49 294.39L1715.57 300.75L1731.36 307.51L1746.67 314.41L1761.69 321.71L1776.51 329.3L1791.12 337.18L1805.54 345.35L1819.89 353.79L1834.21 362.52L1848.47 371.51L1862.68 380.7L1876.82 390.09L1890.91 399.68L1904.99 409.41L1919.06 419.27L1933.12 429.27L1947.19 439.37L1961.29 449.57L1975.41 459.87L1989.5 470.22L2003.56 480.63L2017.58 491.08L2031.58 501.53L2045.58 511.98L2059.55 522.43L2073.43 532.83L2087.2 543.21L2100.89 553.54L2114.44 563.78L2127.87 573.93L2141.16 584L2154.28 593.92L2167.21 603.71L2179.96 613.35L2192.45 622.8L2204.72 632.05L2216.73 641.1L2228.39 649.89L2239.69 658.46L2250.65 666.79L2261.13 674.74L2271.07 682.26L2280.53 689.41L2289.61 696.27L2298.38 702.89L2306.76 709.23L2314.67 715.19L2322.07 720.75L2328.99 725.93L2335.48 730.8L2341.53 735.38L2347.14 739.65L2352.38 743.63L2357.22 747.31L2361.69 750.7L2365.85 753.85L2369.72 756.76L2373.28 759.43L2376.61 761.93L2379.7 764.26L2382.55 766.43L2385.24 768.48L2387.79 770.42L2390.19 772.24L2392.45 773.95L2394.56 775.55L2396.52 777.05L2398.36 778.43L2400.07 779.7L2401.64 780.86L2403.09 781.93L2404.39 782.91L2405.56 783.8L2406.63 784.62L2407.63 785.38L2408.53 786.06L2409.35 786.69L2410.15 787.29L2410.87 787.83L2411.36 788.21Z M2304.98 734.39L1903.1 492.2L1725.8 976.58Z" fill="#000" fill-opacity="0.4" fill-rule="evenodd"/>
</g>
<rect x="2195" y="285" width="341" height="289" fill="#141414" opacity="0.75" filter="url(#sblur)"/>
<g clip-path="url(#insclip)"><g filter="url(#vblur)">
<rect x="2178" y="267" width="375" height="20.5" fill="url(#g203)"/>
<rect x="2178" y="287" width="375" height="12.6" fill="url(#g203)"/>
<rect x="2178" y="299" width="375" height="12.6" fill="url(#g204)"/>
<rect x="2178" y="311" width="375" height="12.6" fill="url(#g205)"/>
<rect x="2178" y="323" width="375" height="12.6" fill="url(#g206)"/>
<rect x="2178" y="335" width="375" height="12.6" fill="url(#g207)"/>
<rect x="2178" y="347" width="375" height="12.6" fill="url(#g208)"/>
<rect x="2178" y="359" width="375" height="12.6" fill="url(#g209)"/>
<rect x="2178" y="371" width="375" height="12.6" fill="url(#g210)"/>
<rect x="2178" y="383" width="375" height="12.6" fill="url(#g211)"/>
<rect x="2178" y="395" width="375" height="12.6" fill="url(#g212)"/>
<rect x="2178" y="407" width="375" height="12.6" fill="url(#g213)"/>
<rect x="2178" y="419" width="375" height="12.6" fill="url(#g214)"/>
<rect x="2178" y="431" width="375" height="12.6" fill="url(#g215)"/>
<rect x="2178" y="443" width="375" height="12.6" fill="url(#g216)"/>
<rect x="2178" y="455" width="375" height="12.6" fill="url(#g217)"/>
<rect x="2178" y="467" width="375" height="12.6" fill="url(#g218)"/>
<rect x="2178" y="479" width="375" height="12.6" fill="url(#g219)"/>
<rect x="2178" y="491" width="375" height="12.6" fill="url(#g220)"/>
<rect x="2178" y="503" width="375" height="12.6" fill="url(#g221)"/>
<rect x="2178" y="515" width="375" height="12.6" fill="url(#g222)"/>
<rect x="2178" y="527" width="375" height="12.6" fill="url(#g223)"/>
<rect x="2178" y="539" width="375" height="12.6" fill="url(#g224)"/>
<rect x="2178" y="551" width="375" height="12.6" fill="url(#g225)"/>
<rect x="2178" y="563" width="375" height="7.6" fill="url(#g226)"/>
<rect x="2178" y="570" width="375" height="20" fill="url(#g226)"/>
</g>
<path d="M2164.5 293.88L2566.5 563.56L2566.5 282L2164.5 282Z" fill="#000" fill-opacity="0.4"/>
</g>
<rect x="2199.2" y="288.2" width="332.6" height="280.6" fill="none" stroke="#a4a4a4" stroke-width="2.4"/>
<rect x="2352" y="417" width="21" height="21" fill="none" stroke="#fff" stroke-width="2"/>
<circle cx="2484.7" cy="461.3" r="6.4" fill="#c8c010" stroke="#0a0a0a" stroke-width="1.7"/>
<rect x="1549.5" y="276.8" width="993" height="754.6" fill="none" stroke="#a6a6a6" stroke-width="2.6"/>
<line x1="1549.5" y1="1031.4" x2="1549.5" y2="1041.4" stroke="#a6a6a6" stroke-width="2"/>
<text x="1549.2" y="1065" font-size="22.5" fill="#dcdcdc" text-anchor="middle" textLength="13" lengthAdjust="spacingAndGlyphs">0</text>
<line x1="1539.5" y1="1031.4" x2="1549.5" y2="1031.4" stroke="#a6a6a6" stroke-width="2"/>
<text x="1539.5" y="1042.6" font-size="22.5" fill="#dcdcdc" text-anchor="end" textLength="13" lengthAdjust="spacingAndGlyphs">0</text>
<line x1="1666.37" y1="1031.4" x2="1666.37" y2="1041.4" stroke="#a6a6a6" stroke-width="2"/>
<text x="1666.07" y="1065" font-size="22.5" fill="#dcdcdc" text-anchor="middle" textLength="32" lengthAdjust="spacingAndGlyphs">0,1</text>
<line x1="1539.5" y1="941.7" x2="1549.5" y2="941.7" stroke="#a6a6a6" stroke-width="2"/>
<text x="1539.5" y="950.9" font-size="22.5" fill="#dcdcdc" text-anchor="end" textLength="32" lengthAdjust="spacingAndGlyphs">0,1</text>
<line x1="1784.74" y1="1031.4" x2="1784.74" y2="1041.4" stroke="#a6a6a6" stroke-width="2"/>
<text x="1784.44" y="1065" font-size="22.5" fill="#dcdcdc" text-anchor="middle" textLength="32" lengthAdjust="spacingAndGlyphs">0,2</text>
<line x1="1539.5" y1="852" x2="1549.5" y2="852" stroke="#a6a6a6" stroke-width="2"/>
<text x="1539.5" y="861.2" font-size="22.5" fill="#dcdcdc" text-anchor="end" textLength="32" lengthAdjust="spacingAndGlyphs">0,2</text>
<line x1="1903.11" y1="1031.4" x2="1903.11" y2="1041.4" stroke="#a6a6a6" stroke-width="2"/>
<text x="1902.81" y="1065" font-size="22.5" fill="#dcdcdc" text-anchor="middle" textLength="32" lengthAdjust="spacingAndGlyphs">0,3</text>
<line x1="1539.5" y1="762.3" x2="1549.5" y2="762.3" stroke="#a6a6a6" stroke-width="2"/>
<text x="1539.5" y="771.5" font-size="22.5" fill="#dcdcdc" text-anchor="end" textLength="32" lengthAdjust="spacingAndGlyphs">0,3</text>
<line x1="2021.48" y1="1031.4" x2="2021.48" y2="1041.4" stroke="#a6a6a6" stroke-width="2"/>
<text x="2021.18" y="1065" font-size="22.5" fill="#dcdcdc" text-anchor="middle" textLength="32" lengthAdjust="spacingAndGlyphs">0,4</text>
<line x1="1539.5" y1="672.6" x2="1549.5" y2="672.6" stroke="#a6a6a6" stroke-width="2"/>
<text x="1539.5" y="681.8" font-size="22.5" fill="#dcdcdc" text-anchor="end" textLength="32" lengthAdjust="spacingAndGlyphs">0,4</text>
<line x1="2139.85" y1="1031.4" x2="2139.85" y2="1041.4" stroke="#a6a6a6" stroke-width="2"/>
<text x="2139.55" y="1065" font-size="22.5" fill="#dcdcdc" text-anchor="middle" textLength="32" lengthAdjust="spacingAndGlyphs">0,5</text>
<line x1="1539.5" y1="582.9" x2="1549.5" y2="582.9" stroke="#a6a6a6" stroke-width="2"/>
<text x="1539.5" y="592.1" font-size="22.5" fill="#dcdcdc" text-anchor="end" textLength="32" lengthAdjust="spacingAndGlyphs">0,5</text>
<line x1="2258.22" y1="1031.4" x2="2258.22" y2="1041.4" stroke="#a6a6a6" stroke-width="2"/>
<text x="2257.92" y="1065" font-size="22.5" fill="#dcdcdc" text-anchor="middle" textLength="32" lengthAdjust="spacingAndGlyphs">0,6</text>
<line x1="1539.5" y1="493.2" x2="1549.5" y2="493.2" stroke="#a6a6a6" stroke-width="2"/>
<text x="1539.5" y="502.4" font-size="22.5" fill="#dcdcdc" text-anchor="end" textLength="32" lengthAdjust="spacingAndGlyphs">0,6</text>
<line x1="2376.59" y1="1031.4" x2="2376.59" y2="1041.4" stroke="#a6a6a6" stroke-width="2"/>
<text x="2376.29" y="1065" font-size="22.5" fill="#dcdcdc" text-anchor="middle" textLength="32" lengthAdjust="spacingAndGlyphs">0,7</text>
<line x1="1539.5" y1="403.5" x2="1549.5" y2="403.5" stroke="#a6a6a6" stroke-width="2"/>
<text x="1539.5" y="412.7" font-size="22.5" fill="#dcdcdc" text-anchor="end" textLength="32" lengthAdjust="spacingAndGlyphs">0,7</text>
<line x1="2494.96" y1="1031.4" x2="2494.96" y2="1041.4" stroke="#a6a6a6" stroke-width="2"/>
<text x="2494.66" y="1065" font-size="22.5" fill="#dcdcdc" text-anchor="middle" textLength="32" lengthAdjust="spacingAndGlyphs">0,8</text>
<line x1="1539.5" y1="313.8" x2="1549.5" y2="313.8" stroke="#a6a6a6" stroke-width="2"/>
<text x="1539.5" y="323" font-size="22.5" fill="#dcdcdc" text-anchor="end" textLength="32" lengthAdjust="spacingAndGlyphs">0,8</text>
<rect x="1891.5" y="480.9" width="21" height="21" fill="none" stroke="#fff" stroke-width="2"/>
<rect x="1896" y="533.7" width="21" height="21" fill="none" stroke="#fff" stroke-width="2"/>
<rect x="1898.1" y="581.2" width="21" height="21" fill="none" stroke="#fff" stroke-width="2"/>
<rect x="1902" y="627.1" width="21" height="21" fill="none" stroke="#fff" stroke-width="2"/>
<rect x="1904.7" y="675.3" width="21" height="21" fill="none" stroke="#fff" stroke-width="2"/>
<rect x="2033.2" y="566.3" width="21" height="21" fill="none" stroke="#fff" stroke-width="2"/>
<rect x="2005.9" y="600" width="21" height="21" fill="none" stroke="#fff" stroke-width="2"/>
<rect x="1983" y="629.5" width="21" height="21" fill="none" stroke="#fff" stroke-width="2"/>
<rect x="1958.7" y="658" width="21" height="21" fill="none" stroke="#fff" stroke-width="2"/>
<rect x="1933.5" y="692" width="21" height="21" fill="none" stroke="#fff" stroke-width="2"/>
<rect x="1803.7" y="725.5" width="21" height="21" fill="none" stroke="#fff" stroke-width="2"/>
<rect x="1825.1" y="725.5" width="21" height="21" fill="none" stroke="#fff" stroke-width="2"/>
<rect x="1846.1" y="725.5" width="21" height="21" fill="none" stroke="#fff" stroke-width="2"/>
<rect x="1867" y="725.5" width="21" height="21" fill="none" stroke="#fff" stroke-width="2"/>
<rect x="1887.8" y="725.5" width="21" height="21" fill="none" stroke="#fff" stroke-width="2"/>
<rect x="1983" y="723.2" width="21" height="21" fill="none" stroke="#fff" stroke-width="2"/>
<rect x="2062.4" y="723.2" width="21" height="21" fill="none" stroke="#fff" stroke-width="2"/>
<rect x="2133.3" y="723.2" width="21" height="21" fill="none" stroke="#fff" stroke-width="2"/>
<rect x="2208.6" y="723.2" width="21" height="21" fill="none" stroke="#fff" stroke-width="2"/>
<rect x="2293.9" y="723.2" width="21" height="21" fill="none" stroke="#fff" stroke-width="2"/>
<rect x="1909.8" y="756.9" width="21" height="21" fill="none" stroke="#fff" stroke-width="2"/>
<rect x="1912.5" y="790.1" width="21" height="21" fill="none" stroke="#fff" stroke-width="2"/>
<rect x="1913" y="817.3" width="21" height="21" fill="none" stroke="#fff" stroke-width="2"/>
<rect x="1914.2" y="848.6" width="21" height="21" fill="none" stroke="#fff" stroke-width="2"/>
<rect x="1916.9" y="882.3" width="21" height="21" fill="none" stroke="#fff" stroke-width="2"/>
<rect x="1868.3" y="773" width="21" height="21" fill="none" stroke="#fff" stroke-width="2"/>
<rect x="1831.4" y="821.5" width="21" height="21" fill="none" stroke="#fff" stroke-width="2"/>
<rect x="1793.8" y="867.4" width="21" height="21" fill="none" stroke="#fff" stroke-width="2"/>
<rect x="1756.5" y="913.3" width="21" height="21" fill="none" stroke="#fff" stroke-width="2"/>
<rect x="1714.2" y="965.2" width="21" height="21" fill="none" stroke="#fff" stroke-width="2"/>
<circle cx="1970.8" cy="516.8" r="6.4" fill="#0cb40c" stroke="#0a0a0a" stroke-width="1.7"/>
<circle cx="1961.1" cy="564.6" r="6.4" fill="#50b450" stroke="#0a0a0a" stroke-width="1.7"/>
<circle cx="1947.8" cy="610.5" r="6.4" fill="#68b468" stroke="#0a0a0a" stroke-width="1.7"/>
<circle cx="1942.1" cy="650.2" r="6.4" fill="#88b488" stroke="#0a0a0a" stroke-width="1.7"/>
<circle cx="1933.7" cy="690" r="6.4" fill="#a0b4a0" stroke="#0a0a0a" stroke-width="1.7"/>
<circle cx="2065.4" cy="581.2" r="6.4" fill="#c0b410" stroke="#0a0a0a" stroke-width="1.7"/>
<circle cx="2031.6" cy="617.1" r="6.4" fill="#bcb450" stroke="#0a0a0a" stroke-width="1.7"/>
<circle cx="2004.5" cy="643.9" r="6.4" fill="#bcb468" stroke="#0a0a0a" stroke-width="1.7"/>
<circle cx="1977.2" cy="673.2" r="6.4" fill="#bcb888" stroke="#0a0a0a" stroke-width="1.7"/>
<circle cx="1950.6" cy="702" r="6.4" fill="#bcb8a0" stroke="#0a0a0a" stroke-width="1.7"/>
<circle cx="1846.2" cy="736.4" r="6.4" fill="#10b4b4" stroke="#0a0a0a" stroke-width="1.7"/>
<circle cx="1862.6" cy="736.4" r="6.4" fill="#48b4b0" stroke="#0a0a0a" stroke-width="1.7"/>
<circle cx="1877.2" cy="733.7" r="6.4" fill="#68b4ac" stroke="#0a0a0a" stroke-width="1.7"/>
<circle cx="1892.1" cy="733.4" r="6.4" fill="#88b4ac" stroke="#0a0a0a" stroke-width="1.7"/>
<circle cx="1908.3" cy="731.8" r="6.4" fill="#a0b4ac" stroke="#0a0a0a" stroke-width="1.7"/>
<circle cx="1981.5" cy="725.1" r="6.4" fill="#c09090" stroke="#0a0a0a" stroke-width="1.7"/>
<circle cx="2039.6" cy="723" r="6.4" fill="#c07070" stroke="#0a0a0a" stroke-width="1.7"/>
<circle cx="2100.3" cy="719.3" r="6.4" fill="#c05858" stroke="#0a0a0a" stroke-width="1.7"/>
<circle cx="2173" cy="710.3" r="6.4" fill="#c03c3c" stroke="#0a0a0a" stroke-width="1.7"/>
<circle cx="2238" cy="705" r="6.4" fill="#b41414" stroke="#0a0a0a" stroke-width="1.7"/>
<circle cx="1916.7" cy="756.4" r="6.4" fill="#c0a0b8" stroke="#0a0a0a" stroke-width="1.7"/>
<circle cx="1910.4" cy="782" r="6.4" fill="#c088b0" stroke="#0a0a0a" stroke-width="1.7"/>
<circle cx="1906.4" cy="805" r="6.4" fill="#c068b0" stroke="#0a0a0a" stroke-width="1.7"/>
<circle cx="1900.3" cy="829.3" r="6.4" fill="#c048b0" stroke="#0a0a0a" stroke-width="1.7"/>
<circle cx="1896" cy="854.9" r="6.4" fill="#c010b4" stroke="#0a0a0a" stroke-width="1.7"/>
<circle cx="1883.2" cy="771.3" r="6.4" fill="#a0a0b8" stroke="#0a0a0a" stroke-width="1.7"/>
<circle cx="1847.7" cy="810.5" r="6.4" fill="#8080b8" stroke="#0a0a0a" stroke-width="1.7"/>
<circle cx="1810.6" cy="848.1" r="6.4" fill="#6464b8" stroke="#0a0a0a" stroke-width="1.7"/>
<circle cx="1774.2" cy="883.5" r="6.4" fill="#4040b4" stroke="#0a0a0a" stroke-width="1.7"/>
<circle cx="1741.5" cy="919.8" r="6.4" fill="#0c10a0" stroke="#0a0a0a" stroke-width="1.7"/>
<rect x="1908.7" y="725.5" width="21" height="21" fill="none" stroke="#0a0a0a" stroke-width="2.5"/>
<circle cx="1916.7" cy="736.4" r="6.4" fill="#ffffff" stroke="#0a0a0a" stroke-width="1.7"/>
</g>
<g id="reading">
<text x="23.5" y="1175.7" font-size="44.5" fill="#f2f2f2" textLength="336" lengthAdjust="spacingAndGlyphs" stroke="#f2f2f2" stroke-width="0.45">Current Reading</text>
<text x="23.5" y="1240.7" font-size="37.8" fill="#f2f2f2" textLength="156.5" lengthAdjust="spacingAndGlyphs" stroke="#f2f2f2" stroke-width="0.45">x: 0,4372</text>
<text x="23.5" y="1304.5" font-size="37.8" fill="#f2f2f2" textLength="158" lengthAdjust="spacingAndGlyphs" stroke="#f2f2f2" stroke-width="0.45">y: 0,4992</text>
<text x="23.5" y="1366.6" font-size="37.8" fill="#f2f2f2" textLength="148" lengthAdjust="spacingAndGlyphs" stroke="#f2f2f2" stroke-width="0.45">fL: 40,65</text>
<text x="23.5" y="1429.2" font-size="37.8" fill="#f2f2f2" textLength="244" lengthAdjust="spacingAndGlyphs" stroke="#f2f2f2" stroke-width="0.45">cd/m²: 139,29</text>
</g>
<g id="rgbbal">
<text x="716.5" y="1137" font-size="21.5" fill="#dcdcdc" text-anchor="middle" textLength="125.6" lengthAdjust="spacingAndGlyphs">RGB Balance</text>
<rect x="548.3" y="1146" width="382.7" height="275.7" fill="#252525"/>
<line x1="548.3" y1="1216.3" x2="931" y2="1216.3" stroke="#9a9a9a" stroke-width="2"/>
<line x1="548.3" y1="1285" x2="931" y2="1285" stroke="#9a9a9a" stroke-width="2"/>
<line x1="548.3" y1="1353.6" x2="931" y2="1353.6" stroke="#9a9a9a" stroke-width="2"/>
<line x1="538.3" y1="1146" x2="548.3" y2="1146" stroke="#a6a6a6" stroke-width="2"/>
<text x="539.1" y="1154.8" font-size="22.5" fill="#dcdcdc" text-anchor="end" textLength="36" lengthAdjust="spacingAndGlyphs">110</text>
<line x1="538.3" y1="1216.3" x2="548.3" y2="1216.3" stroke="#a6a6a6" stroke-width="2"/>
<text x="539.1" y="1225.1" font-size="22.5" fill="#dcdcdc" text-anchor="end" textLength="36" lengthAdjust="spacingAndGlyphs">105</text>
<line x1="538.3" y1="1285" x2="548.3" y2="1285" stroke="#a6a6a6" stroke-width="2"/>
<text x="539.1" y="1293.8" font-size="22.5" fill="#dcdcdc" text-anchor="end" textLength="36" lengthAdjust="spacingAndGlyphs">100</text>
<line x1="538.3" y1="1353.6" x2="548.3" y2="1353.6" stroke="#a6a6a6" stroke-width="2"/>
<text x="539.1" y="1362.4" font-size="22.5" fill="#dcdcdc" text-anchor="end" textLength="24" lengthAdjust="spacingAndGlyphs">95</text>
<line x1="538.3" y1="1421.7" x2="548.3" y2="1421.7" stroke="#a6a6a6" stroke-width="2"/>
<text x="539.1" y="1430.5" font-size="22.5" fill="#dcdcdc" text-anchor="end" textLength="24" lengthAdjust="spacingAndGlyphs">90</text>
<rect x="585.5" y="1270.8" width="99.5" height="150.9" fill="url(#g227)" stroke="#050505" stroke-width="2"/>
<rect x="689" y="1348.2" width="98.5" height="73.5" fill="url(#g228)" stroke="#050505" stroke-width="2"/>
<rect x="791.5" y="1397.6" width="98.5" height="24.1" fill="url(#g229)" stroke="#050505" stroke-width="2"/>
<rect x="548.3" y="1146" width="382.7" height="275.7" fill="none" stroke="#a6a6a6" stroke-width="2.6"/>
<line x1="548.3" y1="1421.7" x2="548.3" y2="1431.7" stroke="#a6a6a6" stroke-width="2"/>
<line x1="931" y1="1421.7" x2="931" y2="1431.7" stroke="#a6a6a6" stroke-width="2"/>
<text x="740.3" y="1446" font-size="22.5" fill="#dcdcdc" text-anchor="middle" textLength="54" lengthAdjust="spacingAndGlyphs">100%</text>
</g>
<g id="table" font-family="'DejaVu Sans', 'Liberation Sans', sans-serif">
<rect x="962" y="1107.5" width="1119" height="310.1" fill="#0a0a0a"/>
<rect x="964.6" y="1110.1" width="1113.8" height="24" fill="url(#g230)"/>
<rect x="964.6" y="1134.1" width="1113.8" height="23.2" fill="url(#g231)"/>
<text x="1344.5" y="1142" font-size="23.6" fill="#f4f4f4" text-anchor="middle" textLength="64" lengthAdjust="spacingAndGlyphs">20%</text>
<text x="1507.5" y="1142" font-size="23.6" fill="#f4f4f4" text-anchor="middle" textLength="64" lengthAdjust="spacingAndGlyphs">40%</text>
<text x="1670.5" y="1142" font-size="23.6" fill="#f4f4f4" text-anchor="middle" textLength="64" lengthAdjust="spacingAndGlyphs">60%</text>
<text x="1833.5" y="1142" font-size="23.6" fill="#f4f4f4" text-anchor="middle" textLength="64" lengthAdjust="spacingAndGlyphs">80%</text>
<text x="1996.5" y="1142" font-size="23.6" fill="#f4f4f4" text-anchor="middle" textLength="82" lengthAdjust="spacingAndGlyphs">100%</text>
<rect x="964.6" y="1157" width="1113.8" height="43.73" fill="#424242"/>
<text x="993.5" y="1189.1" font-size="26.5" fill="#f4f4f4" font-weight="bold" textLength="131.5" lengthAdjust="spacingAndGlyphs">x: CIE31</text>
<text x="1271.4" y="1189.1" font-size="25.8" fill="#f4f4f4" textLength="106.3" lengthAdjust="spacingAndGlyphs">0,3399</text>
<text x="1434.3" y="1189.1" font-size="25.8" fill="#f4f4f4" textLength="106.3" lengthAdjust="spacingAndGlyphs">0,3636</text>
<text x="1597.2" y="1189.1" font-size="25.8" fill="#f4f4f4" textLength="106.3" lengthAdjust="spacingAndGlyphs">0,3862</text>
<text x="1760.1" y="1189.1" font-size="25.8" fill="#f4f4f4" textLength="106.3" lengthAdjust="spacingAndGlyphs">0,4095</text>
<text x="1923" y="1189.1" font-size="25.8" fill="#f4f4f4" textLength="106.3" lengthAdjust="spacingAndGlyphs">0,4372</text>
<rect x="964.6" y="1200.43" width="1113.8" height="43.73" fill="#808080"/>
<text x="993.5" y="1232.53" font-size="26.5" fill="#f4f4f4" font-weight="bold" textLength="130" lengthAdjust="spacingAndGlyphs">y: CIE31</text>
<text x="1271.4" y="1232.53" font-size="25.8" fill="#f4f4f4" textLength="106.3" lengthAdjust="spacingAndGlyphs">0,3659</text>
<text x="1434.3" y="1232.53" font-size="25.8" fill="#f4f4f4" textLength="106.3" lengthAdjust="spacingAndGlyphs">0,3984</text>
<text x="1597.2" y="1232.53" font-size="25.8" fill="#f4f4f4" textLength="106.3" lengthAdjust="spacingAndGlyphs">0,4294</text>
<text x="1760.1" y="1232.53" font-size="25.8" fill="#f4f4f4" textLength="106.3" lengthAdjust="spacingAndGlyphs">0,4614</text>
<text x="1923" y="1232.53" font-size="25.8" fill="#f4f4f4" textLength="106.3" lengthAdjust="spacingAndGlyphs">0,4992</text>
<rect x="964.6" y="1243.86" width="1113.8" height="43.73" fill="#424242"/>
<text x="993.5" y="1275.96" font-size="26.5" fill="#f4f4f4" font-weight="bold" textLength="19.5" lengthAdjust="spacingAndGlyphs">Y</text>
<text x="1271.4" y="1275.96" font-size="25.8" fill="#f4f4f4" textLength="144.5" lengthAdjust="spacingAndGlyphs">160,0523</text>
<text x="1434.3" y="1275.96" font-size="25.8" fill="#f4f4f4" textLength="144.5" lengthAdjust="spacingAndGlyphs">153,6194</text>
<text x="1597.2" y="1275.96" font-size="25.8" fill="#f4f4f4" textLength="144.5" lengthAdjust="spacingAndGlyphs">148,6825</text>
<text x="1760.1" y="1275.96" font-size="25.8" fill="#f4f4f4" textLength="144.5" lengthAdjust="spacingAndGlyphs">144,4579</text>
<text x="1923" y="1275.96" font-size="25.8" fill="#f4f4f4" textLength="144.5" lengthAdjust="spacingAndGlyphs">139,2879</text>
<rect x="964.6" y="1287.29" width="1113.8" height="43.73" fill="#808080"/>
<text x="993.5" y="1319.39" font-size="26.5" fill="#f4f4f4" font-weight="bold" textLength="239" lengthAdjust="spacingAndGlyphs">Target x:CIE31</text>
<text x="1271.4" y="1319.39" font-size="25.8" fill="#f4f4f4" textLength="106.3" lengthAdjust="spacingAndGlyphs">0,3344</text>
<text x="1434.3" y="1319.39" font-size="25.8" fill="#f4f4f4" textLength="106.3" lengthAdjust="spacingAndGlyphs">0,3564</text>
<text x="1597.2" y="1319.39" font-size="25.8" fill="#f4f4f4" textLength="106.3" lengthAdjust="spacingAndGlyphs">0,3773</text>
<text x="1760.1" y="1319.39" font-size="25.8" fill="#f4f4f4" textLength="106.3" lengthAdjust="spacingAndGlyphs">0,3969</text>
<text x="1923" y="1319.39" font-size="25.8" fill="#f4f4f4" textLength="106.3" lengthAdjust="spacingAndGlyphs">0,4193</text>
<rect x="964.6" y="1330.72" width="1113.8" height="43.73" fill="#424242"/>
<text x="993.5" y="1362.82" font-size="26.5" fill="#f4f4f4" font-weight="bold" textLength="239" lengthAdjust="spacingAndGlyphs">Target y:CIE31</text>
<text x="1271.4" y="1362.82" font-size="25.8" fill="#f4f4f4" textLength="106.3" lengthAdjust="spacingAndGlyphs">0,3648</text>
<text x="1434.3" y="1362.82" font-size="25.8" fill="#f4f4f4" textLength="106.3" lengthAdjust="spacingAndGlyphs">0,4013</text>
<text x="1597.2" y="1362.82" font-size="25.8" fill="#f4f4f4" textLength="106.3" lengthAdjust="spacingAndGlyphs">0,4358</text>
<text x="1760.1" y="1362.82" font-size="25.8" fill="#f4f4f4" textLength="106.3" lengthAdjust="spacingAndGlyphs">0,4682</text>
<text x="1923" y="1362.82" font-size="25.8" fill="#f4f4f4" textLength="106.3" lengthAdjust="spacingAndGlyphs">0,5053</text>
<rect x="964.6" y="1374.15" width="1113.8" height="43.73" fill="#808080"/>
<text x="993.5" y="1406.25" font-size="26.5" fill="#f4f4f4" font-weight="bold" textLength="137.3" lengthAdjust="spacingAndGlyphs">Target Y</text>
<text x="1271.4" y="1406.25" font-size="25.8" fill="#f4f4f4" textLength="144.5" lengthAdjust="spacingAndGlyphs">163,1476</text>
<text x="1434.3" y="1406.25" font-size="25.8" fill="#f4f4f4" textLength="144.5" lengthAdjust="spacingAndGlyphs">160,2838</text>
<text x="1597.2" y="1406.25" font-size="25.8" fill="#f4f4f4" textLength="144.5" lengthAdjust="spacingAndGlyphs">158,0835</text>
<text x="1760.1" y="1406.25" font-size="25.8" fill="#f4f4f4" textLength="144.5" lengthAdjust="spacingAndGlyphs">156,3566</text>
<text x="1923" y="1406.25" font-size="25.8" fill="#f4f4f4" textLength="144.5" lengthAdjust="spacingAndGlyphs">154,6872</text>
</g>
<g id="bottombar">
<rect x="0" y="1526" width="2560" height="102" fill="url(#g232)"/>
<rect x="1.5" y="1526.5" width="74.1" height="99.5" fill="url(#g233)" rx="6"/>
<path d="M2.1 1532.5a6 6 0 0 1 6 -5.4H69a6 6 0 0 1 6 5.4" fill="none" stroke="#c8c8c8" stroke-width="1.2" opacity="0.8"/>
<circle cx="39.2" cy="1541.3" r="13" fill="url(#g235)"/>
<path d="M31.7 1544.8h15l-7.5-8z" fill="#111"/>
<rect x="10.5" y="1569.2" width="57" height="48.5" fill="#ffff00" rx="5" stroke="#b8b800" stroke-width="1"/>
<rect x="85.3" y="1526.5" width="246" height="99.5" fill="url(#g233)" rx="6"/>
<path d="M85.9 1532.5a6 6 0 0 1 6 -5.4H324.7a6 6 0 0 1 6 5.4" fill="none" stroke="#c8c8c8" stroke-width="1.2" opacity="0.8"/>
<rect x="95.1" y="1535" width="228.4" height="58.6" fill="#c3c3a6" rx="5" stroke="#8a8a60" stroke-width="1.2"/>
<text x="208.3" y="1619" font-size="17.5" fill="#2e2e2e" text-anchor="middle" font-weight="bold" textLength="33.5" lengthAdjust="spacingAndGlyphs">20%</text>
<rect x="334.7" y="1526.5" width="246" height="99.5" fill="url(#g233)" rx="6"/>
<path d="M335.3 1532.5a6 6 0 0 1 6 -5.4H574.1a6 6 0 0 1 6 5.4" fill="none" stroke="#c8c8c8" stroke-width="1.2" opacity="0.8"/>
<rect x="344.5" y="1535" width="228.4" height="58.6" fill="#c4c48b" rx="5" stroke="#8a8a60" stroke-width="1.2"/>
<text x="457.7" y="1619" font-size="17.5" fill="#2e2e2e" text-anchor="middle" font-weight="bold" textLength="33.5" lengthAdjust="spacingAndGlyphs">40%</text>
<rect x="584.1" y="1526.5" width="246" height="99.5" fill="url(#g233)" rx="6"/>
<path d="M584.7 1532.5a6 6 0 0 1 6 -5.4H823.5a6 6 0 0 1 6 5.4" fill="none" stroke="#c8c8c8" stroke-width="1.2" opacity="0.8"/>
<rect x="593.9" y="1535" width="228.4" height="58.6" fill="#c2c26c" rx="5" stroke="#8a8a60" stroke-width="1.2"/>
<text x="707.1" y="1619" font-size="17.5" fill="#2e2e2e" text-anchor="middle" font-weight="bold" textLength="33.5" lengthAdjust="spacingAndGlyphs">60%</text>
<rect x="833.5" y="1526.5" width="246" height="99.5" fill="url(#g233)" rx="6"/>
<path d="M834.1 1532.5a6 6 0 0 1 6 -5.4H1072.9a6 6 0 0 1 6 5.4" fill="none" stroke="#c8c8c8" stroke-width="1.2" opacity="0.8"/>
<rect x="843.3" y="1535" width="228.4" height="58.6" fill="#c3c34b" rx="5" stroke="#8a8a60" stroke-width="1.2"/>
<text x="956.5" y="1619" font-size="17.5" fill="#2e2e2e" text-anchor="middle" font-weight="bold" textLength="33.5" lengthAdjust="spacingAndGlyphs">80%</text>
<rect x="1082.9" y="1526.5" width="246" height="99.5" fill="url(#g234)" rx="6"/>
<path d="M1083.5 1532.5a6 6 0 0 1 6 -5.4H1322.3a6 6 0 0 1 6 5.4" fill="none" stroke="#c8c8c8" stroke-width="1.2" opacity="0.15"/>
<rect x="1092.7" y="1535" width="228.4" height="58.6" fill="#c6c602" rx="5" stroke="#7a7a00" stroke-width="1.2"/>
<text x="1205.9" y="1619" font-size="17.5" fill="#fff" text-anchor="middle" font-weight="bold" textLength="43.5" lengthAdjust="spacingAndGlyphs">100%</text>
<rect x="2030.2" y="1526.3" width="78.8" height="30" fill="url(#g233)" rx="5"/>
<path d="M2030.8 1531.3a5 5 0 0 1 5 -4.4H2103.4a5 5 0 0 1 5 4.4" fill="none" stroke="#c8c8c8" stroke-width="1.2" opacity="0.8"/>
<circle cx="2070" cy="1541.2" r="12.5" fill="url(#g236)"/>
<path d="M2062.5 1544.8h15l-7.5-8z" fill="#111"/>
<rect x="2030.2" y="1557.6" width="78.8" height="68.4" fill="url(#g237)" rx="5"/>
<path d="M2030.8 1562.6a5 5 0 0 1 5 -4.4H2103.4a5 5 0 0 1 5 4.4" fill="none" stroke="#c8c8c8" stroke-width="1.2" opacity="0.15"/>
<rect x="2045.9" y="1568.3" width="46.2" height="46.2" fill="url(#g238)" rx="7" stroke="#222222" stroke-width="4"/>
<rect x="2058.4" y="1580.9" width="22.5" height="22" fill="#050505"/>
<rect x="2111.6" y="1526.3" width="369.3" height="49.1" fill="url(#g233)" rx="4"/>
<path d="M2112.2 1530.3a4 4 0 0 1 4 -3.4H2476.3a4 4 0 0 1 4 3.4" fill="none" stroke="#c8c8c8" stroke-width="1.2" opacity="0.8"/>
<circle cx="2148.75" cy="1551.5" r="16" fill="url(#g239)"/>
<line x1="2186.5" y1="1527" x2="2186.5" y2="1575.4" stroke="#4a4a4a" stroke-width="1.3"/>
<circle cx="2223.5" cy="1551.5" r="16" fill="url(#g240)"/>
<line x1="2260.5" y1="1527" x2="2260.5" y2="1575.4" stroke="#4a4a4a" stroke-width="1.3"/>
<circle cx="2297.25" cy="1551.5" r="16" fill="url(#g241)"/>
<line x1="2334" y1="1527" x2="2334" y2="1575.4" stroke="#4a4a4a" stroke-width="1.3"/>
<circle cx="2371" cy="1551.5" r="16" fill="url(#g242)"/>
<line x1="2408" y1="1527" x2="2408" y2="1575.4" stroke="#4a4a4a" stroke-width="1.3"/>
<circle cx="2444.75" cy="1551.5" r="16" fill="url(#g243)"/>
<rect x="2141.3" y="1545" width="13.5" height="13.5" fill="#2a2a2a"/>
<path d="M2217.5 1542.3v18.4l15-9.2z" fill="#2a2a2a"/>
<path d="M2291 1543.5h-3.5v16h3.5M2304 1543.5h3.5v16h-3.5" fill="none" stroke="#2a2a2a" stroke-width="2.4"/>
<path d="M2292.5 1551.5h3.4M2299 1551.5h3.4" stroke="#2a2a2a" stroke-width="2.4"/>
<path d="M2371.5 1551.3c-2.6-3.6-4.4-4.6-6.4-4.6a4.5 4.5 0 0 0 0 9.2c2 0 3.8-1 6.4-4.6c2.6 3.6 4.4 4.6 6.4 4.6a4.5 4.5 0 0 0 0-9.2c-2 0-3.8 1-6.4 4.6z" fill="none" stroke="#2a2a2a" stroke-width="2.3"/>
<g fill="none" stroke="#2a2a2a" stroke-width="3"><path d="M2437.3 1549.5a8.6 8.6 0 0 1 15.3-3.2"/><path d="M2453.7 1553.5a8.6 8.6 0 0 1 -15.3 3.2"/></g>
<path d="M2455.5 1541.5v7.8h-7.8z" fill="#2a2a2a"/><path d="M2435.5 1561.5v-7.8h7.8z" fill="#2a2a2a"/>
<circle cx="2520" cy="1550.7" r="15.5" fill="#2b2b2b" opacity="0.5"/>
<rect x="2111.6" y="1577.6" width="221.9" height="48.4" fill="url(#g244)" rx="4"/>
<path d="M2112.2 1581.6a4 4 0 0 1 4 -3.4H2328.9a4 4 0 0 1 4 3.4" fill="none" stroke="#c8c8c8" stroke-width="1.2" opacity="0.15"/>
<rect x="2334.7" y="1577.6" width="221.3" height="48.4" fill="url(#g245)" rx="4"/>
<path d="M2335.3 1581.6a4 4 0 0 1 4 -3.4H2551.4a4 4 0 0 1 4 3.4" fill="none" stroke="#c8c8c8" stroke-width="1.2" opacity="0.15"/>
<line x1="2334.1" y1="1578" x2="2334.1" y2="1626" stroke="#555" stroke-width="1.2"/>
<circle cx="2160.4" cy="1602" r="16" fill="url(#g246)"/>
<circle cx="2510" cy="1602" r="16" fill="url(#g247)"/>
<text x="2160.4" y="1611" font-size="28" fill="#2a2a2a" text-anchor="middle">«</text>
<text x="2510" y="1611" font-size="28" fill="#2a2a2a" text-anchor="middle">»</text>
<text x="2205.6" y="1613.8" font-size="34.5" fill="#303030" textLength="82" lengthAdjust="spacingAndGlyphs" stroke="#303030" stroke-width="1">Back</text>
<text x="2380.3" y="1613.8" font-size="34.5" fill="#303030" textLength="84.5" lengthAdjust="spacingAndGlyphs" stroke="#303030" stroke-width="1">Next</text>
</g>
<rect x="0" y="37" width="1.2" height="57" fill="#2a2a2a"/>
<rect x="0" y="144.5" width="1.7" height="1483.5" fill="#272727"/>
<rect x="2553.5" y="95" width="6.5" height="1533" fill="url(#g248)"/></svg>
</body></html>
